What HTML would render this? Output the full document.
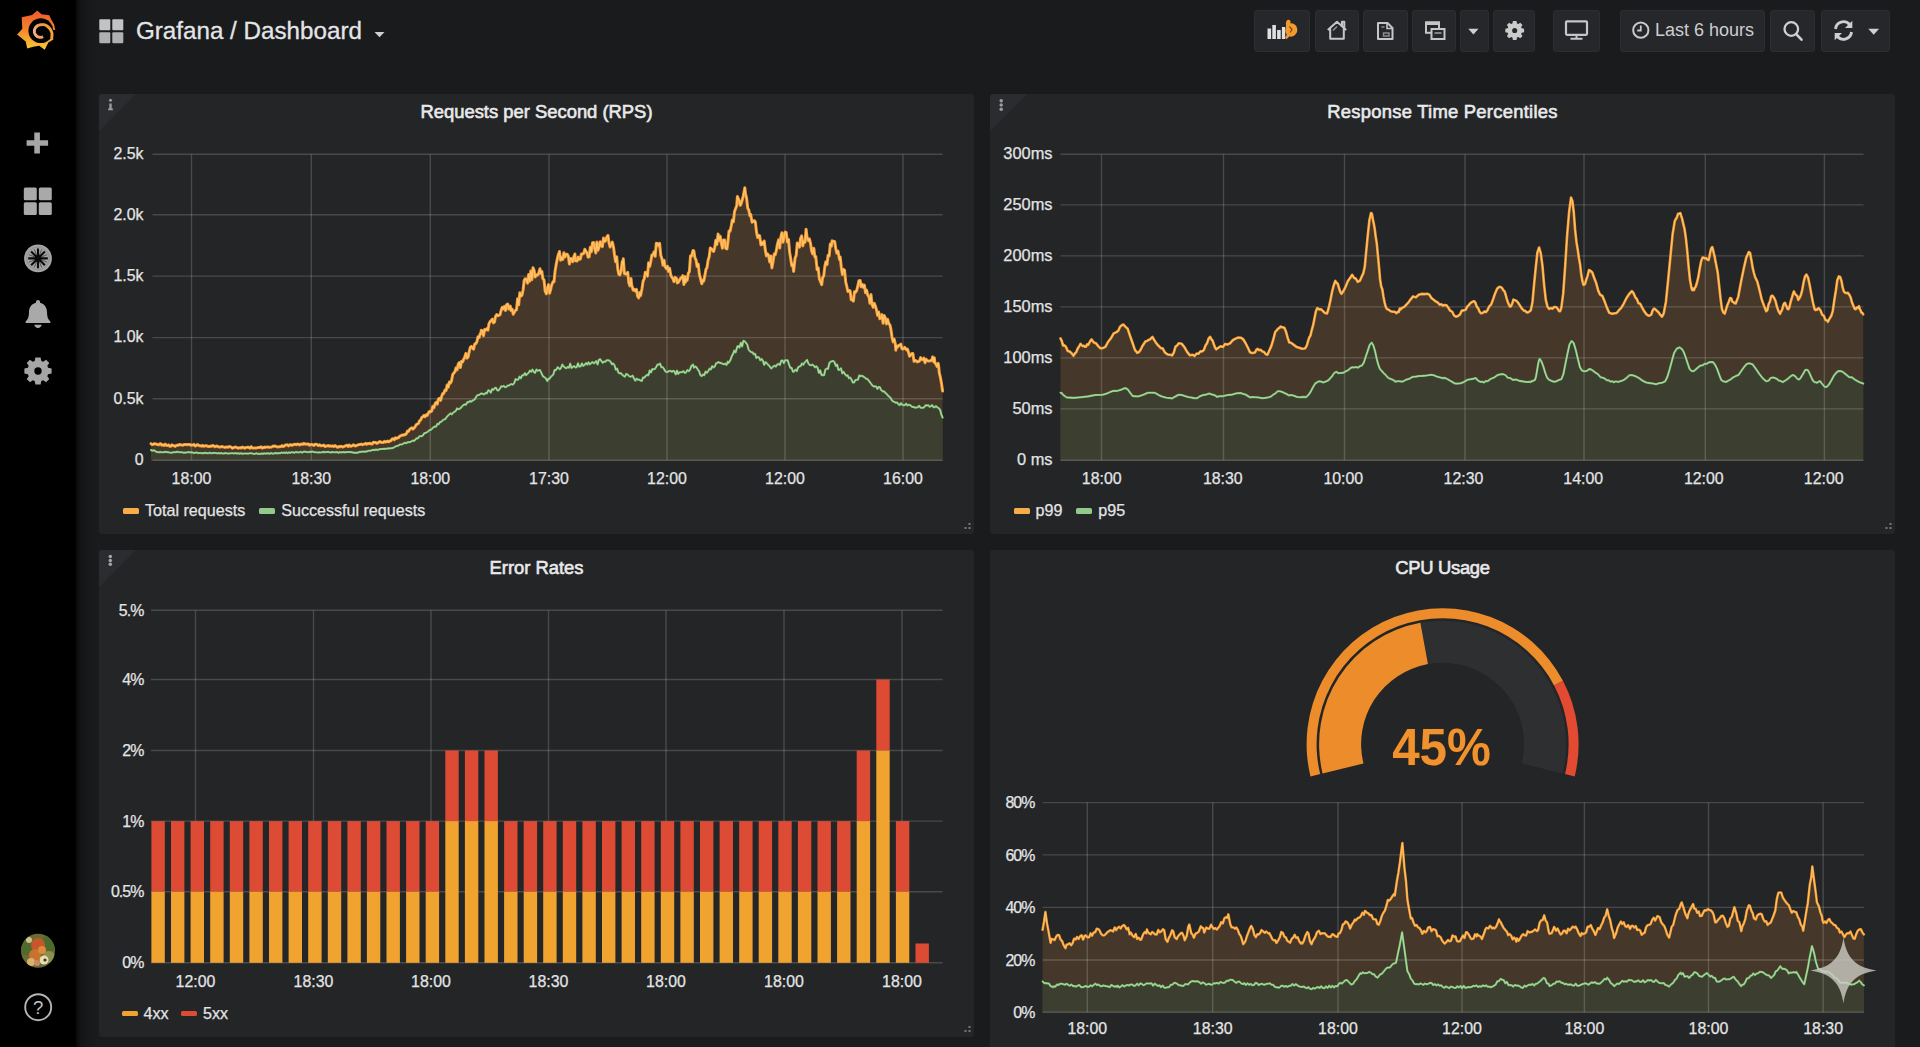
<!DOCTYPE html>
<html lang="en">
<head>
<meta charset="utf-8">
<title>Grafana / Dashboard</title>
<style>
html,body{margin:0;padding:0;}
body{width:1920px;height:1047px;overflow:hidden;position:relative;background:#191b1d;font-family:"Liberation Sans",sans-serif;color:#d8d9da;}
.sidebar{position:absolute;left:0;top:0;width:75px;height:1047px;background:#000;z-index:5;}
.sideshade{position:absolute;left:75px;top:0;width:24px;height:1047px;background:linear-gradient(to right,#000 0,rgba(2,3,4,.62) 9%,rgba(6,8,9,.34) 26%,rgba(10,13,14,.15) 60%,rgba(16,19,20,0) 100%);z-index:0;pointer-events:none;}
.sidebar svg{position:absolute;}
.navbar{position:absolute;left:76px;top:0;right:0;height:62px;}
.crumb{position:absolute;left:60px;top:14px;font-size:24.2px;line-height:34px;color:#e4e5e6;white-space:nowrap;-webkit-text-stroke:0.3px #e4e5e6;}
.btn{position:absolute;top:10.2px;height:40px;background:#26272a;border:1px solid #2d2e32;border-radius:3px;box-sizing:content-box;}
.btn svg{position:absolute;left:0;top:0;}
.btn span{position:absolute;white-space:nowrap;color:#cdcecf;font-size:18px;line-height:20px;}
.panel{position:absolute;background:#242527;border-radius:3px;overflow:hidden;}
.panel>svg{position:absolute;left:0;top:0;}
.ptitle{position:absolute;left:0;right:0;top:6.3px;text-align:center;font-size:18.4px;line-height:24px;color:#e9eaeb;-webkit-text-stroke:0.6px #e9eaeb;}
.corner{position:absolute;left:0;top:0;width:0;height:0;border-top:37px solid #2b2c2f;border-right:37px solid transparent;}
.legend{position:absolute;font-size:16.1px;line-height:20px;color:#e3e4e5;white-space:nowrap;-webkit-text-stroke:0.25px #e3e4e5;}
.legend i{display:inline-block;width:16px;height:5.5px;border-radius:1.5px;vertical-align:middle;margin:0 6px 1.5px 0;}
.legend b{font-weight:normal;margin-right:14px;}
text.ax{font-family:"Liberation Sans",sans-serif;font-size:15.9px;fill:#e3e4e5;stroke:#e3e4e5;stroke-width:0.25px;}
text.a2{font-size:16.4px;}
text.gv{font-family:"Liberation Sans",sans-serif;font-size:52.5px;font-weight:bold;fill:#ef922f;stroke:#3a2a14;stroke-width:1.2px;paint-order:stroke;}
.ol{fill:none;stroke:#f59a30;stroke-linejoin:round;stroke-linecap:round;}
.ol2{fill:none;stroke:#ffc46e;stroke-linejoin:round;stroke-linecap:round;}
.gl{fill:none;stroke:#79bd73;stroke-width:2.1;stroke-linejoin:round;stroke-linecap:round;}
.gl2{fill:none;stroke:#b4e0aa;stroke-width:0.9;stroke-linejoin:round;stroke-linecap:round;}
</style>
</head>
<body>

<div class="sidebar">
  <!-- logo -->
  <svg style="left:14px;top:6px" width="48" height="48" viewBox="14 6 48 48">
    <defs><linearGradient id="lg" x1="0" y1="0" x2="0" y2="1"><stop offset="0" stop-color="#f0572b"/><stop offset="0.45" stop-color="#f4812d"/><stop offset="1" stop-color="#f9cb35"/></linearGradient>
    <linearGradient id="lg2" gradientUnits="userSpaceOnUse" x1="52" y1="30" x2="33" y2="34"><stop offset="0" stop-color="#f5a431"/><stop offset="0.5" stop-color="#f3974a"/><stop offset="1" stop-color="#f6b595"/></linearGradient></defs>
    <path d="M21.7 17.2 L32.1 15 L37.2 10.500 L41.500 14.300 L49.300 15.200 L51.300 19.800 L54.100 24.600 L55.300 30.300 L52.800 30 L52.400 35 L53.400 39.500 L48.400 42.400 L44.700 49.800 L39.200 45.800 L33.200 46.700 L27.200 48.400 L25.700 41.400 L17.100 34.400 L22.300 28.700 Z" fill="url(#lg)"/>
    <circle cx="40.800" cy="30.700" r="12.400" fill="#040404"/>
    <path d="M52 29.600 L56 30.400 L54.500 35.500 L51.800 34.500Z" fill="#000"/>
    <path d="M51.6 38.2 L51.9 36.8 L52.0 35.5 L52.0 34.3 L51.9 33.0 L51.6 31.9 L51.1 30.8 L50.6 29.8 L50.0 28.9 L49.3 28.1 L48.6 27.4 L48.0 26.8 L47.3 26.2 L46.6 25.7 L45.8 25.3 L45.0 25.0 L44.2 24.7 L43.5 24.6 L42.7 24.6 L41.9 24.6 L41.2 24.7 L40.5 24.8 L39.8 24.9 L39.1 25.1 L38.4 25.3 L37.8 25.6 L37.2 26.0 L36.7 26.4 L36.2 26.9 L35.7 27.4 L35.3 28.0 L35.0 28.6 L34.7 29.2 L34.5 29.9 L34.4 30.6 L34.4 31.3 L34.4 32.0 L34.5 32.6 L34.7 33.3 L35.0 33.9 L35.3 34.5 L35.7 35.0 L36.1 35.5 L36.6 36.0 L37.1 36.4 L37.7 36.7 L38.3 37.0 L38.9 37.2 L39.5 37.3 L40.1 37.4 L40.7 37.4 L41.4 37.3 L41.9 37.2 L42.5 36.9 L43.0 36.6" fill="none" stroke="url(#lg2)" stroke-width="2.900" stroke-linecap="butt"/>
  </svg>
  <!-- plus -->
  <svg style="left:26px;top:132px" width="24" height="22" viewBox="0 0 24 22"><path d="M8.3 0.4h5.6v7.9h8.2v5.4h-8.2v7.9H8.3v-7.9H0.6V8.3h7.7z" fill="#a6a6a6"/></svg>
  <!-- grid -->
  <svg style="left:23px;top:187px" width="30" height="29" viewBox="0 0 30 29"><g fill="#a9a9a9"><rect x="0.8" y="0.4" width="13" height="12.8" rx="1.5"/><rect x="15.8" y="0.4" width="13" height="12.8" rx="1.5"/><rect x="0.8" y="15.2" width="13" height="12.8" rx="1.5"/><rect x="15.8" y="15.2" width="13" height="12.8" rx="1.5"/></g></svg>
  <!-- compass/explore -->
  <svg style="left:23px;top:244px" width="30" height="30" viewBox="0 0 30 30"><circle cx="15" cy="14.4" r="13.9" fill="#a4a4a4"/><circle cx="15" cy="14.4" r="11.3" fill="none" stroke="#8a8a8a" stroke-width="0.8"/><g stroke="#0a0a0a" stroke-width="2.1" stroke-linecap="butt"><path d="M15 4.6v19.600M5.200 14.400h19.600M8.100 7.500l13.800 13.800M21.900 7.500L8.100 21.300"/></g><g stroke="#0a0a0a" stroke-width="0.9"><path d="M11.200 5.300l7.600 18.200M18.800 5.300l-7.600 18.200M5.900 10.600l18.200 7.600M5.900 18.200l18.200-7.600" opacity="0.55"/></g><circle cx="15" cy="14.400" r="3.400" fill="#0a0a0a"/></svg>
  <!-- bell -->
  <svg style="left:24px;top:299px" width="28" height="31" viewBox="0 0 28 31"><path d="M14 1c1.2 0 2 .8 2 1.9v.9c4.200 1 7 4.500 7 9.200 0 5 1.100 7.600 3.300 9.400.5.400.200 1.600-.8 1.600H2.500c-1 0-1.300-1.200-.8-1.600C3.900 20.600 5 18 5 13c0-4.700 2.800-8.200 7-9.200v-.9C12 1.800 12.800 1 14 1z" fill="#a9a9a9"/><path d="M10.300 25.800h7.400c-.3 1.900-1.800 3.200-3.700 3.200s-3.400-1.300-3.700-3.200z" fill="#a9a9a9"/></svg>
  <!-- gear -->
  <svg style="left:24px;top:357px" width="28" height="28" viewBox="-14 -14 28 28"><path id="gearp" fill="#a6a6a6" fill-rule="evenodd" d="M-2.600 -13.600H2.600L3.300 -10.100L5.200 -9.300L8.100 -11.300L11.300 -8.100L9.300 -5.200L10.100 -3.300L13.600 -2.600V2.600L10.100 3.300L9.300 5.200L11.300 8.100L8.100 11.300L5.200 9.300L3.300 10.100L2.600 13.600H-2.600L-3.300 10.100L-5.200 9.300L-8.100 11.300L-11.300 8.100L-9.300 5.200L-10.100 3.300L-13.600 2.600V-2.600L-10.100 -3.300L-9.300 -5.200L-11.300 -8.100L-8.100 -11.300L-5.200 -9.300L-3.300 -10.100Z M0 -3.700A3.700 3.700 0 1 0 0 3.700A3.700 3.700 0 1 0 0 -3.700Z"/></svg>
  <!-- avatar -->
  <svg style="left:20px;top:933px" width="36" height="36" viewBox="0 0 36 36">
    <defs><clipPath id="av"><circle cx="18" cy="17.700" r="17"/></clipPath></defs>
    <g clip-path="url(#av)">
      <rect width="36" height="36" fill="#6b6a35"/>
      <circle cx="6" cy="14" r="8" fill="#4f6a2c"/><circle cx="30" cy="10" r="8" fill="#4a6b2e"/><circle cx="29" cy="24" r="6" fill="#8c8f52"/>
      <circle cx="18" cy="12" r="7" fill="#c4582a"/><circle cx="15" cy="22" r="6" fill="#c9722f"/><circle cx="22" cy="17" r="4" fill="#dd8a3a"/>
      <circle cx="24" cy="27" r="4.500" fill="#e8dcb0"/><circle cx="11" cy="29" r="4" fill="#d9b36a"/><circle cx="9" cy="7" r="3" fill="#cfc38a"/>
      <circle cx="25" cy="27" r="1.600" fill="#3a3a20"/><circle cx="17" cy="30" r="3" fill="#c98a6a"/>
    </g>
  </svg>
  <!-- help -->
  <svg style="left:23px;top:992px" width="30" height="30" viewBox="0 0 30 30"><circle cx="15.200" cy="15.200" r="13" fill="none" stroke="#b4b4b4" stroke-width="1.900"/><text x="15.200" y="21.800" text-anchor="middle" font-family="Liberation Sans, sans-serif" font-size="18.500" fill="#c4c4c4">?</text></svg>
</div>

<div class="sideshade"></div>
<div class="navbar">
  <svg style="position:absolute;left:23px;top:19px" width="25" height="25" viewBox="0 0 25 25"><g fill="#c3c3c3"><rect x="0.300" y="0.300" width="11" height="11" rx="1"/><rect x="13.300" y="0.300" width="11" height="11" rx="1"/><rect x="0.300" y="13.300" width="11" height="11" rx="1" fill="#b0b0b0"/><rect x="13.300" y="13.300" width="11" height="11" rx="1" fill="#b0b0b0"/></g></svg>
  <div class="crumb">Grafana / Dashboard</div>
  <svg style="position:absolute;left:298px;top:31px" width="12" height="8" viewBox="0 0 12 8"><path d="M0.500 1h10L5.500 6.300z" fill="#cfcfcf"/></svg>
</div>

<!-- toolbar buttons (page coords) -->
<div class="btn" style="left:1254px;width:54px">
  <svg width="54" height="40" viewBox="1255 11.500 54 40"><g fill="#e0e0e0"><rect x="1267.500" y="29" width="3.600" height="10.500"/><rect x="1272.300" y="25.500" width="3.600" height="14"/><rect x="1277.100" y="30.500" width="3.600" height="9"/><rect x="1281.900" y="27.500" width="3.300" height="12"/></g><path d="M1287.500 20.500c2.200-.8 3.600 1 2.800 3.200 3.800-.6 7.200 2.600 7 6.800-.2 4.400-4 7.300-8 6.600l-2.600 2.600-1.600-1.400 1.800-3.200c-1.600-1.800-1.900-4-1.200-6.200.5-1.600.3-3.400.2-5 .1-1.600.6-2.800 1.600-3.400z" fill="#f29a2e"/><path d="M1289.500 27l2.500 3-2 3" stroke="#7a4a10" stroke-width="1.200" fill="none"/></svg>
</div>
<div class="btn" style="left:1315px;width:41.800px">
  <svg width="43" height="40" viewBox="1316 11.500 43 40"><path d="M1327.800 30.500l9.200-8.300 9.200 8.300M1330.200 29v10.300h13.600V29M1342 26.500v-4.300h2.300v6.200" fill="none" stroke="#c6c6c6" stroke-width="2" stroke-linejoin="round"/><path d="M1333 31l4-4" stroke="#9a9a9a" stroke-width="1.300"/></svg>
</div>
<div class="btn" style="left:1363px;width:42.800px">
  <svg width="43" height="40" viewBox="1364.500 11.500 43 40"><path d="M1378.500 23.500h9.500l5 5v11h-14.500z" fill="none" stroke="#c6c6c6" stroke-width="2" stroke-linejoin="round"/><path d="M1387.500 23.500v5.500h5.500" fill="none" stroke="#c6c6c6" stroke-width="1.600"/><path d="M1382 27.500h3M1384 33.500h5.500v3h-5.500z" stroke="#8f8f8f" stroke-width="1.400" fill="none"/></svg>
</div>
<div class="btn" style="left:1412px;width:41.500px">
  <svg width="43" height="40" viewBox="1413 11.500 43 40"><rect x="1426" y="22.800" width="13" height="10.500" fill="none" stroke="#c6c6c6" stroke-width="2"/><rect x="1426" y="22.300" width="13" height="3.200" fill="#c6c6c6"/><rect x="1431.500" y="29.500" width="13" height="10" fill="#26272a" stroke="#c6c6c6" stroke-width="2"/><path d="M1434.500 33.500h7" stroke="#9a9a9a" stroke-width="1.600"/></svg>
</div>
<div class="btn" style="left:1460px;width:27px">
  <svg width="27" height="40" viewBox="1461 11.500 27 40"><path d="M1468.300 29.300h10.200l-5.100 5.700z" fill="#cfcfcf"/></svg>
</div>
<div class="btn" style="left:1492.500px;width:40px">
  <svg width="41" height="40" viewBox="1493.500 11.500 41 40"><g transform="translate(1514.200 31) scale(0.690)"><path fill="#cbcbcb" fill-rule="evenodd" d="M-2.600 -13.600H2.600L3.300 -10.100L5.200 -9.300L8.100 -11.300L11.300 -8.100L9.300 -5.200L10.100 -3.300L13.600 -2.600V2.600L10.100 3.300L9.300 5.200L11.300 8.100L8.100 11.300L5.200 9.300L3.300 10.100L2.600 13.600H-2.600L-3.300 10.100L-5.200 9.300L-8.100 11.300L-11.300 8.100L-9.300 5.200L-10.100 3.300L-13.600 2.600V-2.600L-10.100 -3.300L-9.300 -5.200L-11.300 -8.100L-8.100 -11.300L-5.200 -9.300L-3.300 -10.100Z M0 -3.700A3.700 3.700 0 1 0 0 3.700A3.700 3.700 0 1 0 0 -3.700Z"/></g></svg>
</div>
<div class="btn" style="left:1553px;width:45.300px">
  <svg width="47" height="40" viewBox="1554 11.500 47 40"><rect x="1566" y="21.800" width="21" height="13.500" rx="1" fill="none" stroke="#c6c6c6" stroke-width="2.200"/><path d="M1576.500 35.300v3.500M1570.500 39.300h12" stroke="#c6c6c6" stroke-width="2" fill="none"/></svg>
</div>
<div class="btn" style="left:1619.500px;width:143.800px">
  <svg width="145" height="40" viewBox="1620.500 11.500 145 40"><circle cx="1640.300" cy="30.700" r="7.600" fill="none" stroke="#c9c9c9" stroke-width="2"/><path d="M1640.300 26v5h-3.600" fill="none" stroke="#c9c9c9" stroke-width="1.800"/></svg>
  <span style="left:34.500px;top:9.300px">Last 6 hours</span>
</div>
<div class="btn" style="left:1770px;width:43.300px">
  <svg width="45" height="40" viewBox="1771 11.500 45 40"><circle cx="1791.300" cy="29.500" r="6.800" fill="none" stroke="#cfcfcf" stroke-width="2.300"/><path d="M1796.200 34.600l5.300 5.600" stroke="#cfcfcf" stroke-width="2.600" stroke-linecap="round"/></svg>
</div>
<div class="btn" style="left:1820.500px;width:67.300px">
  <svg width="69" height="40" viewBox="1821.500 11.500 69 40"><g fill="none" stroke="#cfcfcf" stroke-width="2.800"><path d="M1835 29.500a8 8 0 0 1 14-4.500"/><path d="M1851 32.500a8 8 0 0 1-14 4.500"/></g><path d="M1851.800 21.200v7.300h-7.300z" fill="#cfcfcf"/><path d="M1834.200 40.800v-7.300h7.300z" fill="#cfcfcf"/><path d="M1867.800 29.300h10.800l-5.400 5.900z" fill="#cfcfcf"/></svg>
</div>

<!-- Panel 1 -->
<div class="panel" style="left:99px;top:94px;width:875px;height:440px">
  <div class="corner"></div>
  <svg width="875" height="440" viewBox="99 94 875 440">
    <circle cx="110.500" cy="100.200" r="1.500" fill="#9a9b9d"/><path d="M109.300 103.500h2.400v5h1.200v1.800h-4.800v-1.800h1.200z" fill="#9a9b9d"/>
    <path d="M151.0 443.7 L152.1 444.4 L153.2 444.4 L154.3 443.6 L155.4 444.1 L156.5 444.1 L157.6 444.6 L158.7 444.9 L159.8 443.8 L160.9 443.8 L162.0 445.3 L163.1 444.7 L164.2 445.4 L165.3 444.2 L166.4 445.1 L167.5 445.6 L168.6 444.9 L169.7 446.2 L170.8 446.2 L171.9 444.9 L173.3 445.6 L174.1 445.8 L175.2 446.4 L176.3 445.4 L177.4 445.1 L178.5 445.3 L179.6 444.6 L180.7 444.8 L181.8 445.1 L182.9 445.2 L184.0 444.6 L185.1 444.6 L186.2 444.5 L187.3 444.8 L188.4 444.4 L190.0 444.5 L190.6 445.3 L191.7 444.9 L192.8 445.1 L193.9 444.4 L195.0 445.9 L196.1 445.7 L197.2 444.6 L198.3 445.0 L199.4 445.7 L200.5 445.8 L201.6 446.2 L202.7 445.4 L203.8 446.2 L204.9 446.0 L206.0 445.5 L207.1 446.0 L208.3 446.5 L209.4 446.6 L210.5 446.1 L211.6 446.3 L212.7 445.5 L213.8 445.9 L214.9 446.8 L216.0 446.3 L217.1 446.0 L218.2 446.7 L219.3 447.0 L220.4 447.0 L221.5 446.6 L222.6 446.8 L223.7 447.0 L224.8 447.5 L225.9 447.1 L227.0 447.0 L228.1 447.2 L229.2 446.6 L230.3 446.7 L231.7 447.6 L232.5 448.2 L233.6 447.6 L234.7 447.3 L235.8 447.0 L236.9 447.5 L238.0 448.2 L239.1 447.9 L240.2 447.6 L241.3 448.0 L242.4 447.1 L243.5 447.5 L244.6 448.2 L245.7 447.6 L246.8 447.4 L247.9 447.1 L249.0 447.6 L250.1 448.2 L251.2 446.7 L252.3 447.9 L253.4 448.0 L254.5 448.1 L255.6 447.9 L256.7 448.0 L257.8 447.5 L258.9 447.6 L260.0 447.4 L261.1 446.8 L262.2 448.1 L263.3 447.6 L264.4 447.0 L265.0 447.5 L265.5 447.4 L266.6 447.1 L267.7 447.0 L268.8 447.2 L269.9 447.3 L271.0 447.2 L272.1 446.8 L273.2 446.1 L274.3 446.3 L275.4 446.1 L276.5 446.6 L277.6 447.0 L278.7 446.8 L279.8 446.7 L280.9 446.6 L282.0 445.6 L283.1 446.5 L284.2 446.1 L285.3 445.1 L286.4 444.9 L287.5 444.8 L288.6 445.9 L289.7 445.0 L290.8 444.6 L291.9 445.4 L293.0 444.8 L294.1 444.3 L295.2 444.3 L296.3 444.8 L297.4 444.1 L298.5 444.2 L299.6 444.9 L300.7 444.3 L301.8 444.0 L303.3 444.2 L304.0 443.4 L305.1 444.1 L306.2 444.3 L307.3 443.9 L308.4 443.9 L309.5 445.3 L310.6 444.7 L311.7 444.3 L312.8 445.0 L313.9 445.5 L315.0 444.2 L316.1 444.3 L317.2 444.6 L318.3 445.6 L319.4 444.7 L320.5 445.7 L321.7 445.7 L322.8 445.6 L323.9 445.1 L325.0 446.5 L326.1 446.2 L327.2 445.9 L328.3 445.4 L329.4 446.2 L330.5 445.9 L331.6 446.2 L332.7 445.9 L333.8 446.5 L334.9 445.6 L336.0 446.1 L337.1 447.2 L338.2 447.2 L339.3 446.3 L340.0 446.8 L341.5 446.3 L342.6 447.1 L343.7 446.7 L344.8 446.1 L345.9 445.7 L347.0 445.2 L348.1 446.5 L349.2 445.0 L350.3 446.2 L351.4 446.3 L352.5 445.6 L353.6 444.8 L354.7 445.8 L355.8 445.9 L356.9 445.4 L358.0 444.9 L359.1 444.6 L360.2 444.4 L361.3 444.1 L362.4 444.8 L363.5 444.2 L365.0 444.1 L365.7 443.4 L366.8 444.2 L367.9 443.4 L369.0 443.7 L370.1 443.2 L371.2 444.0 L372.3 443.9 L373.4 442.2 L374.5 442.4 L375.6 442.4 L376.7 443.5 L377.8 443.0 L378.9 442.0 L380.0 441.6 L381.1 442.3 L382.2 442.5 L383.3 442.5 L384.4 441.3 L385.5 442.1 L386.6 441.6 L387.7 441.1 L388.8 441.9 L390.0 440.7 L391.0 440.8 L392.1 439.0 L393.2 438.7 L394.3 439.8 L395.4 437.8 L396.5 438.5 L397.6 437.7 L398.7 437.7 L399.8 436.2 L400.9 435.7 L402.0 435.1 L403.3 435.2 L404.2 434.6 L405.3 434.7 L406.4 433.7 L407.5 431.1 L408.6 431.4 L409.7 429.4 L410.8 428.4 L411.9 427.7 L413.0 429.1 L414.1 428.1 L415.0 426.9 L416.3 424.6 L417.4 424.1 L418.5 423.3 L419.6 420.7 L420.7 420.0 L421.8 417.5 L423.3 416.3 L424.0 415.3 L425.1 416.8 L426.2 414.8 L427.3 415.4 L428.4 412.9 L429.5 411.4 L430.3 412.0 L431.7 411.1 L432.8 406.4 L434.0 407.6 L435.1 403.7 L436.2 402.3 L437.3 404.2 L438.4 399.0 L439.5 398.4 L440.6 400.4 L441.7 396.3 L442.8 393.4 L443.7 393.6 L445.0 390.1 L446.1 390.5 L447.2 384.9 L448.3 387.1 L449.4 381.9 L450.5 383.1 L451.6 380.6 L452.7 374.6 L454.0 372.8 L454.9 371.8 L456.0 367.9 L457.1 369.9 L458.2 364.3 L459.3 362.5 L460.4 367.6 L461.5 361.3 L462.6 361.9 L463.7 359.3 L464.8 356.8 L465.9 353.4 L467.0 358.1 L468.1 357.0 L468.8 353.4 L470.3 347.3 L471.4 346.4 L472.5 347.9 L473.6 349.2 L474.7 344.0 L475.8 343.6 L476.9 341.8 L478.0 336.7 L479.1 337.5 L480.2 333.8 L480.7 334.1 L481.3 330.3 L482.4 330.7 L483.5 335.7 L484.6 329.6 L485.7 330.1 L486.8 328.7 L487.9 330.2 L489.0 323.7 L490.1 321.6 L491.2 320.5 L492.3 319.1 L493.4 322.9 L494.5 322.0 L495.5 316.5 L496.7 314.5 L497.8 315.8 L498.9 315.4 L500.0 314.8 L501.1 310.5 L502.2 307.4 L503.3 308.9 L504.4 306.3 L505.5 310.5 L506.6 304.7 L507.7 304.0 L508.8 309.1 L510.3 306.0 L511.0 310.6 L512.1 309.0 L513.2 314.2 L514.7 311.6 L515.4 310.3 L516.5 309.9 L517.6 298.8 L518.7 304.8 L519.8 292.8 L520.9 296.2 L522.0 295.2 L523.1 290.0 L524.2 280.5 L525.1 278.8 L526.4 279.1 L527.5 283.2 L528.6 274.6 L529.7 281.2 L530.8 270.9 L531.9 279.7 L533.0 267.7 L534.1 270.4 L535.2 277.0 L536.3 274.8 L537.4 275.3 L538.5 273.6 L540.0 268.8 L540.7 273.4 L541.8 271.3 L542.9 278.8 L544.0 279.9 L545.1 290.9 L546.4 293.8 L547.4 288.8 L548.5 284.6 L549.6 293.2 L550.7 289.5 L551.8 284.5 L553.2 281.5 L554.0 281.8 L555.1 271.0 L556.2 264.4 L557.7 257.1 L558.4 254.5 L559.5 251.5 L560.6 260.2 L561.7 257.2 L562.8 259.5 L563.9 252.8 L565.0 257.0 L566.1 254.2 L567.2 254.2 L568.3 256.2 L569.4 264.1 L570.5 258.5 L571.6 258.7 L572.7 261.8 L573.8 256.8 L574.9 254.0 L575.4 260.8 L576.0 260.1 L577.1 261.1 L578.2 257.1 L579.3 259.4 L580.4 259.0 L581.4 253.9 L582.6 254.1 L583.7 253.4 L584.8 249.3 L585.9 251.3 L587.0 252.8 L588.1 257.2 L589.2 256.8 L590.3 247.2 L591.4 251.9 L592.5 242.8 L593.6 242.6 L594.7 248.3 L595.8 253.0 L596.9 242.1 L598.0 250.3 L599.1 247.3 L600.2 241.7 L601.3 245.8 L602.4 246.6 L603.5 238.1 L604.6 241.5 L605.7 240.6 L606.8 237.0 L608.0 235.4 L609.0 242.9 L610.1 247.1 L611.2 244.6 L612.3 242.1 L613.4 246.5 L614.0 250.8 L614.5 254.8 L615.6 261.8 L616.7 256.7 L617.8 269.5 L618.9 274.3 L619.9 275.0 L621.1 270.7 L622.2 261.6 L622.8 264.4 L623.3 258.7 L624.4 273.7 L625.5 273.9 L626.6 274.2 L627.7 272.2 L628.8 282.8 L629.9 285.9 L631.0 278.5 L631.7 285.2 L633.2 290.2 L634.3 289.3 L635.4 291.1 L636.5 289.4 L637.6 296.2 L638.7 297.9 L639.8 292.5 L640.6 295.6 L642.0 288.5 L643.1 281.2 L644.2 278.9 L645.3 272.2 L646.5 273.8 L647.5 276.1 L648.6 262.7 L649.7 266.5 L650.8 261.5 L651.9 255.1 L653.0 255.0 L654.1 251.8 L655.2 256.3 L656.3 243.3 L657.4 243.4 L658.3 245.7 L659.6 243.4 L660.8 255.5 L661.9 258.7 L663.0 265.2 L664.1 260.3 L664.8 265.9 L666.3 268.6 L667.4 266.2 L668.5 271.4 L669.6 268.2 L670.7 274.8 L671.8 277.2 L672.9 278.5 L674.0 281.7 L675.1 277.4 L676.6 278.4 L677.3 283.0 L678.4 282.3 L679.5 280.2 L680.6 278.3 L681.7 277.5 L682.8 275.7 L683.9 284.6 L685.0 276.6 L685.5 282.2 L686.1 279.6 L687.2 280.3 L688.3 273.3 L689.4 271.6 L690.5 255.9 L691.6 256.2 L693.0 250.6 L693.8 250.7 L694.9 257.6 L696.0 259.9 L697.1 266.5 L698.2 264.0 L699.3 273.9 L700.4 278.3 L701.8 283.8 L702.6 280.3 L703.7 281.1 L704.8 275.9 L705.9 269.5 L707.0 267.6 L708.1 260.1 L709.2 256.7 L710.3 247.9 L711.4 248.7 L712.5 250.3 L713.6 251.5 L714.7 247.9 L715.8 240.3 L716.9 244.5 L718.1 233.9 L719.1 240.7 L720.2 236.1 L721.3 243.0 L722.4 248.3 L723.5 240.1 L724.6 240.0 L725.7 248.4 L727.0 248.9 L727.9 242.1 L729.0 231.1 L730.1 231.2 L731.2 226.0 L732.3 220.1 L733.4 221.8 L734.5 211.7 L735.6 208.6 L736.7 205.9 L737.4 196.6 L738.9 200.0 L740.3 205.4 L741.1 203.8 L742.2 200.0 L743.3 195.8 L744.8 187.7 L745.5 193.5 L746.6 198.3 L747.7 208.2 L748.8 210.1 L749.9 215.8 L750.7 214.4 L752.1 222.2 L753.2 221.7 L754.3 220.6 L755.4 222.2 L756.5 232.1 L757.6 237.5 L758.7 235.4 L759.6 235.7 L760.9 244.9 L762.0 242.3 L763.1 244.5 L764.2 241.0 L765.3 250.1 L766.4 255.9 L767.5 253.8 L768.6 255.4 L769.7 262.0 L770.8 255.9 L771.4 263.6 L771.9 267.9 L773.1 261.2 L774.2 254.0 L775.3 254.7 L776.4 250.2 L777.3 244.8 L778.6 239.8 L779.7 248.0 L780.8 237.3 L781.9 232.7 L783.0 242.3 L784.1 236.1 L785.2 232.1 L786.2 232.5 L787.4 242.1 L788.5 239.5 L789.6 252.2 L790.7 258.7 L791.8 265.7 L792.9 264.2 L793.6 271.4 L795.1 258.0 L796.2 255.4 L797.3 242.9 L798.0 244.0 L799.5 247.1 L800.6 238.3 L801.7 235.8 L802.8 245.9 L803.9 241.2 L805.0 242.3 L806.1 229.2 L807.0 237.0 L808.3 240.6 L809.4 238.8 L810.5 243.3 L811.6 250.8 L812.7 253.9 L813.8 248.3 L814.9 257.1 L815.8 256.6 L817.1 269.8 L818.2 267.8 L819.3 278.7 L820.4 281.3 L821.7 284.7 L822.6 277.7 L823.7 276.2 L824.8 266.6 L825.9 261.7 L827.0 264.7 L828.1 255.2 L829.2 255.9 L830.3 244.0 L831.4 246.2 L832.1 240.8 L833.6 241.4 L834.7 241.6 L835.8 248.9 L836.9 253.3 L838.0 251.0 L839.5 259.6 L840.2 256.9 L841.3 267.4 L842.4 274.5 L843.5 269.2 L844.6 270.3 L845.7 281.9 L846.8 286.5 L847.9 291.5 L849.0 290.6 L850.1 290.8 L851.2 299.7 L852.8 299.7 L853.4 301.2 L854.5 291.7 L855.6 292.2 L856.7 290.4 L857.8 286.2 L858.9 280.8 L860.2 280.6 L861.1 286.8 L862.2 284.3 L863.3 287.5 L864.4 285.1 L865.5 292.8 L866.6 290.1 L867.7 295.0 L869.1 297.3 L869.9 303.2 L871.0 294.6 L872.1 304.7 L873.2 307.3 L874.3 303.4 L875.4 306.1 L876.5 310.0 L877.6 315.4 L878.7 312.0 L879.8 318.8 L881.0 317.6 L882.0 314.6 L883.1 323.2 L884.2 315.5 L885.3 317.9 L886.5 324.0 L887.6 319.3 L888.7 323.4 L889.9 324.9 L890.9 329.3 L892.0 337.0 L893.1 341.9 L894.2 339.1 L895.3 343.8 L895.8 350.2 L896.4 345.7 L897.5 347.2 L898.6 345.6 L899.7 345.0 L900.8 344.2 L901.9 348.6 L903.0 349.1 L904.1 348.3 L904.7 347.3 L906.3 349.8 L907.4 349.1 L908.5 352.3 L909.6 356.3 L910.7 355.2 L911.8 353.6 L912.9 353.6 L914.0 361.4 L915.1 360.3 L916.5 361.1 L917.3 362.0 L918.4 361.5 L919.5 361.1 L920.6 357.6 L921.7 359.5 L922.8 359.7 L923.9 358.0 L925.0 362.7 L926.1 359.2 L927.2 360.8 L928.3 360.9 L929.4 361.0 L930.5 360.6 L931.6 360.7 L932.7 356.9 L933.8 361.9 L934.3 357.8 L934.9 362.6 L936.0 364.3 L937.1 366.5 L938.2 363.3 L938.7 366.6 L939.3 372.9 L940.4 377.4 L941.5 383.6 L942.6 391.0 L942.6 460.4 L151.0 460.4 Z" fill="#45382a"/><path d="M151.0 450.0 L152.3 450.8 L153.6 450.3 L154.9 450.7 L156.2 451.8 L158.0 452.1 L158.8 452.2 L160.1 451.9 L161.4 452.2 L162.7 452.2 L164.0 452.2 L165.3 451.8 L166.6 452.1 L167.9 452.1 L169.2 452.4 L170.5 452.7 L171.8 452.7 L173.1 452.3 L174.4 452.2 L175.7 452.1 L177.0 451.9 L178.3 451.9 L179.6 452.3 L180.9 452.2 L182.2 452.3 L183.5 452.8 L184.9 452.5 L186.2 452.6 L187.5 452.3 L188.8 452.1 L190.1 452.4 L191.4 452.2 L192.7 452.6 L194.0 453.1 L195.3 452.8 L196.6 452.4 L197.9 453.1 L199.2 453.0 L200.5 453.0 L201.8 453.2 L203.1 453.0 L204.4 453.1 L205.7 452.7 L207.0 453.3 L208.3 453.3 L209.6 452.6 L210.9 453.2 L212.2 453.2 L213.5 452.9 L214.8 453.0 L216.1 453.0 L217.4 453.4 L218.7 453.1 L220.0 453.4 L221.3 453.0 L222.6 453.5 L223.9 453.5 L225.2 453.1 L226.5 453.3 L227.8 453.6 L229.1 453.5 L230.4 453.3 L231.7 453.2 L233.0 453.2 L234.3 453.5 L235.6 453.0 L236.9 453.7 L238.2 453.2 L239.5 453.8 L240.8 453.2 L242.1 453.8 L243.4 453.6 L244.7 453.5 L246.0 453.5 L247.3 453.6 L248.6 453.6 L249.9 453.3 L251.3 453.3 L252.6 453.6 L253.9 454.0 L255.2 453.7 L256.5 453.2 L257.8 453.9 L259.1 453.8 L260.4 454.0 L261.7 453.4 L263.0 453.9 L264.3 453.3 L265.0 453.7 L266.9 453.4 L268.2 453.3 L269.5 453.9 L270.8 453.1 L272.1 453.4 L273.4 453.7 L274.7 453.1 L276.0 453.0 L277.3 453.5 L278.6 453.1 L279.9 453.3 L281.2 452.6 L282.5 452.9 L283.8 452.6 L285.1 453.0 L286.4 452.4 L287.7 453.2 L289.0 452.3 L290.3 452.9 L291.6 452.2 L292.9 452.3 L294.2 452.8 L295.5 452.1 L296.8 452.1 L298.1 452.5 L299.4 452.2 L300.7 451.8 L302.0 452.7 L303.3 451.8 L304.6 451.6 L305.9 451.9 L306.7 452.0 L308.5 452.3 L309.8 451.7 L311.1 451.9 L312.4 451.6 L313.7 452.0 L315.0 452.3 L316.4 452.3 L317.7 452.5 L319.0 452.4 L320.3 452.5 L321.6 452.3 L322.9 452.1 L324.2 451.9 L325.5 452.3 L326.8 452.0 L328.1 451.8 L329.4 452.2 L330.7 452.6 L332.0 451.9 L333.3 452.3 L334.6 452.2 L335.9 452.3 L337.2 452.0 L338.5 452.8 L339.8 452.1 L341.1 452.4 L342.4 452.3 L343.7 451.9 L345.0 452.4 L346.3 452.1 L347.6 452.0 L348.9 452.0 L350.2 452.1 L351.5 452.1 L352.8 452.6 L354.1 452.5 L355.4 452.9 L356.7 452.6 L358.0 452.8 L359.3 451.9 L360.6 452.0 L361.9 451.6 L363.2 451.8 L364.5 451.6 L365.8 451.6 L367.1 451.4 L368.4 450.8 L369.7 450.8 L371.0 450.7 L372.3 450.0 L373.6 449.9 L374.9 450.1 L376.2 449.6 L377.5 450.1 L378.8 449.4 L380.1 449.1 L381.4 449.0 L382.8 448.9 L384.1 448.7 L385.4 448.9 L386.7 448.7 L388.0 448.3 L389.3 448.6 L390.0 448.2 L391.9 448.2 L393.2 447.8 L394.5 447.1 L395.8 446.3 L397.1 446.0 L398.4 445.6 L399.7 444.5 L401.0 444.5 L402.3 444.3 L403.6 443.4 L404.9 442.8 L406.2 443.3 L407.5 442.3 L408.8 442.1 L410.1 442.2 L411.4 441.4 L412.7 440.5 L414.0 441.0 L415.0 440.0 L416.6 438.2 L417.9 438.4 L419.2 436.6 L420.5 436.1 L421.8 436.2 L423.1 435.1 L424.4 433.1 L425.7 433.0 L427.0 432.1 L428.3 431.4 L429.6 430.0 L430.9 429.9 L431.7 429.0 L433.5 427.3 L434.8 426.5 L436.1 426.6 L437.4 423.8 L438.7 424.2 L440.0 422.0 L441.3 421.8 L442.6 420.4 L443.9 419.5 L445.2 419.2 L446.5 417.3 L447.9 415.6 L449.2 414.5 L450.5 413.4 L451.8 414.4 L453.1 412.8 L454.0 412.0 L455.7 411.1 L457.0 408.4 L458.3 409.3 L459.6 408.8 L460.9 407.8 L462.2 406.3 L463.5 405.0 L464.8 404.4 L466.1 404.6 L467.4 402.1 L468.7 402.1 L470.0 401.0 L471.3 401.7 L472.6 400.4 L473.9 400.0 L475.2 398.8 L476.5 396.1 L477.8 395.0 L479.1 395.0 L480.7 393.8 L481.7 393.4 L483.0 393.9 L484.3 394.4 L485.6 392.8 L486.9 393.3 L488.2 390.3 L489.5 390.8 L490.8 392.7 L492.1 389.2 L493.4 389.8 L494.7 388.1 L496.0 387.8 L497.3 390.4 L498.6 390.4 L499.9 388.7 L501.2 386.3 L502.5 386.6 L503.8 385.9 L505.1 387.2 L506.4 386.9 L507.7 385.5 L509.0 385.5 L510.3 384.6 L511.6 384.1 L512.9 384.7 L514.3 382.9 L515.6 379.1 L516.9 379.8 L518.2 379.6 L519.5 376.6 L520.8 378.3 L522.1 375.4 L523.4 375.4 L525.0 373.1 L526.0 375.2 L527.3 374.0 L528.6 372.8 L529.9 370.6 L531.2 371.7 L532.5 369.6 L533.8 371.9 L535.1 372.9 L536.4 369.5 L537.7 370.7 L539.0 370.3 L540.0 370.1 L541.6 373.4 L542.9 376.2 L544.2 377.1 L545.5 377.9 L547.3 381.1 L548.1 378.9 L549.4 378.9 L550.7 376.9 L552.0 375.7 L553.3 374.5 L554.6 370.0 L555.9 370.1 L557.7 367.2 L558.5 368.0 L559.8 369.3 L561.1 367.6 L562.4 364.5 L563.7 366.5 L565.0 367.6 L566.3 368.2 L567.6 367.0 L568.9 367.7 L570.2 363.7 L571.5 368.0 L572.8 366.9 L574.1 366.1 L575.4 367.4 L576.7 367.2 L578.0 363.3 L579.3 366.6 L580.7 366.3 L582.0 363.4 L583.3 365.9 L584.6 365.0 L585.9 363.0 L587.3 364.7 L588.5 362.3 L589.8 364.3 L591.1 363.2 L592.4 362.0 L593.7 363.3 L595.0 362.5 L596.3 361.0 L597.6 364.5 L598.9 359.8 L600.2 359.2 L601.5 361.3 L602.8 362.8 L604.1 361.6 L605.4 361.8 L606.7 360.2 L608.0 360.2 L609.3 360.6 L610.6 361.7 L611.9 364.3 L613.2 363.5 L614.5 365.2 L615.8 369.8 L617.1 368.5 L618.4 372.6 L620.0 373.5 L621.0 373.1 L622.3 374.8 L623.6 375.8 L624.9 376.6 L626.2 373.9 L627.5 374.4 L628.8 375.9 L630.1 376.7 L631.4 376.4 L632.7 375.7 L634.0 378.5 L635.3 380.7 L636.6 378.6 L637.9 379.8 L639.2 379.6 L640.6 380.5 L641.8 381.0 L643.1 377.4 L644.4 377.7 L645.8 375.8 L647.1 374.8 L648.4 375.3 L649.7 370.4 L651.0 372.5 L652.3 369.0 L653.6 369.3 L654.9 368.9 L656.2 367.0 L657.5 364.6 L658.3 364.7 L660.1 363.7 L661.4 367.3 L662.7 367.2 L664.0 368.9 L665.3 371.3 L666.6 372.1 L667.8 371.8 L669.2 371.0 L670.5 370.7 L671.8 371.8 L673.1 370.9 L674.4 371.3 L675.7 374.4 L677.0 370.7 L678.3 374.0 L679.6 372.2 L680.9 372.2 L682.2 372.1 L683.5 371.2 L684.8 373.0 L685.5 372.8 L686.1 372.2 L687.4 370.0 L688.7 371.2 L690.0 369.8 L691.3 366.0 L693.0 364.5 L693.9 367.6 L695.2 366.5 L696.5 367.2 L697.8 369.6 L699.1 371.2 L700.4 375.1 L701.8 376.1 L703.0 374.5 L704.3 375.2 L705.6 371.5 L706.9 372.9 L708.2 371.0 L709.5 368.7 L710.8 369.5 L712.2 366.1 L713.5 367.4 L714.8 366.5 L716.1 363.3 L717.4 363.0 L718.1 362.0 L720.0 362.9 L721.3 363.1 L722.6 363.8 L723.9 364.3 L725.2 363.6 L726.5 364.9 L727.8 361.7 L728.5 362.9 L730.4 360.2 L731.7 356.3 L733.0 354.1 L734.3 350.5 L735.6 352.4 L737.4 346.4 L738.2 346.0 L739.5 347.6 L740.8 342.7 L742.1 346.4 L743.4 340.8 L744.8 341.4 L746.0 342.9 L747.3 344.7 L748.6 349.6 L749.9 351.1 L751.2 352.2 L752.5 352.2 L753.6 354.1 L755.1 353.9 L756.4 358.1 L757.7 356.9 L759.0 357.4 L760.3 360.3 L761.6 358.9 L762.9 360.8 L764.2 364.9 L765.5 362.0 L766.8 363.3 L768.1 364.7 L769.4 366.0 L770.7 367.9 L771.4 368.5 L772.0 367.7 L773.3 366.4 L774.6 365.6 L775.9 366.6 L777.2 364.5 L778.6 363.9 L779.9 365.0 L781.2 360.8 L782.5 360.4 L783.8 363.1 L785.1 360.2 L786.2 360.3 L787.7 360.4 L789.0 364.4 L790.3 368.0 L791.6 367.7 L792.9 371.8 L793.6 371.8 L795.5 369.6 L796.8 371.2 L798.1 367.3 L799.4 366.5 L800.7 366.0 L802.0 363.4 L803.3 364.8 L804.6 362.5 L805.9 361.3 L807.0 359.9 L808.5 363.7 L809.8 364.9 L811.1 365.3 L812.4 364.6 L813.7 365.6 L815.0 367.3 L816.3 366.3 L817.6 367.8 L818.9 373.0 L820.2 370.3 L821.5 375.1 L823.2 374.9 L824.1 375.2 L825.4 369.5 L826.7 368.5 L828.0 368.9 L829.3 363.2 L830.6 361.7 L832.1 361.2 L833.2 360.9 L834.5 362.1 L835.8 366.0 L837.1 364.5 L838.4 369.9 L839.7 369.7 L841.0 368.3 L842.3 373.4 L843.6 371.8 L845.0 374.2 L846.3 375.8 L847.6 375.3 L848.9 378.2 L850.2 377.6 L851.5 379.5 L852.8 382.5 L854.1 382.4 L855.4 380.1 L856.7 379.8 L858.0 379.6 L859.3 375.4 L860.2 376.2 L861.9 375.7 L863.2 376.5 L864.5 377.3 L865.8 378.6 L867.1 378.8 L868.4 380.3 L869.7 381.8 L871.0 383.6 L872.3 385.4 L873.6 386.4 L874.9 386.4 L876.2 386.5 L877.5 388.9 L878.8 386.8 L880.1 387.5 L881.0 389.8 L882.7 391.5 L884.0 391.2 L885.3 392.9 L886.6 393.8 L887.9 395.5 L889.2 396.6 L890.5 397.7 L891.8 400.2 L893.1 401.4 L894.4 401.8 L895.8 402.8 L897.0 402.4 L898.3 404.2 L899.6 405.1 L900.9 403.1 L902.2 404.8 L903.5 405.1 L904.8 405.2 L906.1 403.6 L907.4 405.5 L908.7 404.7 L910.1 405.0 L911.4 406.4 L912.7 406.9 L914.0 407.1 L915.3 407.7 L916.5 407.4 L917.9 407.1 L919.2 405.8 L920.5 407.8 L921.8 407.8 L923.1 407.8 L924.4 407.0 L925.7 405.2 L927.0 405.6 L928.3 405.2 L929.6 406.7 L930.9 406.3 L932.2 405.1 L933.5 407.3 L934.8 407.3 L935.8 406.1 L937.4 407.3 L938.7 408.1 L940.2 410.0 L941.3 414.4 L942.6 417.6 L942.6 460.4 L151.0 460.4 Z" fill="#3c3f2f"/><g stroke="rgba(255,255,255,0.17)" stroke-width="1.4"><line x1="152.5" y1="154.3" x2="942.6" y2="154.3"/><line x1="152.5" y1="214.8" x2="942.6" y2="214.8"/><line x1="152.5" y1="276.1" x2="942.6" y2="276.1"/><line x1="152.5" y1="337.6" x2="942.6" y2="337.6"/><line x1="152.5" y1="398.8" x2="942.6" y2="398.8"/><line x1="152.5" y1="460.3" x2="942.6" y2="460.3"/><line x1="191.5" y1="154.3" x2="191.5" y2="460.3"/><line x1="311.3" y1="154.3" x2="311.3" y2="460.3"/><line x1="430.3" y1="154.3" x2="430.3" y2="460.3"/><line x1="549.0" y1="154.3" x2="549.0" y2="460.3"/><line x1="667.0" y1="154.3" x2="667.0" y2="460.3"/><line x1="785.0" y1="154.3" x2="785.0" y2="460.3"/><line x1="903.0" y1="154.3" x2="903.0" y2="460.3"/></g><path d="M151.0 450.0 L152.3 450.8 L153.6 450.3 L154.9 450.7 L156.2 451.8 L158.0 452.1 L158.8 452.2 L160.1 451.9 L161.4 452.2 L162.7 452.2 L164.0 452.2 L165.3 451.8 L166.6 452.1 L167.9 452.1 L169.2 452.4 L170.5 452.7 L171.8 452.7 L173.1 452.3 L174.4 452.2 L175.7 452.1 L177.0 451.9 L178.3 451.9 L179.6 452.3 L180.9 452.2 L182.2 452.3 L183.5 452.8 L184.9 452.5 L186.2 452.6 L187.5 452.3 L188.8 452.1 L190.1 452.4 L191.4 452.2 L192.7 452.6 L194.0 453.1 L195.3 452.8 L196.6 452.4 L197.9 453.1 L199.2 453.0 L200.5 453.0 L201.8 453.2 L203.1 453.0 L204.4 453.1 L205.7 452.7 L207.0 453.3 L208.3 453.3 L209.6 452.6 L210.9 453.2 L212.2 453.2 L213.5 452.9 L214.8 453.0 L216.1 453.0 L217.4 453.4 L218.7 453.1 L220.0 453.4 L221.3 453.0 L222.6 453.5 L223.9 453.5 L225.2 453.1 L226.5 453.3 L227.8 453.6 L229.1 453.5 L230.4 453.3 L231.7 453.2 L233.0 453.2 L234.3 453.5 L235.6 453.0 L236.9 453.7 L238.2 453.2 L239.5 453.8 L240.8 453.2 L242.1 453.8 L243.4 453.6 L244.7 453.5 L246.0 453.5 L247.3 453.6 L248.6 453.6 L249.9 453.3 L251.3 453.3 L252.6 453.6 L253.9 454.0 L255.2 453.7 L256.5 453.2 L257.8 453.9 L259.1 453.8 L260.4 454.0 L261.7 453.4 L263.0 453.9 L264.3 453.3 L265.0 453.7 L266.9 453.4 L268.2 453.3 L269.5 453.9 L270.8 453.1 L272.1 453.4 L273.4 453.7 L274.7 453.1 L276.0 453.0 L277.3 453.5 L278.6 453.1 L279.9 453.3 L281.2 452.6 L282.5 452.9 L283.8 452.6 L285.1 453.0 L286.4 452.4 L287.7 453.2 L289.0 452.3 L290.3 452.9 L291.6 452.2 L292.9 452.3 L294.2 452.8 L295.5 452.1 L296.8 452.1 L298.1 452.5 L299.4 452.2 L300.7 451.8 L302.0 452.7 L303.3 451.8 L304.6 451.6 L305.9 451.9 L306.7 452.0 L308.5 452.3 L309.8 451.7 L311.1 451.9 L312.4 451.6 L313.7 452.0 L315.0 452.3 L316.4 452.3 L317.7 452.5 L319.0 452.4 L320.3 452.5 L321.6 452.3 L322.9 452.1 L324.2 451.9 L325.5 452.3 L326.8 452.0 L328.1 451.8 L329.4 452.2 L330.7 452.6 L332.0 451.9 L333.3 452.3 L334.6 452.2 L335.9 452.3 L337.2 452.0 L338.5 452.8 L339.8 452.1 L341.1 452.4 L342.4 452.3 L343.7 451.9 L345.0 452.4 L346.3 452.1 L347.6 452.0 L348.9 452.0 L350.2 452.1 L351.5 452.1 L352.8 452.6 L354.1 452.5 L355.4 452.9 L356.7 452.6 L358.0 452.8 L359.3 451.9 L360.6 452.0 L361.9 451.6 L363.2 451.8 L364.5 451.6 L365.8 451.6 L367.1 451.4 L368.4 450.8 L369.7 450.8 L371.0 450.7 L372.3 450.0 L373.6 449.9 L374.9 450.1 L376.2 449.6 L377.5 450.1 L378.8 449.4 L380.1 449.1 L381.4 449.0 L382.8 448.9 L384.1 448.7 L385.4 448.9 L386.7 448.7 L388.0 448.3 L389.3 448.6 L390.0 448.2 L391.9 448.2 L393.2 447.8 L394.5 447.1 L395.8 446.3 L397.1 446.0 L398.4 445.6 L399.7 444.5 L401.0 444.5 L402.3 444.3 L403.6 443.4 L404.9 442.8 L406.2 443.3 L407.5 442.3 L408.8 442.1 L410.1 442.2 L411.4 441.4 L412.7 440.5 L414.0 441.0 L415.0 440.0 L416.6 438.2 L417.9 438.4 L419.2 436.6 L420.5 436.1 L421.8 436.2 L423.1 435.1 L424.4 433.1 L425.7 433.0 L427.0 432.1 L428.3 431.4 L429.6 430.0 L430.9 429.9 L431.7 429.0 L433.5 427.3 L434.8 426.5 L436.1 426.6 L437.4 423.8 L438.7 424.2 L440.0 422.0 L441.3 421.8 L442.6 420.4 L443.9 419.5 L445.2 419.2 L446.5 417.3 L447.9 415.6 L449.2 414.5 L450.5 413.4 L451.8 414.4 L453.1 412.8 L454.0 412.0 L455.7 411.1 L457.0 408.4 L458.3 409.3 L459.6 408.8 L460.9 407.8 L462.2 406.3 L463.5 405.0 L464.8 404.4 L466.1 404.6 L467.4 402.1 L468.7 402.1 L470.0 401.0 L471.3 401.7 L472.6 400.4 L473.9 400.0 L475.2 398.8 L476.5 396.1 L477.8 395.0 L479.1 395.0 L480.7 393.8 L481.7 393.4 L483.0 393.9 L484.3 394.4 L485.6 392.8 L486.9 393.3 L488.2 390.3 L489.5 390.8 L490.8 392.7 L492.1 389.2 L493.4 389.8 L494.7 388.1 L496.0 387.8 L497.3 390.4 L498.6 390.4 L499.9 388.7 L501.2 386.3 L502.5 386.6 L503.8 385.9 L505.1 387.2 L506.4 386.9 L507.7 385.5 L509.0 385.5 L510.3 384.6 L511.6 384.1 L512.9 384.7 L514.3 382.9 L515.6 379.1 L516.9 379.8 L518.2 379.6 L519.5 376.6 L520.8 378.3 L522.1 375.4 L523.4 375.4 L525.0 373.1 L526.0 375.2 L527.3 374.0 L528.6 372.8 L529.9 370.6 L531.2 371.7 L532.5 369.6 L533.8 371.9 L535.1 372.9 L536.4 369.5 L537.7 370.7 L539.0 370.3 L540.0 370.1 L541.6 373.4 L542.9 376.2 L544.2 377.1 L545.5 377.9 L547.3 381.1 L548.1 378.9 L549.4 378.9 L550.7 376.9 L552.0 375.7 L553.3 374.5 L554.6 370.0 L555.9 370.1 L557.7 367.2 L558.5 368.0 L559.8 369.3 L561.1 367.6 L562.4 364.5 L563.7 366.5 L565.0 367.6 L566.3 368.2 L567.6 367.0 L568.9 367.7 L570.2 363.7 L571.5 368.0 L572.8 366.9 L574.1 366.1 L575.4 367.4 L576.7 367.2 L578.0 363.3 L579.3 366.6 L580.7 366.3 L582.0 363.4 L583.3 365.9 L584.6 365.0 L585.9 363.0 L587.3 364.7 L588.5 362.3 L589.8 364.3 L591.1 363.2 L592.4 362.0 L593.7 363.3 L595.0 362.5 L596.3 361.0 L597.6 364.5 L598.9 359.8 L600.2 359.2 L601.5 361.3 L602.8 362.8 L604.1 361.6 L605.4 361.8 L606.7 360.2 L608.0 360.2 L609.3 360.6 L610.6 361.7 L611.9 364.3 L613.2 363.5 L614.5 365.2 L615.8 369.8 L617.1 368.5 L618.4 372.6 L620.0 373.5 L621.0 373.1 L622.3 374.8 L623.6 375.8 L624.9 376.6 L626.2 373.9 L627.5 374.4 L628.8 375.9 L630.1 376.7 L631.4 376.4 L632.7 375.7 L634.0 378.5 L635.3 380.7 L636.6 378.6 L637.9 379.8 L639.2 379.6 L640.6 380.5 L641.8 381.0 L643.1 377.4 L644.4 377.7 L645.8 375.8 L647.1 374.8 L648.4 375.3 L649.7 370.4 L651.0 372.5 L652.3 369.0 L653.6 369.3 L654.9 368.9 L656.2 367.0 L657.5 364.6 L658.3 364.7 L660.1 363.7 L661.4 367.3 L662.7 367.2 L664.0 368.9 L665.3 371.3 L666.6 372.1 L667.8 371.8 L669.2 371.0 L670.5 370.7 L671.8 371.8 L673.1 370.9 L674.4 371.3 L675.7 374.4 L677.0 370.7 L678.3 374.0 L679.6 372.2 L680.9 372.2 L682.2 372.1 L683.5 371.2 L684.8 373.0 L685.5 372.8 L686.1 372.2 L687.4 370.0 L688.7 371.2 L690.0 369.8 L691.3 366.0 L693.0 364.5 L693.9 367.6 L695.2 366.5 L696.5 367.2 L697.8 369.6 L699.1 371.2 L700.4 375.1 L701.8 376.1 L703.0 374.5 L704.3 375.2 L705.6 371.5 L706.9 372.9 L708.2 371.0 L709.5 368.7 L710.8 369.5 L712.2 366.1 L713.5 367.4 L714.8 366.5 L716.1 363.3 L717.4 363.0 L718.1 362.0 L720.0 362.9 L721.3 363.1 L722.6 363.8 L723.9 364.3 L725.2 363.6 L726.5 364.9 L727.8 361.7 L728.5 362.9 L730.4 360.2 L731.7 356.3 L733.0 354.1 L734.3 350.5 L735.6 352.4 L737.4 346.4 L738.2 346.0 L739.5 347.6 L740.8 342.7 L742.1 346.4 L743.4 340.8 L744.8 341.4 L746.0 342.9 L747.3 344.7 L748.6 349.6 L749.9 351.1 L751.2 352.2 L752.5 352.2 L753.6 354.1 L755.1 353.9 L756.4 358.1 L757.7 356.9 L759.0 357.4 L760.3 360.3 L761.6 358.9 L762.9 360.8 L764.2 364.9 L765.5 362.0 L766.8 363.3 L768.1 364.7 L769.4 366.0 L770.7 367.9 L771.4 368.5 L772.0 367.7 L773.3 366.4 L774.6 365.6 L775.9 366.6 L777.2 364.5 L778.6 363.9 L779.9 365.0 L781.2 360.8 L782.5 360.4 L783.8 363.1 L785.1 360.2 L786.2 360.3 L787.7 360.4 L789.0 364.4 L790.3 368.0 L791.6 367.7 L792.9 371.8 L793.6 371.8 L795.5 369.6 L796.8 371.2 L798.1 367.3 L799.4 366.5 L800.7 366.0 L802.0 363.4 L803.3 364.8 L804.6 362.5 L805.9 361.3 L807.0 359.9 L808.5 363.7 L809.8 364.9 L811.1 365.3 L812.4 364.6 L813.7 365.6 L815.0 367.3 L816.3 366.3 L817.6 367.8 L818.9 373.0 L820.2 370.3 L821.5 375.1 L823.2 374.9 L824.1 375.2 L825.4 369.5 L826.7 368.5 L828.0 368.9 L829.3 363.2 L830.6 361.7 L832.1 361.2 L833.2 360.9 L834.5 362.1 L835.8 366.0 L837.1 364.5 L838.4 369.9 L839.7 369.7 L841.0 368.3 L842.3 373.4 L843.6 371.8 L845.0 374.2 L846.3 375.8 L847.6 375.3 L848.9 378.2 L850.2 377.6 L851.5 379.5 L852.8 382.5 L854.1 382.4 L855.4 380.1 L856.7 379.8 L858.0 379.6 L859.3 375.4 L860.2 376.2 L861.9 375.7 L863.2 376.5 L864.5 377.3 L865.8 378.6 L867.1 378.8 L868.4 380.3 L869.7 381.8 L871.0 383.6 L872.3 385.4 L873.6 386.4 L874.9 386.4 L876.2 386.5 L877.5 388.9 L878.8 386.8 L880.1 387.5 L881.0 389.8 L882.7 391.5 L884.0 391.2 L885.3 392.9 L886.6 393.8 L887.9 395.5 L889.2 396.6 L890.5 397.7 L891.8 400.2 L893.1 401.4 L894.4 401.8 L895.8 402.8 L897.0 402.4 L898.3 404.2 L899.6 405.1 L900.9 403.1 L902.2 404.8 L903.5 405.1 L904.8 405.2 L906.1 403.6 L907.4 405.5 L908.7 404.7 L910.1 405.0 L911.4 406.4 L912.7 406.9 L914.0 407.1 L915.3 407.7 L916.5 407.4 L917.9 407.1 L919.2 405.8 L920.5 407.8 L921.8 407.8 L923.1 407.8 L924.4 407.0 L925.7 405.2 L927.0 405.6 L928.3 405.2 L929.6 406.7 L930.9 406.3 L932.2 405.1 L933.5 407.3 L934.8 407.3 L935.8 406.1 L937.4 407.3 L938.7 408.1 L940.2 410.0 L941.3 414.4 L942.6 417.6" class="gl"/><path d="M151.0 450.0 L152.3 450.8 L153.6 450.3 L154.9 450.7 L156.2 451.8 L158.0 452.1 L158.8 452.2 L160.1 451.9 L161.4 452.2 L162.7 452.2 L164.0 452.2 L165.3 451.8 L166.6 452.1 L167.9 452.1 L169.2 452.4 L170.5 452.7 L171.8 452.7 L173.1 452.3 L174.4 452.2 L175.7 452.1 L177.0 451.9 L178.3 451.9 L179.6 452.3 L180.9 452.2 L182.2 452.3 L183.5 452.8 L184.9 452.5 L186.2 452.6 L187.5 452.3 L188.8 452.1 L190.1 452.4 L191.4 452.2 L192.7 452.6 L194.0 453.1 L195.3 452.8 L196.6 452.4 L197.9 453.1 L199.2 453.0 L200.5 453.0 L201.8 453.2 L203.1 453.0 L204.4 453.1 L205.7 452.7 L207.0 453.3 L208.3 453.3 L209.6 452.6 L210.9 453.2 L212.2 453.2 L213.5 452.9 L214.8 453.0 L216.1 453.0 L217.4 453.4 L218.7 453.1 L220.0 453.4 L221.3 453.0 L222.6 453.5 L223.9 453.5 L225.2 453.1 L226.5 453.3 L227.8 453.6 L229.1 453.5 L230.4 453.3 L231.7 453.2 L233.0 453.2 L234.3 453.5 L235.6 453.0 L236.9 453.7 L238.2 453.2 L239.5 453.8 L240.8 453.2 L242.1 453.8 L243.4 453.6 L244.7 453.5 L246.0 453.5 L247.3 453.6 L248.6 453.6 L249.9 453.3 L251.3 453.3 L252.6 453.6 L253.9 454.0 L255.2 453.7 L256.5 453.2 L257.8 453.9 L259.1 453.8 L260.4 454.0 L261.7 453.4 L263.0 453.9 L264.3 453.3 L265.0 453.7 L266.9 453.4 L268.2 453.3 L269.5 453.9 L270.8 453.1 L272.1 453.4 L273.4 453.7 L274.7 453.1 L276.0 453.0 L277.3 453.5 L278.6 453.1 L279.9 453.3 L281.2 452.6 L282.5 452.9 L283.8 452.6 L285.1 453.0 L286.4 452.4 L287.7 453.2 L289.0 452.3 L290.3 452.9 L291.6 452.2 L292.9 452.3 L294.2 452.8 L295.5 452.1 L296.8 452.1 L298.1 452.5 L299.4 452.2 L300.7 451.8 L302.0 452.7 L303.3 451.8 L304.6 451.6 L305.9 451.9 L306.7 452.0 L308.5 452.3 L309.8 451.7 L311.1 451.9 L312.4 451.6 L313.7 452.0 L315.0 452.3 L316.4 452.3 L317.7 452.5 L319.0 452.4 L320.3 452.5 L321.6 452.3 L322.9 452.1 L324.2 451.9 L325.5 452.3 L326.8 452.0 L328.1 451.8 L329.4 452.2 L330.7 452.6 L332.0 451.9 L333.3 452.3 L334.6 452.2 L335.9 452.3 L337.2 452.0 L338.5 452.8 L339.8 452.1 L341.1 452.4 L342.4 452.3 L343.7 451.9 L345.0 452.4 L346.3 452.1 L347.6 452.0 L348.9 452.0 L350.2 452.1 L351.5 452.1 L352.8 452.6 L354.1 452.5 L355.4 452.9 L356.7 452.6 L358.0 452.8 L359.3 451.9 L360.6 452.0 L361.9 451.6 L363.2 451.8 L364.5 451.6 L365.8 451.6 L367.1 451.4 L368.4 450.8 L369.7 450.8 L371.0 450.7 L372.3 450.0 L373.6 449.9 L374.9 450.1 L376.2 449.6 L377.5 450.1 L378.8 449.4 L380.1 449.1 L381.4 449.0 L382.8 448.9 L384.1 448.7 L385.4 448.9 L386.7 448.7 L388.0 448.3 L389.3 448.6 L390.0 448.2 L391.9 448.2 L393.2 447.8 L394.5 447.1 L395.8 446.3 L397.1 446.0 L398.4 445.6 L399.7 444.5 L401.0 444.5 L402.3 444.3 L403.6 443.4 L404.9 442.8 L406.2 443.3 L407.5 442.3 L408.8 442.1 L410.1 442.2 L411.4 441.4 L412.7 440.5 L414.0 441.0 L415.0 440.0 L416.6 438.2 L417.9 438.4 L419.2 436.6 L420.5 436.1 L421.8 436.2 L423.1 435.1 L424.4 433.1 L425.7 433.0 L427.0 432.1 L428.3 431.4 L429.6 430.0 L430.9 429.9 L431.7 429.0 L433.5 427.3 L434.8 426.5 L436.1 426.6 L437.4 423.8 L438.7 424.2 L440.0 422.0 L441.3 421.8 L442.6 420.4 L443.9 419.5 L445.2 419.2 L446.5 417.3 L447.9 415.6 L449.2 414.5 L450.5 413.4 L451.8 414.4 L453.1 412.8 L454.0 412.0 L455.7 411.1 L457.0 408.4 L458.3 409.3 L459.6 408.8 L460.9 407.8 L462.2 406.3 L463.5 405.0 L464.8 404.4 L466.1 404.6 L467.4 402.1 L468.7 402.1 L470.0 401.0 L471.3 401.7 L472.6 400.4 L473.9 400.0 L475.2 398.8 L476.5 396.1 L477.8 395.0 L479.1 395.0 L480.7 393.8 L481.7 393.4 L483.0 393.9 L484.3 394.4 L485.6 392.8 L486.9 393.3 L488.2 390.3 L489.5 390.8 L490.8 392.7 L492.1 389.2 L493.4 389.8 L494.7 388.1 L496.0 387.8 L497.3 390.4 L498.6 390.4 L499.9 388.7 L501.2 386.3 L502.5 386.6 L503.8 385.9 L505.1 387.2 L506.4 386.9 L507.7 385.5 L509.0 385.5 L510.3 384.6 L511.6 384.1 L512.9 384.7 L514.3 382.9 L515.6 379.1 L516.9 379.8 L518.2 379.6 L519.5 376.6 L520.8 378.3 L522.1 375.4 L523.4 375.4 L525.0 373.1 L526.0 375.2 L527.3 374.0 L528.6 372.8 L529.9 370.6 L531.2 371.7 L532.5 369.6 L533.8 371.9 L535.1 372.9 L536.4 369.5 L537.7 370.7 L539.0 370.3 L540.0 370.1 L541.6 373.4 L542.9 376.2 L544.2 377.1 L545.5 377.9 L547.3 381.1 L548.1 378.9 L549.4 378.9 L550.7 376.9 L552.0 375.7 L553.3 374.5 L554.6 370.0 L555.9 370.1 L557.7 367.2 L558.5 368.0 L559.8 369.3 L561.1 367.6 L562.4 364.5 L563.7 366.5 L565.0 367.6 L566.3 368.2 L567.6 367.0 L568.9 367.7 L570.2 363.7 L571.5 368.0 L572.8 366.9 L574.1 366.1 L575.4 367.4 L576.7 367.2 L578.0 363.3 L579.3 366.6 L580.7 366.3 L582.0 363.4 L583.3 365.9 L584.6 365.0 L585.9 363.0 L587.3 364.7 L588.5 362.3 L589.8 364.3 L591.1 363.2 L592.4 362.0 L593.7 363.3 L595.0 362.5 L596.3 361.0 L597.6 364.5 L598.9 359.8 L600.2 359.2 L601.5 361.3 L602.8 362.8 L604.1 361.6 L605.4 361.8 L606.7 360.2 L608.0 360.2 L609.3 360.6 L610.6 361.7 L611.9 364.3 L613.2 363.5 L614.5 365.2 L615.8 369.8 L617.1 368.5 L618.4 372.6 L620.0 373.5 L621.0 373.1 L622.3 374.8 L623.6 375.8 L624.9 376.6 L626.2 373.9 L627.5 374.4 L628.8 375.9 L630.1 376.7 L631.4 376.4 L632.7 375.7 L634.0 378.5 L635.3 380.7 L636.6 378.6 L637.9 379.8 L639.2 379.6 L640.6 380.5 L641.8 381.0 L643.1 377.4 L644.4 377.7 L645.8 375.8 L647.1 374.8 L648.4 375.3 L649.7 370.4 L651.0 372.5 L652.3 369.0 L653.6 369.3 L654.9 368.9 L656.2 367.0 L657.5 364.6 L658.3 364.7 L660.1 363.7 L661.4 367.3 L662.7 367.2 L664.0 368.9 L665.3 371.3 L666.6 372.1 L667.8 371.8 L669.2 371.0 L670.5 370.7 L671.8 371.8 L673.1 370.9 L674.4 371.3 L675.7 374.4 L677.0 370.7 L678.3 374.0 L679.6 372.2 L680.9 372.2 L682.2 372.1 L683.5 371.2 L684.8 373.0 L685.5 372.8 L686.1 372.2 L687.4 370.0 L688.7 371.2 L690.0 369.8 L691.3 366.0 L693.0 364.5 L693.9 367.6 L695.2 366.5 L696.5 367.2 L697.8 369.6 L699.1 371.2 L700.4 375.1 L701.8 376.1 L703.0 374.5 L704.3 375.2 L705.6 371.5 L706.9 372.9 L708.2 371.0 L709.5 368.7 L710.8 369.5 L712.2 366.1 L713.5 367.4 L714.8 366.5 L716.1 363.3 L717.4 363.0 L718.1 362.0 L720.0 362.9 L721.3 363.1 L722.6 363.8 L723.9 364.3 L725.2 363.6 L726.5 364.9 L727.8 361.7 L728.5 362.9 L730.4 360.2 L731.7 356.3 L733.0 354.1 L734.3 350.5 L735.6 352.4 L737.4 346.4 L738.2 346.0 L739.5 347.6 L740.8 342.7 L742.1 346.4 L743.4 340.8 L744.8 341.4 L746.0 342.9 L747.3 344.7 L748.6 349.6 L749.9 351.1 L751.2 352.2 L752.5 352.2 L753.6 354.1 L755.1 353.9 L756.4 358.1 L757.7 356.9 L759.0 357.4 L760.3 360.3 L761.6 358.9 L762.9 360.8 L764.2 364.9 L765.5 362.0 L766.8 363.3 L768.1 364.7 L769.4 366.0 L770.7 367.9 L771.4 368.5 L772.0 367.7 L773.3 366.4 L774.6 365.6 L775.9 366.6 L777.2 364.5 L778.6 363.9 L779.9 365.0 L781.2 360.8 L782.5 360.4 L783.8 363.1 L785.1 360.2 L786.2 360.3 L787.7 360.4 L789.0 364.4 L790.3 368.0 L791.6 367.7 L792.9 371.8 L793.6 371.8 L795.5 369.6 L796.8 371.2 L798.1 367.3 L799.4 366.5 L800.7 366.0 L802.0 363.4 L803.3 364.8 L804.6 362.5 L805.9 361.3 L807.0 359.9 L808.5 363.7 L809.8 364.9 L811.1 365.3 L812.4 364.6 L813.7 365.6 L815.0 367.3 L816.3 366.3 L817.6 367.8 L818.9 373.0 L820.2 370.3 L821.5 375.1 L823.2 374.9 L824.1 375.2 L825.4 369.5 L826.7 368.5 L828.0 368.9 L829.3 363.2 L830.6 361.7 L832.1 361.2 L833.2 360.9 L834.5 362.1 L835.8 366.0 L837.1 364.5 L838.4 369.9 L839.7 369.7 L841.0 368.3 L842.3 373.4 L843.6 371.8 L845.0 374.2 L846.3 375.8 L847.6 375.3 L848.9 378.2 L850.2 377.6 L851.5 379.5 L852.8 382.5 L854.1 382.4 L855.4 380.1 L856.7 379.8 L858.0 379.6 L859.3 375.4 L860.2 376.2 L861.9 375.7 L863.2 376.5 L864.5 377.3 L865.8 378.6 L867.1 378.8 L868.4 380.3 L869.7 381.8 L871.0 383.6 L872.3 385.4 L873.6 386.4 L874.9 386.4 L876.2 386.5 L877.5 388.9 L878.8 386.8 L880.1 387.5 L881.0 389.8 L882.7 391.5 L884.0 391.2 L885.3 392.9 L886.6 393.8 L887.9 395.5 L889.2 396.6 L890.5 397.7 L891.8 400.2 L893.1 401.4 L894.4 401.8 L895.8 402.8 L897.0 402.4 L898.3 404.2 L899.6 405.1 L900.9 403.1 L902.2 404.8 L903.5 405.1 L904.8 405.2 L906.1 403.6 L907.4 405.5 L908.7 404.7 L910.1 405.0 L911.4 406.4 L912.7 406.9 L914.0 407.1 L915.3 407.7 L916.5 407.4 L917.9 407.1 L919.2 405.8 L920.5 407.8 L921.8 407.8 L923.1 407.8 L924.4 407.0 L925.7 405.2 L927.0 405.6 L928.3 405.2 L929.6 406.7 L930.9 406.3 L932.2 405.1 L933.5 407.3 L934.8 407.3 L935.8 406.1 L937.4 407.3 L938.7 408.1 L940.2 410.0 L941.3 414.4 L942.6 417.6" class="gl2"/><path d="M151.0 443.7 L152.1 444.4 L153.2 444.4 L154.3 443.6 L155.4 444.1 L156.5 444.1 L157.6 444.6 L158.7 444.9 L159.8 443.8 L160.9 443.8 L162.0 445.3 L163.1 444.7 L164.2 445.4 L165.3 444.2 L166.4 445.1 L167.5 445.6 L168.6 444.9 L169.7 446.2 L170.8 446.2 L171.9 444.9 L173.3 445.6 L174.1 445.8 L175.2 446.4 L176.3 445.4 L177.4 445.1 L178.5 445.3 L179.6 444.6 L180.7 444.8 L181.8 445.1 L182.9 445.2 L184.0 444.6 L185.1 444.6 L186.2 444.5 L187.3 444.8 L188.4 444.4 L190.0 444.5 L190.6 445.3 L191.7 444.9 L192.8 445.1 L193.9 444.4 L195.0 445.9 L196.1 445.7 L197.2 444.6 L198.3 445.0 L199.4 445.7 L200.5 445.8 L201.6 446.2 L202.7 445.4 L203.8 446.2 L204.9 446.0 L206.0 445.5 L207.1 446.0 L208.3 446.5 L209.4 446.6 L210.5 446.1 L211.6 446.3 L212.7 445.5 L213.8 445.9 L214.9 446.8 L216.0 446.3 L217.1 446.0 L218.2 446.7 L219.3 447.0 L220.4 447.0 L221.5 446.6 L222.6 446.8 L223.7 447.0 L224.8 447.5 L225.9 447.1 L227.0 447.0 L228.1 447.2 L229.2 446.6 L230.3 446.7 L231.7 447.6 L232.5 448.2 L233.6 447.6 L234.7 447.3 L235.8 447.0 L236.9 447.5 L238.0 448.2 L239.1 447.9 L240.2 447.6 L241.3 448.0 L242.4 447.1 L243.5 447.5 L244.6 448.2 L245.7 447.6 L246.8 447.4 L247.9 447.1 L249.0 447.6 L250.1 448.2 L251.2 446.7 L252.3 447.9 L253.4 448.0 L254.5 448.1 L255.6 447.9 L256.7 448.0 L257.8 447.5 L258.9 447.6 L260.0 447.4 L261.1 446.8 L262.2 448.1 L263.3 447.6 L264.4 447.0 L265.0 447.5 L265.5 447.4 L266.6 447.1 L267.7 447.0 L268.8 447.2 L269.9 447.3 L271.0 447.2 L272.1 446.8 L273.2 446.1 L274.3 446.3 L275.4 446.1 L276.5 446.6 L277.6 447.0 L278.7 446.8 L279.8 446.7 L280.9 446.6 L282.0 445.6 L283.1 446.5 L284.2 446.1 L285.3 445.1 L286.4 444.9 L287.5 444.8 L288.6 445.9 L289.7 445.0 L290.8 444.6 L291.9 445.4 L293.0 444.8 L294.1 444.3 L295.2 444.3 L296.3 444.8 L297.4 444.1 L298.5 444.2 L299.6 444.9 L300.7 444.3 L301.8 444.0 L303.3 444.2 L304.0 443.4 L305.1 444.1 L306.2 444.3 L307.3 443.9 L308.4 443.9 L309.5 445.3 L310.6 444.7 L311.7 444.3 L312.8 445.0 L313.9 445.5 L315.0 444.2 L316.1 444.3 L317.2 444.6 L318.3 445.6 L319.4 444.7 L320.5 445.7 L321.7 445.7 L322.8 445.6 L323.9 445.1 L325.0 446.5 L326.1 446.2 L327.2 445.9 L328.3 445.4 L329.4 446.2 L330.5 445.9 L331.6 446.2 L332.7 445.9 L333.8 446.5 L334.9 445.6 L336.0 446.1 L337.1 447.2 L338.2 447.2 L339.3 446.3 L340.0 446.8 L341.5 446.3 L342.6 447.1 L343.7 446.7 L344.8 446.1 L345.9 445.7 L347.0 445.2 L348.1 446.5 L349.2 445.0 L350.3 446.2 L351.4 446.3 L352.5 445.6 L353.6 444.8 L354.7 445.8 L355.8 445.9 L356.9 445.4 L358.0 444.9 L359.1 444.6 L360.2 444.4 L361.3 444.1 L362.4 444.8 L363.5 444.2 L365.0 444.1 L365.7 443.4 L366.8 444.2 L367.9 443.4 L369.0 443.7 L370.1 443.2 L371.2 444.0 L372.3 443.9 L373.4 442.2 L374.5 442.4 L375.6 442.4 L376.7 443.5 L377.8 443.0 L378.9 442.0 L380.0 441.6 L381.1 442.3 L382.2 442.5 L383.3 442.5 L384.4 441.3 L385.5 442.1 L386.6 441.6 L387.7 441.1 L388.8 441.9 L390.0 440.7 L391.0 440.8 L392.1 439.0 L393.2 438.7 L394.3 439.8 L395.4 437.8 L396.5 438.5 L397.6 437.7 L398.7 437.7 L399.8 436.2 L400.9 435.7 L402.0 435.1 L403.3 435.2 L404.2 434.6 L405.3 434.7 L406.4 433.7 L407.5 431.1 L408.6 431.4 L409.7 429.4 L410.8 428.4 L411.9 427.7 L413.0 429.1 L414.1 428.1 L415.0 426.9 L416.3 424.6 L417.4 424.1 L418.5 423.3 L419.6 420.7 L420.7 420.0 L421.8 417.5 L423.3 416.3 L424.0 415.3 L425.1 416.8 L426.2 414.8 L427.3 415.4 L428.4 412.9 L429.5 411.4 L430.3 412.0 L431.7 411.1 L432.8 406.4 L434.0 407.6 L435.1 403.7 L436.2 402.3 L437.3 404.2 L438.4 399.0 L439.5 398.4 L440.6 400.4 L441.7 396.3 L442.8 393.4 L443.7 393.6 L445.0 390.1 L446.1 390.5 L447.2 384.9 L448.3 387.1 L449.4 381.9 L450.5 383.1 L451.6 380.6 L452.7 374.6 L454.0 372.8 L454.9 371.8 L456.0 367.9 L457.1 369.9 L458.2 364.3 L459.3 362.5 L460.4 367.6 L461.5 361.3 L462.6 361.9 L463.7 359.3 L464.8 356.8 L465.9 353.4 L467.0 358.1 L468.1 357.0 L468.8 353.4 L470.3 347.3 L471.4 346.4 L472.5 347.9 L473.6 349.2 L474.7 344.0 L475.8 343.6 L476.9 341.8 L478.0 336.7 L479.1 337.5 L480.2 333.8 L480.7 334.1 L481.3 330.3 L482.4 330.7 L483.5 335.7 L484.6 329.6 L485.7 330.1 L486.8 328.7 L487.9 330.2 L489.0 323.7 L490.1 321.6 L491.2 320.5 L492.3 319.1 L493.4 322.9 L494.5 322.0 L495.5 316.5 L496.7 314.5 L497.8 315.8 L498.9 315.4 L500.0 314.8 L501.1 310.5 L502.2 307.4 L503.3 308.9 L504.4 306.3 L505.5 310.5 L506.6 304.7 L507.7 304.0 L508.8 309.1 L510.3 306.0 L511.0 310.6 L512.1 309.0 L513.2 314.2 L514.7 311.6 L515.4 310.3 L516.5 309.9 L517.6 298.8 L518.7 304.8 L519.8 292.8 L520.9 296.2 L522.0 295.2 L523.1 290.0 L524.2 280.5 L525.1 278.8 L526.4 279.1 L527.5 283.2 L528.6 274.6 L529.7 281.2 L530.8 270.9 L531.9 279.7 L533.0 267.7 L534.1 270.4 L535.2 277.0 L536.3 274.8 L537.4 275.3 L538.5 273.6 L540.0 268.8 L540.7 273.4 L541.8 271.3 L542.9 278.8 L544.0 279.9 L545.1 290.9 L546.4 293.8 L547.4 288.8 L548.5 284.6 L549.6 293.2 L550.7 289.5 L551.8 284.5 L553.2 281.5 L554.0 281.8 L555.1 271.0 L556.2 264.4 L557.7 257.1 L558.4 254.5 L559.5 251.5 L560.6 260.2 L561.7 257.2 L562.8 259.5 L563.9 252.8 L565.0 257.0 L566.1 254.2 L567.2 254.2 L568.3 256.2 L569.4 264.1 L570.5 258.5 L571.6 258.7 L572.7 261.8 L573.8 256.8 L574.9 254.0 L575.4 260.8 L576.0 260.1 L577.1 261.1 L578.2 257.1 L579.3 259.4 L580.4 259.0 L581.4 253.9 L582.6 254.1 L583.7 253.4 L584.8 249.3 L585.9 251.3 L587.0 252.8 L588.1 257.2 L589.2 256.8 L590.3 247.2 L591.4 251.9 L592.5 242.8 L593.6 242.6 L594.7 248.3 L595.8 253.0 L596.9 242.1 L598.0 250.3 L599.1 247.3 L600.2 241.7 L601.3 245.8 L602.4 246.6 L603.5 238.1 L604.6 241.5 L605.7 240.6 L606.8 237.0 L608.0 235.4 L609.0 242.9 L610.1 247.1 L611.2 244.6 L612.3 242.1 L613.4 246.5 L614.0 250.8 L614.5 254.8 L615.6 261.8 L616.7 256.7 L617.8 269.5 L618.9 274.3 L619.9 275.0 L621.1 270.7 L622.2 261.6 L622.8 264.4 L623.3 258.7 L624.4 273.7 L625.5 273.9 L626.6 274.2 L627.7 272.2 L628.8 282.8 L629.9 285.9 L631.0 278.5 L631.7 285.2 L633.2 290.2 L634.3 289.3 L635.4 291.1 L636.5 289.4 L637.6 296.2 L638.7 297.9 L639.8 292.5 L640.6 295.6 L642.0 288.5 L643.1 281.2 L644.2 278.9 L645.3 272.2 L646.5 273.8 L647.5 276.1 L648.6 262.7 L649.7 266.5 L650.8 261.5 L651.9 255.1 L653.0 255.0 L654.1 251.8 L655.2 256.3 L656.3 243.3 L657.4 243.4 L658.3 245.7 L659.6 243.4 L660.8 255.5 L661.9 258.7 L663.0 265.2 L664.1 260.3 L664.8 265.9 L666.3 268.6 L667.4 266.2 L668.5 271.4 L669.6 268.2 L670.7 274.8 L671.8 277.2 L672.9 278.5 L674.0 281.7 L675.1 277.4 L676.6 278.4 L677.3 283.0 L678.4 282.3 L679.5 280.2 L680.6 278.3 L681.7 277.5 L682.8 275.7 L683.9 284.6 L685.0 276.6 L685.5 282.2 L686.1 279.6 L687.2 280.3 L688.3 273.3 L689.4 271.6 L690.5 255.9 L691.6 256.2 L693.0 250.6 L693.8 250.7 L694.9 257.6 L696.0 259.9 L697.1 266.5 L698.2 264.0 L699.3 273.9 L700.4 278.3 L701.8 283.8 L702.6 280.3 L703.7 281.1 L704.8 275.9 L705.9 269.5 L707.0 267.6 L708.1 260.1 L709.2 256.7 L710.3 247.9 L711.4 248.7 L712.5 250.3 L713.6 251.5 L714.7 247.9 L715.8 240.3 L716.9 244.5 L718.1 233.9 L719.1 240.7 L720.2 236.1 L721.3 243.0 L722.4 248.3 L723.5 240.1 L724.6 240.0 L725.7 248.4 L727.0 248.9 L727.9 242.1 L729.0 231.1 L730.1 231.2 L731.2 226.0 L732.3 220.1 L733.4 221.8 L734.5 211.7 L735.6 208.6 L736.7 205.9 L737.4 196.6 L738.9 200.0 L740.3 205.4 L741.1 203.8 L742.2 200.0 L743.3 195.8 L744.8 187.7 L745.5 193.5 L746.6 198.3 L747.7 208.2 L748.8 210.1 L749.9 215.8 L750.7 214.4 L752.1 222.2 L753.2 221.7 L754.3 220.6 L755.4 222.2 L756.5 232.1 L757.6 237.5 L758.7 235.4 L759.6 235.7 L760.9 244.9 L762.0 242.3 L763.1 244.5 L764.2 241.0 L765.3 250.1 L766.4 255.9 L767.5 253.8 L768.6 255.4 L769.7 262.0 L770.8 255.9 L771.4 263.6 L771.9 267.9 L773.1 261.2 L774.2 254.0 L775.3 254.7 L776.4 250.2 L777.3 244.8 L778.6 239.8 L779.7 248.0 L780.8 237.3 L781.9 232.7 L783.0 242.3 L784.1 236.1 L785.2 232.1 L786.2 232.5 L787.4 242.1 L788.5 239.5 L789.6 252.2 L790.7 258.7 L791.8 265.7 L792.9 264.2 L793.6 271.4 L795.1 258.0 L796.2 255.4 L797.3 242.9 L798.0 244.0 L799.5 247.1 L800.6 238.3 L801.7 235.8 L802.8 245.9 L803.9 241.2 L805.0 242.3 L806.1 229.2 L807.0 237.0 L808.3 240.6 L809.4 238.8 L810.5 243.3 L811.6 250.8 L812.7 253.9 L813.8 248.3 L814.9 257.1 L815.8 256.6 L817.1 269.8 L818.2 267.8 L819.3 278.7 L820.4 281.3 L821.7 284.7 L822.6 277.7 L823.7 276.2 L824.8 266.6 L825.9 261.7 L827.0 264.7 L828.1 255.2 L829.2 255.9 L830.3 244.0 L831.4 246.2 L832.1 240.8 L833.6 241.4 L834.7 241.6 L835.8 248.9 L836.9 253.3 L838.0 251.0 L839.5 259.6 L840.2 256.9 L841.3 267.4 L842.4 274.5 L843.5 269.2 L844.6 270.3 L845.7 281.9 L846.8 286.5 L847.9 291.5 L849.0 290.6 L850.1 290.8 L851.2 299.7 L852.8 299.7 L853.4 301.2 L854.5 291.7 L855.6 292.2 L856.7 290.4 L857.8 286.2 L858.9 280.8 L860.2 280.6 L861.1 286.8 L862.2 284.3 L863.3 287.5 L864.4 285.1 L865.5 292.8 L866.6 290.1 L867.7 295.0 L869.1 297.3 L869.9 303.2 L871.0 294.6 L872.1 304.7 L873.2 307.3 L874.3 303.4 L875.4 306.1 L876.5 310.0 L877.6 315.4 L878.7 312.0 L879.8 318.8 L881.0 317.6 L882.0 314.6 L883.1 323.2 L884.2 315.5 L885.3 317.9 L886.5 324.0 L887.6 319.3 L888.7 323.4 L889.9 324.9 L890.9 329.3 L892.0 337.0 L893.1 341.9 L894.2 339.1 L895.3 343.8 L895.8 350.2 L896.4 345.7 L897.5 347.2 L898.6 345.6 L899.7 345.0 L900.8 344.2 L901.9 348.6 L903.0 349.1 L904.1 348.3 L904.7 347.3 L906.3 349.8 L907.4 349.1 L908.5 352.3 L909.6 356.3 L910.7 355.2 L911.8 353.6 L912.9 353.6 L914.0 361.4 L915.1 360.3 L916.5 361.1 L917.3 362.0 L918.4 361.5 L919.5 361.1 L920.6 357.6 L921.7 359.5 L922.8 359.7 L923.9 358.0 L925.0 362.7 L926.1 359.2 L927.2 360.8 L928.3 360.9 L929.4 361.0 L930.5 360.6 L931.6 360.7 L932.7 356.9 L933.8 361.9 L934.3 357.8 L934.9 362.6 L936.0 364.3 L937.1 366.5 L938.2 363.3 L938.7 366.6 L939.3 372.9 L940.4 377.4 L941.5 383.6 L942.6 391.0" class="ol" stroke-width="3"/><path d="M151.0 443.7 L152.1 444.4 L153.2 444.4 L154.3 443.6 L155.4 444.1 L156.5 444.1 L157.6 444.6 L158.7 444.9 L159.8 443.8 L160.9 443.8 L162.0 445.3 L163.1 444.7 L164.2 445.4 L165.3 444.2 L166.4 445.1 L167.5 445.6 L168.6 444.9 L169.7 446.2 L170.8 446.2 L171.9 444.9 L173.3 445.6 L174.1 445.8 L175.2 446.4 L176.3 445.4 L177.4 445.1 L178.5 445.3 L179.6 444.6 L180.7 444.8 L181.8 445.1 L182.9 445.2 L184.0 444.6 L185.1 444.6 L186.2 444.5 L187.3 444.8 L188.4 444.4 L190.0 444.5 L190.6 445.3 L191.7 444.9 L192.8 445.1 L193.9 444.4 L195.0 445.9 L196.1 445.7 L197.2 444.6 L198.3 445.0 L199.4 445.7 L200.5 445.8 L201.6 446.2 L202.7 445.4 L203.8 446.2 L204.9 446.0 L206.0 445.5 L207.1 446.0 L208.3 446.5 L209.4 446.6 L210.5 446.1 L211.6 446.3 L212.7 445.5 L213.8 445.9 L214.9 446.8 L216.0 446.3 L217.1 446.0 L218.2 446.7 L219.3 447.0 L220.4 447.0 L221.5 446.6 L222.6 446.8 L223.7 447.0 L224.8 447.5 L225.9 447.1 L227.0 447.0 L228.1 447.2 L229.2 446.6 L230.3 446.7 L231.7 447.6 L232.5 448.2 L233.6 447.6 L234.7 447.3 L235.8 447.0 L236.9 447.5 L238.0 448.2 L239.1 447.9 L240.2 447.6 L241.3 448.0 L242.4 447.1 L243.5 447.5 L244.6 448.2 L245.7 447.6 L246.8 447.4 L247.9 447.1 L249.0 447.6 L250.1 448.2 L251.2 446.7 L252.3 447.9 L253.4 448.0 L254.5 448.1 L255.6 447.9 L256.7 448.0 L257.8 447.5 L258.9 447.6 L260.0 447.4 L261.1 446.8 L262.2 448.1 L263.3 447.6 L264.4 447.0 L265.0 447.5 L265.5 447.4 L266.6 447.1 L267.7 447.0 L268.8 447.2 L269.9 447.3 L271.0 447.2 L272.1 446.8 L273.2 446.1 L274.3 446.3 L275.4 446.1 L276.5 446.6 L277.6 447.0 L278.7 446.8 L279.8 446.7 L280.9 446.6 L282.0 445.6 L283.1 446.5 L284.2 446.1 L285.3 445.1 L286.4 444.9 L287.5 444.8 L288.6 445.9 L289.7 445.0 L290.8 444.6 L291.9 445.4 L293.0 444.8 L294.1 444.3 L295.2 444.3 L296.3 444.8 L297.4 444.1 L298.5 444.2 L299.6 444.9 L300.7 444.3 L301.8 444.0 L303.3 444.2 L304.0 443.4 L305.1 444.1 L306.2 444.3 L307.3 443.9 L308.4 443.9 L309.5 445.3 L310.6 444.7 L311.7 444.3 L312.8 445.0 L313.9 445.5 L315.0 444.2 L316.1 444.3 L317.2 444.6 L318.3 445.6 L319.4 444.7 L320.5 445.7 L321.7 445.7 L322.8 445.6 L323.9 445.1 L325.0 446.5 L326.1 446.2 L327.2 445.9 L328.3 445.4 L329.4 446.2 L330.5 445.9 L331.6 446.2 L332.7 445.9 L333.8 446.5 L334.9 445.6 L336.0 446.1 L337.1 447.2 L338.2 447.2 L339.3 446.3 L340.0 446.8 L341.5 446.3 L342.6 447.1 L343.7 446.7 L344.8 446.1 L345.9 445.7 L347.0 445.2 L348.1 446.5 L349.2 445.0 L350.3 446.2 L351.4 446.3 L352.5 445.6 L353.6 444.8 L354.7 445.8 L355.8 445.9 L356.9 445.4 L358.0 444.9 L359.1 444.6 L360.2 444.4 L361.3 444.1 L362.4 444.8 L363.5 444.2 L365.0 444.1 L365.7 443.4 L366.8 444.2 L367.9 443.4 L369.0 443.7 L370.1 443.2 L371.2 444.0 L372.3 443.9 L373.4 442.2 L374.5 442.4 L375.6 442.4 L376.7 443.5 L377.8 443.0 L378.9 442.0 L380.0 441.6 L381.1 442.3 L382.2 442.5 L383.3 442.5 L384.4 441.3 L385.5 442.1 L386.6 441.6 L387.7 441.1 L388.8 441.9 L390.0 440.7 L391.0 440.8 L392.1 439.0 L393.2 438.7 L394.3 439.8 L395.4 437.8 L396.5 438.5 L397.6 437.7 L398.7 437.7 L399.8 436.2 L400.9 435.7 L402.0 435.1 L403.3 435.2 L404.2 434.6 L405.3 434.7 L406.4 433.7 L407.5 431.1 L408.6 431.4 L409.7 429.4 L410.8 428.4 L411.9 427.7 L413.0 429.1 L414.1 428.1 L415.0 426.9 L416.3 424.6 L417.4 424.1 L418.5 423.3 L419.6 420.7 L420.7 420.0 L421.8 417.5 L423.3 416.3 L424.0 415.3 L425.1 416.8 L426.2 414.8 L427.3 415.4 L428.4 412.9 L429.5 411.4 L430.3 412.0 L431.7 411.1 L432.8 406.4 L434.0 407.6 L435.1 403.7 L436.2 402.3 L437.3 404.2 L438.4 399.0 L439.5 398.4 L440.6 400.4 L441.7 396.3 L442.8 393.4 L443.7 393.6 L445.0 390.1 L446.1 390.5 L447.2 384.9 L448.3 387.1 L449.4 381.9 L450.5 383.1 L451.6 380.6 L452.7 374.6 L454.0 372.8 L454.9 371.8 L456.0 367.9 L457.1 369.9 L458.2 364.3 L459.3 362.5 L460.4 367.6 L461.5 361.3 L462.6 361.9 L463.7 359.3 L464.8 356.8 L465.9 353.4 L467.0 358.1 L468.1 357.0 L468.8 353.4 L470.3 347.3 L471.4 346.4 L472.5 347.9 L473.6 349.2 L474.7 344.0 L475.8 343.6 L476.9 341.8 L478.0 336.7 L479.1 337.5 L480.2 333.8 L480.7 334.1 L481.3 330.3 L482.4 330.7 L483.5 335.7 L484.6 329.6 L485.7 330.1 L486.8 328.7 L487.9 330.2 L489.0 323.7 L490.1 321.6 L491.2 320.5 L492.3 319.1 L493.4 322.9 L494.5 322.0 L495.5 316.5 L496.7 314.5 L497.8 315.8 L498.9 315.4 L500.0 314.8 L501.1 310.5 L502.2 307.4 L503.3 308.9 L504.4 306.3 L505.5 310.5 L506.6 304.7 L507.7 304.0 L508.8 309.1 L510.3 306.0 L511.0 310.6 L512.1 309.0 L513.2 314.2 L514.7 311.6 L515.4 310.3 L516.5 309.9 L517.6 298.8 L518.7 304.8 L519.8 292.8 L520.9 296.2 L522.0 295.2 L523.1 290.0 L524.2 280.5 L525.1 278.8 L526.4 279.1 L527.5 283.2 L528.6 274.6 L529.7 281.2 L530.8 270.9 L531.9 279.7 L533.0 267.7 L534.1 270.4 L535.2 277.0 L536.3 274.8 L537.4 275.3 L538.5 273.6 L540.0 268.8 L540.7 273.4 L541.8 271.3 L542.9 278.8 L544.0 279.9 L545.1 290.9 L546.4 293.8 L547.4 288.8 L548.5 284.6 L549.6 293.2 L550.7 289.5 L551.8 284.5 L553.2 281.5 L554.0 281.8 L555.1 271.0 L556.2 264.4 L557.7 257.1 L558.4 254.5 L559.5 251.5 L560.6 260.2 L561.7 257.2 L562.8 259.5 L563.9 252.8 L565.0 257.0 L566.1 254.2 L567.2 254.2 L568.3 256.2 L569.4 264.1 L570.5 258.5 L571.6 258.7 L572.7 261.8 L573.8 256.8 L574.9 254.0 L575.4 260.8 L576.0 260.1 L577.1 261.1 L578.2 257.1 L579.3 259.4 L580.4 259.0 L581.4 253.9 L582.6 254.1 L583.7 253.4 L584.8 249.3 L585.9 251.3 L587.0 252.8 L588.1 257.2 L589.2 256.8 L590.3 247.2 L591.4 251.9 L592.5 242.8 L593.6 242.6 L594.7 248.3 L595.8 253.0 L596.9 242.1 L598.0 250.3 L599.1 247.3 L600.2 241.7 L601.3 245.8 L602.4 246.6 L603.5 238.1 L604.6 241.5 L605.7 240.6 L606.8 237.0 L608.0 235.4 L609.0 242.9 L610.1 247.1 L611.2 244.6 L612.3 242.1 L613.4 246.5 L614.0 250.8 L614.5 254.8 L615.6 261.8 L616.7 256.7 L617.8 269.5 L618.9 274.3 L619.9 275.0 L621.1 270.7 L622.2 261.6 L622.8 264.4 L623.3 258.7 L624.4 273.7 L625.5 273.9 L626.6 274.2 L627.7 272.2 L628.8 282.8 L629.9 285.9 L631.0 278.5 L631.7 285.2 L633.2 290.2 L634.3 289.3 L635.4 291.1 L636.5 289.4 L637.6 296.2 L638.7 297.9 L639.8 292.5 L640.6 295.6 L642.0 288.5 L643.1 281.2 L644.2 278.9 L645.3 272.2 L646.5 273.8 L647.5 276.1 L648.6 262.7 L649.7 266.5 L650.8 261.5 L651.9 255.1 L653.0 255.0 L654.1 251.8 L655.2 256.3 L656.3 243.3 L657.4 243.4 L658.3 245.7 L659.6 243.4 L660.8 255.5 L661.9 258.7 L663.0 265.2 L664.1 260.3 L664.8 265.9 L666.3 268.6 L667.4 266.2 L668.5 271.4 L669.6 268.2 L670.7 274.8 L671.8 277.2 L672.9 278.5 L674.0 281.7 L675.1 277.4 L676.6 278.4 L677.3 283.0 L678.4 282.3 L679.5 280.2 L680.6 278.3 L681.7 277.5 L682.8 275.7 L683.9 284.6 L685.0 276.6 L685.5 282.2 L686.1 279.6 L687.2 280.3 L688.3 273.3 L689.4 271.6 L690.5 255.9 L691.6 256.2 L693.0 250.6 L693.8 250.7 L694.9 257.6 L696.0 259.9 L697.1 266.5 L698.2 264.0 L699.3 273.9 L700.4 278.3 L701.8 283.8 L702.6 280.3 L703.7 281.1 L704.8 275.9 L705.9 269.5 L707.0 267.6 L708.1 260.1 L709.2 256.7 L710.3 247.9 L711.4 248.7 L712.5 250.3 L713.6 251.5 L714.7 247.9 L715.8 240.3 L716.9 244.5 L718.1 233.9 L719.1 240.7 L720.2 236.1 L721.3 243.0 L722.4 248.3 L723.5 240.1 L724.6 240.0 L725.7 248.4 L727.0 248.9 L727.9 242.1 L729.0 231.1 L730.1 231.2 L731.2 226.0 L732.3 220.1 L733.4 221.8 L734.5 211.7 L735.6 208.6 L736.7 205.9 L737.4 196.6 L738.9 200.0 L740.3 205.4 L741.1 203.8 L742.2 200.0 L743.3 195.8 L744.8 187.7 L745.5 193.5 L746.6 198.3 L747.7 208.2 L748.8 210.1 L749.9 215.8 L750.7 214.4 L752.1 222.2 L753.2 221.7 L754.3 220.6 L755.4 222.2 L756.5 232.1 L757.6 237.5 L758.7 235.4 L759.6 235.7 L760.9 244.9 L762.0 242.3 L763.1 244.5 L764.2 241.0 L765.3 250.1 L766.4 255.9 L767.5 253.8 L768.6 255.4 L769.7 262.0 L770.8 255.9 L771.4 263.6 L771.9 267.9 L773.1 261.2 L774.2 254.0 L775.3 254.7 L776.4 250.2 L777.3 244.8 L778.6 239.8 L779.7 248.0 L780.8 237.3 L781.9 232.7 L783.0 242.3 L784.1 236.1 L785.2 232.1 L786.2 232.5 L787.4 242.1 L788.5 239.5 L789.6 252.2 L790.7 258.7 L791.8 265.7 L792.9 264.2 L793.6 271.4 L795.1 258.0 L796.2 255.4 L797.3 242.9 L798.0 244.0 L799.5 247.1 L800.6 238.3 L801.7 235.8 L802.8 245.9 L803.9 241.2 L805.0 242.3 L806.1 229.2 L807.0 237.0 L808.3 240.6 L809.4 238.8 L810.5 243.3 L811.6 250.8 L812.7 253.9 L813.8 248.3 L814.9 257.1 L815.8 256.6 L817.1 269.8 L818.2 267.8 L819.3 278.7 L820.4 281.3 L821.7 284.7 L822.6 277.7 L823.7 276.2 L824.8 266.6 L825.9 261.7 L827.0 264.7 L828.1 255.2 L829.2 255.9 L830.3 244.0 L831.4 246.2 L832.1 240.8 L833.6 241.4 L834.7 241.6 L835.8 248.9 L836.9 253.3 L838.0 251.0 L839.5 259.6 L840.2 256.9 L841.3 267.4 L842.4 274.5 L843.5 269.2 L844.6 270.3 L845.7 281.9 L846.8 286.5 L847.9 291.5 L849.0 290.6 L850.1 290.8 L851.2 299.7 L852.8 299.7 L853.4 301.2 L854.5 291.7 L855.6 292.2 L856.7 290.4 L857.8 286.2 L858.9 280.8 L860.2 280.6 L861.1 286.8 L862.2 284.3 L863.3 287.5 L864.4 285.1 L865.5 292.8 L866.6 290.1 L867.7 295.0 L869.1 297.3 L869.9 303.2 L871.0 294.6 L872.1 304.7 L873.2 307.3 L874.3 303.4 L875.4 306.1 L876.5 310.0 L877.6 315.4 L878.7 312.0 L879.8 318.8 L881.0 317.6 L882.0 314.6 L883.1 323.2 L884.2 315.5 L885.3 317.9 L886.5 324.0 L887.6 319.3 L888.7 323.4 L889.9 324.9 L890.9 329.3 L892.0 337.0 L893.1 341.9 L894.2 339.1 L895.3 343.8 L895.8 350.2 L896.4 345.7 L897.5 347.2 L898.6 345.6 L899.7 345.0 L900.8 344.2 L901.9 348.6 L903.0 349.1 L904.1 348.3 L904.7 347.3 L906.3 349.8 L907.4 349.1 L908.5 352.3 L909.6 356.3 L910.7 355.2 L911.8 353.6 L912.9 353.6 L914.0 361.4 L915.1 360.3 L916.5 361.1 L917.3 362.0 L918.4 361.5 L919.5 361.1 L920.6 357.6 L921.7 359.5 L922.8 359.7 L923.9 358.0 L925.0 362.7 L926.1 359.2 L927.2 360.8 L928.3 360.9 L929.4 361.0 L930.5 360.6 L931.6 360.7 L932.7 356.9 L933.8 361.9 L934.3 357.8 L934.9 362.6 L936.0 364.3 L937.1 366.5 L938.2 363.3 L938.7 366.6 L939.3 372.9 L940.4 377.4 L941.5 383.6 L942.6 391.0" class="ol2" stroke-width="1.2"/><text class="ax" x="143.5" y="159.0" text-anchor="end">2.5k</text><text class="ax" x="143.5" y="219.5" text-anchor="end">2.0k</text><text class="ax" x="143.5" y="280.8" text-anchor="end">1.5k</text><text class="ax" x="143.5" y="342.3" text-anchor="end">1.0k</text><text class="ax" x="143.5" y="403.5" text-anchor="end">0.5k</text><text class="ax" x="143.5" y="465.0" text-anchor="end">0</text><text class="ax" x="191.5" y="483.9" text-anchor="middle">18:00</text><text class="ax" x="311.3" y="483.9" text-anchor="middle">18:30</text><text class="ax" x="430.3" y="483.9" text-anchor="middle">18:00</text><text class="ax" x="549.0" y="483.9" text-anchor="middle">17:30</text><text class="ax" x="667.0" y="483.9" text-anchor="middle">12:00</text><text class="ax" x="785.0" y="483.9" text-anchor="middle">12:00</text><text class="ax" x="903.0" y="483.9" text-anchor="middle">16:00</text>
    <g fill="#77787b"><rect x="968.500" y="523" width="2" height="2"/><rect x="968.500" y="527" width="2" height="2"/><rect x="964.500" y="527" width="2" height="2"/></g>
  </svg>
  <div class="ptitle">Requests per Second (RPS)</div>
  <div class="legend" style="left:24px;top:405.800px"><i style="background:#f7ac4a"></i><b>Total requests</b><i style="background:#93c98b"></i><b>Successful requests</b></div>
</div>

<!-- Panel 2 -->
<div class="panel" style="left:990px;top:94px;width:905px;height:440px">
  <div class="corner"></div>
  <svg width="905" height="440" viewBox="990 94 905 440">
    <circle cx="1001.2" cy="100.8" r="1.75" fill="#9b9c9e"/><circle cx="1001.2" cy="105" r="1.75" fill="#9b9c9e"/><circle cx="1001.2" cy="109.2" r="1.75" fill="#9b9c9e"/>
    <path d="M1060.5 338.4 L1061.2 339.8 L1061.9 341.2 L1062.5 343.8 L1063.2 345.6 L1063.9 345.1 L1065.8 346.6 L1067.7 350.9 L1069.7 351.6 L1071.6 353.2 L1073.5 355.8 L1074.9 353.5 L1076.3 352.1 L1077.7 348.5 L1079.1 346.5 L1080.5 343.9 L1081.6 345.1 L1082.7 346.1 L1083.8 345.7 L1084.9 346.8 L1086.0 346.6 L1087.1 344.4 L1088.2 344.8 L1089.4 342.7 L1090.5 340.7 L1091.6 339.5 L1093.8 342.5 L1096.0 343.3 L1098.2 346.1 L1100.4 348.2 L1102.6 348.2 L1105.4 346.8 L1108.2 341.7 L1110.9 338.3 L1113.7 333.4 L1116.5 332.1 L1118.3 330.7 L1120.0 326.9 L1121.8 325.3 L1123.5 324.5 L1125.3 326.6 L1127.7 328.8 L1130.1 336.0 L1132.5 342.8 L1134.9 349.9 L1137.3 352.8 L1139.0 352.0 L1140.6 349.8 L1142.3 346.2 L1143.9 343.7 L1145.6 341.2 L1147.0 341.0 L1148.4 340.0 L1149.7 339.6 L1151.1 338.3 L1152.5 337.0 L1154.2 340.0 L1155.8 342.4 L1157.5 344.8 L1159.1 346.3 L1160.8 348.2 L1162.7 348.4 L1164.7 352.2 L1166.6 353.8 L1168.6 354.8 L1170.5 354.8 L1172.2 355.4 L1173.8 352.6 L1175.5 346.6 L1177.1 345.5 L1178.8 343.2 L1181.6 343.7 L1184.4 347.1 L1187.1 351.9 L1189.9 355.3 L1192.7 354.7 L1194.6 356.0 L1196.6 353.5 L1198.5 353.8 L1200.5 351.2 L1202.4 351.4 L1203.9 349.9 L1205.5 345.5 L1207.0 343.3 L1208.6 338.6 L1210.1 336.8 L1211.3 339.2 L1212.5 340.5 L1213.8 344.1 L1215.0 347.5 L1216.2 349.3 L1218.4 347.8 L1220.6 346.3 L1222.9 346.9 L1225.1 343.9 L1227.3 344.6 L1230.1 343.3 L1232.8 340.2 L1235.6 338.6 L1238.3 337.5 L1241.1 337.7 L1243.3 339.4 L1245.5 343.0 L1247.8 347.5 L1250.0 352.2 L1252.2 353.1 L1253.6 352.8 L1255.0 352.5 L1256.3 349.9 L1257.7 348.9 L1259.1 350.2 L1260.8 349.8 L1262.5 351.6 L1264.1 352.0 L1265.8 354.3 L1267.5 354.7 L1269.4 350.3 L1271.3 346.1 L1273.3 339.5 L1275.2 332.0 L1277.1 329.9 L1278.2 328.5 L1279.3 328.1 L1280.5 326.5 L1281.6 327.1 L1282.7 327.4 L1284.4 327.7 L1286.0 331.7 L1287.7 337.8 L1289.3 342.5 L1291.0 342.8 L1293.8 344.9 L1296.5 346.9 L1299.3 347.7 L1302.0 348.7 L1304.8 348.5 L1305.9 347.3 L1307.0 345.0 L1308.2 340.7 L1309.3 337.3 L1310.4 335.8 L1311.8 329.9 L1313.2 324.9 L1314.5 318.3 L1315.9 311.3 L1317.3 308.1 L1319.2 309.4 L1321.2 309.4 L1323.1 311.2 L1325.1 313.1 L1327.0 313.5 L1328.7 308.0 L1330.3 300.9 L1332.0 292.1 L1333.6 285.8 L1335.3 280.9 L1336.5 282.7 L1337.8 283.8 L1339.0 288.0 L1340.3 292.0 L1341.5 293.8 L1343.6 290.8 L1345.8 286.2 L1347.9 281.1 L1350.1 277.9 L1352.2 274.8 L1353.3 276.7 L1354.4 278.2 L1355.5 278.2 L1356.6 279.9 L1357.7 281.9 L1358.8 281.2 L1359.9 280.8 L1361.0 278.2 L1362.1 275.7 L1363.2 273.7 L1364.8 266.5 L1366.3 250.4 L1367.9 234.1 L1369.4 220.2 L1371.0 213.0 L1371.9 213.8 L1372.9 219.5 L1373.8 223.6 L1374.8 229.4 L1375.7 236.6 L1376.8 243.5 L1377.9 255.3 L1379.0 266.8 L1380.1 279.6 L1381.2 286.4 L1382.3 289.2 L1383.4 296.4 L1384.6 302.5 L1385.7 306.7 L1386.8 308.8 L1388.7 309.8 L1390.7 311.2 L1392.6 311.7 L1394.6 311.8 L1396.5 313.2 L1397.6 311.9 L1398.7 312.0 L1399.8 308.5 L1400.9 309.3 L1402.0 307.9 L1404.2 306.9 L1406.4 304.6 L1408.7 302.1 L1410.9 299.1 L1413.1 296.4 L1415.9 297.4 L1418.7 294.7 L1421.4 293.9 L1424.2 294.1 L1427.0 293.7 L1429.2 294.4 L1431.4 298.0 L1433.6 299.8 L1435.8 301.5 L1438.0 302.7 L1439.7 304.8 L1441.3 304.3 L1443.0 305.6 L1444.6 305.1 L1446.3 305.2 L1448.2 307.5 L1450.2 310.7 L1452.1 311.7 L1454.1 315.5 L1456.0 316.8 L1457.9 316.0 L1459.9 314.6 L1461.8 310.6 L1463.8 310.4 L1465.7 309.7 L1467.4 306.4 L1469.0 304.9 L1470.7 302.8 L1472.3 301.9 L1474.0 301.1 L1475.4 302.7 L1476.8 306.6 L1478.2 308.3 L1479.6 311.7 L1481.0 313.3 L1482.7 313.0 L1484.3 311.6 L1486.0 312.1 L1487.6 309.9 L1489.3 306.3 L1491.2 304.4 L1493.2 299.0 L1495.1 293.4 L1497.1 288.8 L1499.0 287.0 L1500.1 286.9 L1501.2 287.3 L1502.3 288.4 L1503.4 290.4 L1504.5 291.2 L1505.6 294.5 L1506.7 298.7 L1507.8 302.0 L1508.9 304.6 L1510.0 306.6 L1510.8 306.4 L1511.7 304.9 L1512.5 302.8 L1513.4 299.6 L1514.2 299.9 L1516.1 300.6 L1518.1 302.7 L1520.0 305.6 L1522.0 308.7 L1523.9 310.7 L1525.3 310.8 L1526.7 312.4 L1528.0 312.4 L1529.4 311.5 L1530.8 310.3 L1532.5 301.9 L1534.1 284.2 L1535.8 267.2 L1537.4 252.5 L1539.1 247.5 L1540.8 253.4 L1542.5 266.1 L1544.1 284.8 L1545.8 299.9 L1547.5 306.8 L1549.2 309.0 L1550.8 308.0 L1552.5 308.7 L1554.1 307.0 L1555.8 307.0 L1556.9 307.7 L1558.0 309.3 L1559.1 311.2 L1560.2 311.2 L1561.3 307.8 L1563.2 293.7 L1565.2 265.5 L1567.1 235.7 L1569.1 212.0 L1571.0 197.6 L1572.4 201.0 L1573.8 212.5 L1575.1 229.7 L1576.5 242.2 L1577.9 250.8 L1579.0 258.5 L1580.1 264.6 L1581.3 274.8 L1582.4 281.1 L1583.5 284.8 L1584.9 284.2 L1586.3 279.7 L1587.6 275.9 L1589.0 270.1 L1590.4 270.7 L1592.3 272.5 L1594.3 278.3 L1596.2 283.1 L1598.2 290.6 L1600.1 294.7 L1602.4 296.0 L1604.7 301.6 L1606.9 307.6 L1609.2 312.7 L1611.5 313.6 L1612.9 313.7 L1614.3 313.3 L1615.7 313.3 L1617.1 312.6 L1618.5 310.7 L1621.2 307.8 L1623.9 303.3 L1626.5 298.0 L1629.2 294.0 L1631.9 291.1 L1633.6 293.2 L1635.2 297.1 L1636.9 299.1 L1638.5 303.3 L1640.2 303.8 L1641.9 307.1 L1643.5 310.0 L1645.2 312.7 L1646.8 314.6 L1648.5 315.7 L1649.9 315.5 L1651.3 314.5 L1652.6 310.5 L1654.0 308.5 L1655.4 309.4 L1657.1 311.0 L1658.7 312.5 L1660.4 314.9 L1662.0 316.7 L1663.7 313.5 L1665.9 301.9 L1668.1 280.5 L1670.4 256.9 L1672.6 234.3 L1674.8 220.9 L1675.9 219.0 L1677.0 217.2 L1678.1 213.7 L1679.2 213.8 L1680.3 213.0 L1681.1 215.6 L1682.0 218.2 L1682.8 221.6 L1683.7 225.7 L1684.5 228.7 L1685.9 238.3 L1687.3 251.7 L1688.6 266.4 L1690.0 280.1 L1691.4 287.5 L1692.2 290.1 L1693.1 288.7 L1693.9 290.2 L1694.8 287.8 L1695.6 286.9 L1697.0 282.5 L1698.4 276.6 L1699.7 268.8 L1701.1 261.4 L1702.5 257.6 L1703.7 257.6 L1704.9 258.4 L1706.2 258.1 L1707.4 259.6 L1708.6 260.1 L1709.3 257.2 L1710.0 253.4 L1710.8 249.7 L1711.5 248.1 L1712.2 247.0 L1713.0 249.6 L1713.8 253.3 L1714.7 256.8 L1715.5 261.6 L1716.3 265.3 L1717.7 272.4 L1719.1 285.2 L1720.5 298.2 L1721.9 308.7 L1723.3 312.4 L1724.7 313.6 L1726.1 309.1 L1727.4 305.0 L1728.8 301.8 L1730.2 298.0 L1731.3 298.4 L1732.4 301.8 L1733.5 302.1 L1734.6 303.3 L1735.7 303.5 L1738.3 296.6 L1740.9 282.4 L1743.6 269.3 L1746.2 257.8 L1748.8 252.0 L1750.1 253.0 L1751.3 259.4 L1752.6 267.4 L1753.8 272.5 L1755.1 277.0 L1757.3 281.6 L1759.5 290.1 L1761.8 299.8 L1764.0 305.6 L1766.2 311.2 L1767.4 310.1 L1768.6 304.2 L1769.9 301.7 L1771.1 296.3 L1772.3 295.7 L1773.9 297.6 L1775.4 300.7 L1777.0 306.8 L1778.5 311.2 L1780.1 313.8 L1780.9 311.6 L1781.7 310.6 L1782.6 308.2 L1783.4 304.9 L1784.2 303.4 L1785.0 302.8 L1785.9 305.3 L1786.7 306.7 L1787.6 309.1 L1788.4 309.3 L1789.5 306.9 L1790.6 301.9 L1791.7 298.5 L1792.8 294.5 L1793.9 291.4 L1795.0 293.7 L1796.1 295.1 L1797.2 296.0 L1798.3 299.9 L1799.4 298.2 L1800.8 295.4 L1802.2 290.0 L1803.6 282.4 L1805.0 276.5 L1806.4 274.6 L1808.1 277.7 L1809.7 285.2 L1811.4 294.4 L1813.0 302.7 L1814.7 309.4 L1815.5 310.1 L1816.3 309.5 L1817.2 309.7 L1818.0 308.4 L1818.8 308.2 L1820.5 310.3 L1822.1 314.6 L1823.8 315.8 L1825.4 319.9 L1827.1 320.6 L1827.9 321.8 L1828.8 319.9 L1829.6 318.5 L1830.5 317.1 L1831.3 315.8 L1832.8 310.8 L1834.3 300.2 L1835.8 291.0 L1837.3 280.3 L1838.8 276.4 L1840.1 276.9 L1841.4 280.6 L1842.6 287.2 L1843.9 291.6 L1845.2 292.8 L1845.7 292.9 L1846.3 293.0 L1846.8 293.2 L1847.4 293.0 L1847.9 292.8 L1849.3 294.7 L1850.7 297.5 L1852.0 302.5 L1853.4 305.8 L1854.8 308.9 L1855.6 309.2 L1856.5 307.8 L1857.3 307.3 L1858.2 308.2 L1859.0 306.2 L1859.8 309.0 L1860.7 310.7 L1861.5 312.7 L1862.4 312.9 L1863.2 314.3 L1863.2 460.4 L1060.5 460.4 Z" fill="#45382a"/><path d="M1060.5 392.7 L1061.7 393.0 L1062.9 394.6 L1064.2 395.6 L1065.4 396.5 L1066.6 397.4 L1073.8 397.9 L1081.0 397.2 L1088.2 396.4 L1095.4 395.0 L1102.6 394.7 L1105.4 393.9 L1108.2 392.9 L1110.9 391.7 L1113.7 390.8 L1116.5 391.0 L1118.4 390.5 L1120.4 389.9 L1122.3 389.3 L1124.3 388.2 L1126.2 388.4 L1127.9 389.7 L1129.5 391.8 L1131.2 394.2 L1132.8 396.2 L1134.5 396.1 L1137.8 396.5 L1141.1 395.6 L1144.5 394.2 L1147.8 392.7 L1151.1 392.7 L1155.0 392.8 L1158.9 395.2 L1162.7 396.7 L1166.6 397.7 L1170.5 398.1 L1172.2 398.5 L1173.8 397.2 L1175.5 396.5 L1177.1 395.5 L1178.8 394.7 L1181.8 395.0 L1184.9 396.1 L1187.9 397.0 L1191.0 397.5 L1194.0 398.1 L1197.1 398.2 L1200.1 396.2 L1203.2 395.0 L1206.2 394.6 L1209.3 393.6 L1211.2 394.2 L1213.2 394.8 L1215.1 395.4 L1217.1 396.9 L1219.0 396.2 L1223.4 396.1 L1227.8 395.0 L1232.3 394.6 L1236.7 393.3 L1241.1 393.1 L1243.3 394.0 L1245.5 394.5 L1247.8 396.0 L1250.0 397.4 L1252.2 397.0 L1255.5 397.2 L1258.8 397.5 L1262.2 398.2 L1265.5 397.9 L1268.8 397.2 L1271.0 396.5 L1273.2 394.7 L1275.5 393.3 L1277.7 391.2 L1279.9 391.3 L1282.1 391.9 L1284.3 393.0 L1286.6 394.0 L1288.8 395.4 L1291.0 394.9 L1294.0 395.7 L1297.1 397.0 L1300.1 397.2 L1303.2 396.9 L1306.2 397.1 L1308.4 395.0 L1310.6 391.9 L1312.9 387.3 L1315.1 383.7 L1317.3 382.1 L1319.2 381.3 L1321.2 381.6 L1323.1 382.5 L1325.1 381.8 L1327.0 381.1 L1328.7 380.0 L1330.4 378.0 L1332.1 376.2 L1333.8 373.5 L1335.5 372.2 L1336.9 371.9 L1338.3 373.2 L1339.7 373.0 L1341.1 373.0 L1342.5 372.9 L1344.4 372.2 L1346.4 371.0 L1348.3 370.1 L1350.3 368.2 L1352.2 367.2 L1354.1 367.5 L1356.1 367.0 L1358.0 367.7 L1360.0 366.1 L1361.9 365.6 L1363.8 362.7 L1365.8 356.5 L1367.7 350.8 L1369.7 344.9 L1371.6 342.6 L1373.3 345.3 L1374.9 350.6 L1376.6 358.2 L1378.2 364.4 L1379.9 368.9 L1381.8 371.0 L1383.8 373.2 L1385.7 375.1 L1387.7 377.4 L1389.6 378.6 L1391.5 379.3 L1393.5 380.1 L1395.4 381.6 L1397.4 381.2 L1399.3 381.2 L1402.6 381.6 L1405.9 379.8 L1409.3 378.8 L1412.6 376.8 L1415.9 376.6 L1418.9 376.0 L1422.0 375.9 L1425.0 375.7 L1428.1 375.3 L1431.1 374.8 L1433.9 375.2 L1436.7 376.6 L1439.4 377.3 L1442.2 378.1 L1445.0 377.9 L1447.5 379.1 L1450.0 380.7 L1452.4 382.0 L1454.9 383.5 L1457.4 383.6 L1460.7 383.2 L1464.0 381.9 L1467.4 379.8 L1470.7 379.2 L1474.0 378.6 L1475.7 378.0 L1477.4 380.0 L1479.0 381.2 L1480.7 381.9 L1482.4 381.7 L1484.1 382.5 L1485.7 381.0 L1487.4 381.3 L1489.0 380.1 L1490.7 378.9 L1492.6 378.1 L1494.6 377.3 L1496.5 375.7 L1498.5 374.7 L1500.4 374.4 L1502.9 374.1 L1505.4 375.1 L1507.8 377.7 L1510.3 378.0 L1512.8 379.9 L1516.1 379.5 L1519.4 380.9 L1522.8 381.4 L1526.1 382.0 L1529.4 381.8 L1530.5 382.1 L1531.6 381.1 L1532.8 381.3 L1533.9 380.2 L1535.0 379.9 L1535.9 377.0 L1536.9 371.6 L1537.8 366.0 L1538.8 360.8 L1539.7 358.9 L1541.5 361.6 L1543.3 366.3 L1545.2 372.7 L1547.0 377.5 L1548.8 379.6 L1551.3 380.8 L1553.8 381.8 L1556.3 381.4 L1558.8 380.0 L1561.3 379.3 L1563.4 374.2 L1565.4 363.9 L1567.5 353.6 L1569.5 344.5 L1571.6 341.0 L1573.7 343.1 L1575.8 350.0 L1577.9 359.0 L1580.0 367.4 L1582.1 370.6 L1583.8 371.2 L1585.4 371.3 L1587.1 370.7 L1588.7 369.4 L1590.4 369.1 L1592.9 370.7 L1595.4 372.6 L1597.9 374.1 L1600.4 377.2 L1602.9 377.7 L1604.8 378.6 L1606.7 380.1 L1608.7 380.4 L1610.6 381.6 L1612.5 381.3 L1613.9 382.3 L1615.3 381.5 L1616.6 381.5 L1618.0 381.9 L1619.4 381.5 L1621.9 380.8 L1624.4 379.6 L1626.9 377.6 L1629.4 375.3 L1631.9 375.1 L1635.5 376.2 L1639.1 378.1 L1642.7 380.8 L1646.3 382.5 L1649.9 383.1 L1652.9 383.5 L1656.0 384.2 L1659.0 383.2 L1662.1 382.7 L1665.1 381.4 L1667.3 377.1 L1669.5 369.8 L1671.8 361.2 L1674.0 353.2 L1676.2 349.5 L1677.3 348.1 L1678.4 348.1 L1679.5 347.3 L1680.6 348.2 L1681.7 348.7 L1683.6 351.7 L1685.6 357.0 L1687.5 362.8 L1689.5 368.8 L1691.4 370.9 L1693.6 371.3 L1695.8 369.4 L1698.1 367.4 L1700.3 365.6 L1702.5 365.4 L1704.6 363.9 L1706.7 363.8 L1708.8 362.3 L1710.9 362.1 L1713.0 362.1 L1715.1 364.9 L1717.1 368.9 L1719.2 374.7 L1721.2 379.9 L1723.3 381.3 L1725.8 382.0 L1728.3 380.7 L1730.7 379.3 L1733.2 377.4 L1735.7 376.1 L1738.4 375.1 L1741.0 371.4 L1743.7 367.5 L1746.3 364.3 L1749.0 363.3 L1752.4 364.2 L1755.9 368.9 L1759.3 373.8 L1762.8 378.4 L1766.2 381.3 L1767.6 381.0 L1769.0 380.4 L1770.3 378.2 L1771.7 377.8 L1773.1 377.4 L1775.0 378.0 L1777.0 379.0 L1778.9 380.6 L1780.9 381.1 L1782.8 382.2 L1784.7 380.9 L1786.7 379.6 L1788.6 378.1 L1790.6 376.3 L1792.5 375.1 L1793.9 375.3 L1795.3 376.4 L1796.6 377.9 L1798.0 379.3 L1799.4 379.4 L1800.8 377.6 L1802.2 375.3 L1803.6 373.1 L1805.0 370.3 L1806.4 369.7 L1808.1 370.5 L1809.7 373.6 L1811.4 377.5 L1813.0 380.7 L1814.7 382.3 L1815.8 382.3 L1816.9 382.8 L1818.0 382.1 L1819.1 381.3 L1820.2 381.2 L1821.5 383.1 L1822.8 384.6 L1824.0 386.2 L1825.3 387.0 L1826.6 387.0 L1828.9 384.6 L1831.2 380.8 L1833.6 376.2 L1835.9 373.1 L1838.2 371.1 L1840.4 371.1 L1842.6 371.7 L1844.9 373.6 L1847.1 375.4 L1849.3 377.2 L1852.1 377.4 L1854.9 379.7 L1857.6 381.2 L1860.4 382.6 L1863.2 383.6 L1863.2 460.4 L1060.5 460.4 Z" fill="#3c3f2f"/><g stroke="rgba(255,255,255,0.17)" stroke-width="1.4"><line x1="1060.5" y1="154.3" x2="1863.5" y2="154.3"/><line x1="1060.5" y1="204.9" x2="1863.5" y2="204.9"/><line x1="1060.5" y1="255.9" x2="1863.5" y2="255.9"/><line x1="1060.5" y1="306.9" x2="1863.5" y2="306.9"/><line x1="1060.5" y1="357.9" x2="1863.5" y2="357.9"/><line x1="1060.5" y1="408.9" x2="1863.5" y2="408.9"/><line x1="1060.5" y1="460.3" x2="1863.5" y2="460.3"/><line x1="1101.5" y1="154.3" x2="1101.5" y2="460.3"/><line x1="1223.5" y1="154.3" x2="1223.5" y2="460.3"/><line x1="1344.5" y1="154.3" x2="1344.5" y2="460.3"/><line x1="1465.0" y1="154.3" x2="1465.0" y2="460.3"/><line x1="1584.0" y1="154.3" x2="1584.0" y2="460.3"/><line x1="1705.3" y1="154.3" x2="1705.3" y2="460.3"/><line x1="1824.4" y1="154.3" x2="1824.4" y2="460.3"/></g><path d="M1060.5 392.7 L1061.7 393.0 L1062.9 394.6 L1064.2 395.6 L1065.4 396.5 L1066.6 397.4 L1073.8 397.9 L1081.0 397.2 L1088.2 396.4 L1095.4 395.0 L1102.6 394.7 L1105.4 393.9 L1108.2 392.9 L1110.9 391.7 L1113.7 390.8 L1116.5 391.0 L1118.4 390.5 L1120.4 389.9 L1122.3 389.3 L1124.3 388.2 L1126.2 388.4 L1127.9 389.7 L1129.5 391.8 L1131.2 394.2 L1132.8 396.2 L1134.5 396.1 L1137.8 396.5 L1141.1 395.6 L1144.5 394.2 L1147.8 392.7 L1151.1 392.7 L1155.0 392.8 L1158.9 395.2 L1162.7 396.7 L1166.6 397.7 L1170.5 398.1 L1172.2 398.5 L1173.8 397.2 L1175.5 396.5 L1177.1 395.5 L1178.8 394.7 L1181.8 395.0 L1184.9 396.1 L1187.9 397.0 L1191.0 397.5 L1194.0 398.1 L1197.1 398.2 L1200.1 396.2 L1203.2 395.0 L1206.2 394.6 L1209.3 393.6 L1211.2 394.2 L1213.2 394.8 L1215.1 395.4 L1217.1 396.9 L1219.0 396.2 L1223.4 396.1 L1227.8 395.0 L1232.3 394.6 L1236.7 393.3 L1241.1 393.1 L1243.3 394.0 L1245.5 394.5 L1247.8 396.0 L1250.0 397.4 L1252.2 397.0 L1255.5 397.2 L1258.8 397.5 L1262.2 398.2 L1265.5 397.9 L1268.8 397.2 L1271.0 396.5 L1273.2 394.7 L1275.5 393.3 L1277.7 391.2 L1279.9 391.3 L1282.1 391.9 L1284.3 393.0 L1286.6 394.0 L1288.8 395.4 L1291.0 394.9 L1294.0 395.7 L1297.1 397.0 L1300.1 397.2 L1303.2 396.9 L1306.2 397.1 L1308.4 395.0 L1310.6 391.9 L1312.9 387.3 L1315.1 383.7 L1317.3 382.1 L1319.2 381.3 L1321.2 381.6 L1323.1 382.5 L1325.1 381.8 L1327.0 381.1 L1328.7 380.0 L1330.4 378.0 L1332.1 376.2 L1333.8 373.5 L1335.5 372.2 L1336.9 371.9 L1338.3 373.2 L1339.7 373.0 L1341.1 373.0 L1342.5 372.9 L1344.4 372.2 L1346.4 371.0 L1348.3 370.1 L1350.3 368.2 L1352.2 367.2 L1354.1 367.5 L1356.1 367.0 L1358.0 367.7 L1360.0 366.1 L1361.9 365.6 L1363.8 362.7 L1365.8 356.5 L1367.7 350.8 L1369.7 344.9 L1371.6 342.6 L1373.3 345.3 L1374.9 350.6 L1376.6 358.2 L1378.2 364.4 L1379.9 368.9 L1381.8 371.0 L1383.8 373.2 L1385.7 375.1 L1387.7 377.4 L1389.6 378.6 L1391.5 379.3 L1393.5 380.1 L1395.4 381.6 L1397.4 381.2 L1399.3 381.2 L1402.6 381.6 L1405.9 379.8 L1409.3 378.8 L1412.6 376.8 L1415.9 376.6 L1418.9 376.0 L1422.0 375.9 L1425.0 375.7 L1428.1 375.3 L1431.1 374.8 L1433.9 375.2 L1436.7 376.6 L1439.4 377.3 L1442.2 378.1 L1445.0 377.9 L1447.5 379.1 L1450.0 380.7 L1452.4 382.0 L1454.9 383.5 L1457.4 383.6 L1460.7 383.2 L1464.0 381.9 L1467.4 379.8 L1470.7 379.2 L1474.0 378.6 L1475.7 378.0 L1477.4 380.0 L1479.0 381.2 L1480.7 381.9 L1482.4 381.7 L1484.1 382.5 L1485.7 381.0 L1487.4 381.3 L1489.0 380.1 L1490.7 378.9 L1492.6 378.1 L1494.6 377.3 L1496.5 375.7 L1498.5 374.7 L1500.4 374.4 L1502.9 374.1 L1505.4 375.1 L1507.8 377.7 L1510.3 378.0 L1512.8 379.9 L1516.1 379.5 L1519.4 380.9 L1522.8 381.4 L1526.1 382.0 L1529.4 381.8 L1530.5 382.1 L1531.6 381.1 L1532.8 381.3 L1533.9 380.2 L1535.0 379.9 L1535.9 377.0 L1536.9 371.6 L1537.8 366.0 L1538.8 360.8 L1539.7 358.9 L1541.5 361.6 L1543.3 366.3 L1545.2 372.7 L1547.0 377.5 L1548.8 379.6 L1551.3 380.8 L1553.8 381.8 L1556.3 381.4 L1558.8 380.0 L1561.3 379.3 L1563.4 374.2 L1565.4 363.9 L1567.5 353.6 L1569.5 344.5 L1571.6 341.0 L1573.7 343.1 L1575.8 350.0 L1577.9 359.0 L1580.0 367.4 L1582.1 370.6 L1583.8 371.2 L1585.4 371.3 L1587.1 370.7 L1588.7 369.4 L1590.4 369.1 L1592.9 370.7 L1595.4 372.6 L1597.9 374.1 L1600.4 377.2 L1602.9 377.7 L1604.8 378.6 L1606.7 380.1 L1608.7 380.4 L1610.6 381.6 L1612.5 381.3 L1613.9 382.3 L1615.3 381.5 L1616.6 381.5 L1618.0 381.9 L1619.4 381.5 L1621.9 380.8 L1624.4 379.6 L1626.9 377.6 L1629.4 375.3 L1631.9 375.1 L1635.5 376.2 L1639.1 378.1 L1642.7 380.8 L1646.3 382.5 L1649.9 383.1 L1652.9 383.5 L1656.0 384.2 L1659.0 383.2 L1662.1 382.7 L1665.1 381.4 L1667.3 377.1 L1669.5 369.8 L1671.8 361.2 L1674.0 353.2 L1676.2 349.5 L1677.3 348.1 L1678.4 348.1 L1679.5 347.3 L1680.6 348.2 L1681.7 348.7 L1683.6 351.7 L1685.6 357.0 L1687.5 362.8 L1689.5 368.8 L1691.4 370.9 L1693.6 371.3 L1695.8 369.4 L1698.1 367.4 L1700.3 365.6 L1702.5 365.4 L1704.6 363.9 L1706.7 363.8 L1708.8 362.3 L1710.9 362.1 L1713.0 362.1 L1715.1 364.9 L1717.1 368.9 L1719.2 374.7 L1721.2 379.9 L1723.3 381.3 L1725.8 382.0 L1728.3 380.7 L1730.7 379.3 L1733.2 377.4 L1735.7 376.1 L1738.4 375.1 L1741.0 371.4 L1743.7 367.5 L1746.3 364.3 L1749.0 363.3 L1752.4 364.2 L1755.9 368.9 L1759.3 373.8 L1762.8 378.4 L1766.2 381.3 L1767.6 381.0 L1769.0 380.4 L1770.3 378.2 L1771.7 377.8 L1773.1 377.4 L1775.0 378.0 L1777.0 379.0 L1778.9 380.6 L1780.9 381.1 L1782.8 382.2 L1784.7 380.9 L1786.7 379.6 L1788.6 378.1 L1790.6 376.3 L1792.5 375.1 L1793.9 375.3 L1795.3 376.4 L1796.6 377.9 L1798.0 379.3 L1799.4 379.4 L1800.8 377.6 L1802.2 375.3 L1803.6 373.1 L1805.0 370.3 L1806.4 369.7 L1808.1 370.5 L1809.7 373.6 L1811.4 377.5 L1813.0 380.7 L1814.7 382.3 L1815.8 382.3 L1816.9 382.8 L1818.0 382.1 L1819.1 381.3 L1820.2 381.2 L1821.5 383.1 L1822.8 384.6 L1824.0 386.2 L1825.3 387.0 L1826.6 387.0 L1828.9 384.6 L1831.2 380.8 L1833.6 376.2 L1835.9 373.1 L1838.2 371.1 L1840.4 371.1 L1842.6 371.7 L1844.9 373.6 L1847.1 375.4 L1849.3 377.2 L1852.1 377.4 L1854.9 379.7 L1857.6 381.2 L1860.4 382.6 L1863.2 383.6" class="gl"/><path d="M1060.5 392.7 L1061.7 393.0 L1062.9 394.6 L1064.2 395.6 L1065.4 396.5 L1066.6 397.4 L1073.8 397.9 L1081.0 397.2 L1088.2 396.4 L1095.4 395.0 L1102.6 394.7 L1105.4 393.9 L1108.2 392.9 L1110.9 391.7 L1113.7 390.8 L1116.5 391.0 L1118.4 390.5 L1120.4 389.9 L1122.3 389.3 L1124.3 388.2 L1126.2 388.4 L1127.9 389.7 L1129.5 391.8 L1131.2 394.2 L1132.8 396.2 L1134.5 396.1 L1137.8 396.5 L1141.1 395.6 L1144.5 394.2 L1147.8 392.7 L1151.1 392.7 L1155.0 392.8 L1158.9 395.2 L1162.7 396.7 L1166.6 397.7 L1170.5 398.1 L1172.2 398.5 L1173.8 397.2 L1175.5 396.5 L1177.1 395.5 L1178.8 394.7 L1181.8 395.0 L1184.9 396.1 L1187.9 397.0 L1191.0 397.5 L1194.0 398.1 L1197.1 398.2 L1200.1 396.2 L1203.2 395.0 L1206.2 394.6 L1209.3 393.6 L1211.2 394.2 L1213.2 394.8 L1215.1 395.4 L1217.1 396.9 L1219.0 396.2 L1223.4 396.1 L1227.8 395.0 L1232.3 394.6 L1236.7 393.3 L1241.1 393.1 L1243.3 394.0 L1245.5 394.5 L1247.8 396.0 L1250.0 397.4 L1252.2 397.0 L1255.5 397.2 L1258.8 397.5 L1262.2 398.2 L1265.5 397.9 L1268.8 397.2 L1271.0 396.5 L1273.2 394.7 L1275.5 393.3 L1277.7 391.2 L1279.9 391.3 L1282.1 391.9 L1284.3 393.0 L1286.6 394.0 L1288.8 395.4 L1291.0 394.9 L1294.0 395.7 L1297.1 397.0 L1300.1 397.2 L1303.2 396.9 L1306.2 397.1 L1308.4 395.0 L1310.6 391.9 L1312.9 387.3 L1315.1 383.7 L1317.3 382.1 L1319.2 381.3 L1321.2 381.6 L1323.1 382.5 L1325.1 381.8 L1327.0 381.1 L1328.7 380.0 L1330.4 378.0 L1332.1 376.2 L1333.8 373.5 L1335.5 372.2 L1336.9 371.9 L1338.3 373.2 L1339.7 373.0 L1341.1 373.0 L1342.5 372.9 L1344.4 372.2 L1346.4 371.0 L1348.3 370.1 L1350.3 368.2 L1352.2 367.2 L1354.1 367.5 L1356.1 367.0 L1358.0 367.7 L1360.0 366.1 L1361.9 365.6 L1363.8 362.7 L1365.8 356.5 L1367.7 350.8 L1369.7 344.9 L1371.6 342.6 L1373.3 345.3 L1374.9 350.6 L1376.6 358.2 L1378.2 364.4 L1379.9 368.9 L1381.8 371.0 L1383.8 373.2 L1385.7 375.1 L1387.7 377.4 L1389.6 378.6 L1391.5 379.3 L1393.5 380.1 L1395.4 381.6 L1397.4 381.2 L1399.3 381.2 L1402.6 381.6 L1405.9 379.8 L1409.3 378.8 L1412.6 376.8 L1415.9 376.6 L1418.9 376.0 L1422.0 375.9 L1425.0 375.7 L1428.1 375.3 L1431.1 374.8 L1433.9 375.2 L1436.7 376.6 L1439.4 377.3 L1442.2 378.1 L1445.0 377.9 L1447.5 379.1 L1450.0 380.7 L1452.4 382.0 L1454.9 383.5 L1457.4 383.6 L1460.7 383.2 L1464.0 381.9 L1467.4 379.8 L1470.7 379.2 L1474.0 378.6 L1475.7 378.0 L1477.4 380.0 L1479.0 381.2 L1480.7 381.9 L1482.4 381.7 L1484.1 382.5 L1485.7 381.0 L1487.4 381.3 L1489.0 380.1 L1490.7 378.9 L1492.6 378.1 L1494.6 377.3 L1496.5 375.7 L1498.5 374.7 L1500.4 374.4 L1502.9 374.1 L1505.4 375.1 L1507.8 377.7 L1510.3 378.0 L1512.8 379.9 L1516.1 379.5 L1519.4 380.9 L1522.8 381.4 L1526.1 382.0 L1529.4 381.8 L1530.5 382.1 L1531.6 381.1 L1532.8 381.3 L1533.9 380.2 L1535.0 379.9 L1535.9 377.0 L1536.9 371.6 L1537.8 366.0 L1538.8 360.8 L1539.7 358.9 L1541.5 361.6 L1543.3 366.3 L1545.2 372.7 L1547.0 377.5 L1548.8 379.6 L1551.3 380.8 L1553.8 381.8 L1556.3 381.4 L1558.8 380.0 L1561.3 379.3 L1563.4 374.2 L1565.4 363.9 L1567.5 353.6 L1569.5 344.5 L1571.6 341.0 L1573.7 343.1 L1575.8 350.0 L1577.9 359.0 L1580.0 367.4 L1582.1 370.6 L1583.8 371.2 L1585.4 371.3 L1587.1 370.7 L1588.7 369.4 L1590.4 369.1 L1592.9 370.7 L1595.4 372.6 L1597.9 374.1 L1600.4 377.2 L1602.9 377.7 L1604.8 378.6 L1606.7 380.1 L1608.7 380.4 L1610.6 381.6 L1612.5 381.3 L1613.9 382.3 L1615.3 381.5 L1616.6 381.5 L1618.0 381.9 L1619.4 381.5 L1621.9 380.8 L1624.4 379.6 L1626.9 377.6 L1629.4 375.3 L1631.9 375.1 L1635.5 376.2 L1639.1 378.1 L1642.7 380.8 L1646.3 382.5 L1649.9 383.1 L1652.9 383.5 L1656.0 384.2 L1659.0 383.2 L1662.1 382.7 L1665.1 381.4 L1667.3 377.1 L1669.5 369.8 L1671.8 361.2 L1674.0 353.2 L1676.2 349.5 L1677.3 348.1 L1678.4 348.1 L1679.5 347.3 L1680.6 348.2 L1681.7 348.7 L1683.6 351.7 L1685.6 357.0 L1687.5 362.8 L1689.5 368.8 L1691.4 370.9 L1693.6 371.3 L1695.8 369.4 L1698.1 367.4 L1700.3 365.6 L1702.5 365.4 L1704.6 363.9 L1706.7 363.8 L1708.8 362.3 L1710.9 362.1 L1713.0 362.1 L1715.1 364.9 L1717.1 368.9 L1719.2 374.7 L1721.2 379.9 L1723.3 381.3 L1725.8 382.0 L1728.3 380.7 L1730.7 379.3 L1733.2 377.4 L1735.7 376.1 L1738.4 375.1 L1741.0 371.4 L1743.7 367.5 L1746.3 364.3 L1749.0 363.3 L1752.4 364.2 L1755.9 368.9 L1759.3 373.8 L1762.8 378.4 L1766.2 381.3 L1767.6 381.0 L1769.0 380.4 L1770.3 378.2 L1771.7 377.8 L1773.1 377.4 L1775.0 378.0 L1777.0 379.0 L1778.9 380.6 L1780.9 381.1 L1782.8 382.2 L1784.7 380.9 L1786.7 379.6 L1788.6 378.1 L1790.6 376.3 L1792.5 375.1 L1793.9 375.3 L1795.3 376.4 L1796.6 377.9 L1798.0 379.3 L1799.4 379.4 L1800.8 377.6 L1802.2 375.3 L1803.6 373.1 L1805.0 370.3 L1806.4 369.7 L1808.1 370.5 L1809.7 373.6 L1811.4 377.5 L1813.0 380.7 L1814.7 382.3 L1815.8 382.3 L1816.9 382.8 L1818.0 382.1 L1819.1 381.3 L1820.2 381.2 L1821.5 383.1 L1822.8 384.6 L1824.0 386.2 L1825.3 387.0 L1826.6 387.0 L1828.9 384.6 L1831.2 380.8 L1833.6 376.2 L1835.9 373.1 L1838.2 371.1 L1840.4 371.1 L1842.6 371.7 L1844.9 373.6 L1847.1 375.4 L1849.3 377.2 L1852.1 377.4 L1854.9 379.7 L1857.6 381.2 L1860.4 382.6 L1863.2 383.6" class="gl2"/><path d="M1060.5 338.4 L1061.2 339.8 L1061.9 341.2 L1062.5 343.8 L1063.2 345.6 L1063.9 345.1 L1065.8 346.6 L1067.7 350.9 L1069.7 351.6 L1071.6 353.2 L1073.5 355.8 L1074.9 353.5 L1076.3 352.1 L1077.7 348.5 L1079.1 346.5 L1080.5 343.9 L1081.6 345.1 L1082.7 346.1 L1083.8 345.7 L1084.9 346.8 L1086.0 346.6 L1087.1 344.4 L1088.2 344.8 L1089.4 342.7 L1090.5 340.7 L1091.6 339.5 L1093.8 342.5 L1096.0 343.3 L1098.2 346.1 L1100.4 348.2 L1102.6 348.2 L1105.4 346.8 L1108.2 341.7 L1110.9 338.3 L1113.7 333.4 L1116.5 332.1 L1118.3 330.7 L1120.0 326.9 L1121.8 325.3 L1123.5 324.5 L1125.3 326.6 L1127.7 328.8 L1130.1 336.0 L1132.5 342.8 L1134.9 349.9 L1137.3 352.8 L1139.0 352.0 L1140.6 349.8 L1142.3 346.2 L1143.9 343.7 L1145.6 341.2 L1147.0 341.0 L1148.4 340.0 L1149.7 339.6 L1151.1 338.3 L1152.5 337.0 L1154.2 340.0 L1155.8 342.4 L1157.5 344.8 L1159.1 346.3 L1160.8 348.2 L1162.7 348.4 L1164.7 352.2 L1166.6 353.8 L1168.6 354.8 L1170.5 354.8 L1172.2 355.4 L1173.8 352.6 L1175.5 346.6 L1177.1 345.5 L1178.8 343.2 L1181.6 343.7 L1184.4 347.1 L1187.1 351.9 L1189.9 355.3 L1192.7 354.7 L1194.6 356.0 L1196.6 353.5 L1198.5 353.8 L1200.5 351.2 L1202.4 351.4 L1203.9 349.9 L1205.5 345.5 L1207.0 343.3 L1208.6 338.6 L1210.1 336.8 L1211.3 339.2 L1212.5 340.5 L1213.8 344.1 L1215.0 347.5 L1216.2 349.3 L1218.4 347.8 L1220.6 346.3 L1222.9 346.9 L1225.1 343.9 L1227.3 344.6 L1230.1 343.3 L1232.8 340.2 L1235.6 338.6 L1238.3 337.5 L1241.1 337.7 L1243.3 339.4 L1245.5 343.0 L1247.8 347.5 L1250.0 352.2 L1252.2 353.1 L1253.6 352.8 L1255.0 352.5 L1256.3 349.9 L1257.7 348.9 L1259.1 350.2 L1260.8 349.8 L1262.5 351.6 L1264.1 352.0 L1265.8 354.3 L1267.5 354.7 L1269.4 350.3 L1271.3 346.1 L1273.3 339.5 L1275.2 332.0 L1277.1 329.9 L1278.2 328.5 L1279.3 328.1 L1280.5 326.5 L1281.6 327.1 L1282.7 327.4 L1284.4 327.7 L1286.0 331.7 L1287.7 337.8 L1289.3 342.5 L1291.0 342.8 L1293.8 344.9 L1296.5 346.9 L1299.3 347.7 L1302.0 348.7 L1304.8 348.5 L1305.9 347.3 L1307.0 345.0 L1308.2 340.7 L1309.3 337.3 L1310.4 335.8 L1311.8 329.9 L1313.2 324.9 L1314.5 318.3 L1315.9 311.3 L1317.3 308.1 L1319.2 309.4 L1321.2 309.4 L1323.1 311.2 L1325.1 313.1 L1327.0 313.5 L1328.7 308.0 L1330.3 300.9 L1332.0 292.1 L1333.6 285.8 L1335.3 280.9 L1336.5 282.7 L1337.8 283.8 L1339.0 288.0 L1340.3 292.0 L1341.5 293.8 L1343.6 290.8 L1345.8 286.2 L1347.9 281.1 L1350.1 277.9 L1352.2 274.8 L1353.3 276.7 L1354.4 278.2 L1355.5 278.2 L1356.6 279.9 L1357.7 281.9 L1358.8 281.2 L1359.9 280.8 L1361.0 278.2 L1362.1 275.7 L1363.2 273.7 L1364.8 266.5 L1366.3 250.4 L1367.9 234.1 L1369.4 220.2 L1371.0 213.0 L1371.9 213.8 L1372.9 219.5 L1373.8 223.6 L1374.8 229.4 L1375.7 236.6 L1376.8 243.5 L1377.9 255.3 L1379.0 266.8 L1380.1 279.6 L1381.2 286.4 L1382.3 289.2 L1383.4 296.4 L1384.6 302.5 L1385.7 306.7 L1386.8 308.8 L1388.7 309.8 L1390.7 311.2 L1392.6 311.7 L1394.6 311.8 L1396.5 313.2 L1397.6 311.9 L1398.7 312.0 L1399.8 308.5 L1400.9 309.3 L1402.0 307.9 L1404.2 306.9 L1406.4 304.6 L1408.7 302.1 L1410.9 299.1 L1413.1 296.4 L1415.9 297.4 L1418.7 294.7 L1421.4 293.9 L1424.2 294.1 L1427.0 293.7 L1429.2 294.4 L1431.4 298.0 L1433.6 299.8 L1435.8 301.5 L1438.0 302.7 L1439.7 304.8 L1441.3 304.3 L1443.0 305.6 L1444.6 305.1 L1446.3 305.2 L1448.2 307.5 L1450.2 310.7 L1452.1 311.7 L1454.1 315.5 L1456.0 316.8 L1457.9 316.0 L1459.9 314.6 L1461.8 310.6 L1463.8 310.4 L1465.7 309.7 L1467.4 306.4 L1469.0 304.9 L1470.7 302.8 L1472.3 301.9 L1474.0 301.1 L1475.4 302.7 L1476.8 306.6 L1478.2 308.3 L1479.6 311.7 L1481.0 313.3 L1482.7 313.0 L1484.3 311.6 L1486.0 312.1 L1487.6 309.9 L1489.3 306.3 L1491.2 304.4 L1493.2 299.0 L1495.1 293.4 L1497.1 288.8 L1499.0 287.0 L1500.1 286.9 L1501.2 287.3 L1502.3 288.4 L1503.4 290.4 L1504.5 291.2 L1505.6 294.5 L1506.7 298.7 L1507.8 302.0 L1508.9 304.6 L1510.0 306.6 L1510.8 306.4 L1511.7 304.9 L1512.5 302.8 L1513.4 299.6 L1514.2 299.9 L1516.1 300.6 L1518.1 302.7 L1520.0 305.6 L1522.0 308.7 L1523.9 310.7 L1525.3 310.8 L1526.7 312.4 L1528.0 312.4 L1529.4 311.5 L1530.8 310.3 L1532.5 301.9 L1534.1 284.2 L1535.8 267.2 L1537.4 252.5 L1539.1 247.5 L1540.8 253.4 L1542.5 266.1 L1544.1 284.8 L1545.8 299.9 L1547.5 306.8 L1549.2 309.0 L1550.8 308.0 L1552.5 308.7 L1554.1 307.0 L1555.8 307.0 L1556.9 307.7 L1558.0 309.3 L1559.1 311.2 L1560.2 311.2 L1561.3 307.8 L1563.2 293.7 L1565.2 265.5 L1567.1 235.7 L1569.1 212.0 L1571.0 197.6 L1572.4 201.0 L1573.8 212.5 L1575.1 229.7 L1576.5 242.2 L1577.9 250.8 L1579.0 258.5 L1580.1 264.6 L1581.3 274.8 L1582.4 281.1 L1583.5 284.8 L1584.9 284.2 L1586.3 279.7 L1587.6 275.9 L1589.0 270.1 L1590.4 270.7 L1592.3 272.5 L1594.3 278.3 L1596.2 283.1 L1598.2 290.6 L1600.1 294.7 L1602.4 296.0 L1604.7 301.6 L1606.9 307.6 L1609.2 312.7 L1611.5 313.6 L1612.9 313.7 L1614.3 313.3 L1615.7 313.3 L1617.1 312.6 L1618.5 310.7 L1621.2 307.8 L1623.9 303.3 L1626.5 298.0 L1629.2 294.0 L1631.9 291.1 L1633.6 293.2 L1635.2 297.1 L1636.9 299.1 L1638.5 303.3 L1640.2 303.8 L1641.9 307.1 L1643.5 310.0 L1645.2 312.7 L1646.8 314.6 L1648.5 315.7 L1649.9 315.5 L1651.3 314.5 L1652.6 310.5 L1654.0 308.5 L1655.4 309.4 L1657.1 311.0 L1658.7 312.5 L1660.4 314.9 L1662.0 316.7 L1663.7 313.5 L1665.9 301.9 L1668.1 280.5 L1670.4 256.9 L1672.6 234.3 L1674.8 220.9 L1675.9 219.0 L1677.0 217.2 L1678.1 213.7 L1679.2 213.8 L1680.3 213.0 L1681.1 215.6 L1682.0 218.2 L1682.8 221.6 L1683.7 225.7 L1684.5 228.7 L1685.9 238.3 L1687.3 251.7 L1688.6 266.4 L1690.0 280.1 L1691.4 287.5 L1692.2 290.1 L1693.1 288.7 L1693.9 290.2 L1694.8 287.8 L1695.6 286.9 L1697.0 282.5 L1698.4 276.6 L1699.7 268.8 L1701.1 261.4 L1702.5 257.6 L1703.7 257.6 L1704.9 258.4 L1706.2 258.1 L1707.4 259.6 L1708.6 260.1 L1709.3 257.2 L1710.0 253.4 L1710.8 249.7 L1711.5 248.1 L1712.2 247.0 L1713.0 249.6 L1713.8 253.3 L1714.7 256.8 L1715.5 261.6 L1716.3 265.3 L1717.7 272.4 L1719.1 285.2 L1720.5 298.2 L1721.9 308.7 L1723.3 312.4 L1724.7 313.6 L1726.1 309.1 L1727.4 305.0 L1728.8 301.8 L1730.2 298.0 L1731.3 298.4 L1732.4 301.8 L1733.5 302.1 L1734.6 303.3 L1735.7 303.5 L1738.3 296.6 L1740.9 282.4 L1743.6 269.3 L1746.2 257.8 L1748.8 252.0 L1750.1 253.0 L1751.3 259.4 L1752.6 267.4 L1753.8 272.5 L1755.1 277.0 L1757.3 281.6 L1759.5 290.1 L1761.8 299.8 L1764.0 305.6 L1766.2 311.2 L1767.4 310.1 L1768.6 304.2 L1769.9 301.7 L1771.1 296.3 L1772.3 295.7 L1773.9 297.6 L1775.4 300.7 L1777.0 306.8 L1778.5 311.2 L1780.1 313.8 L1780.9 311.6 L1781.7 310.6 L1782.6 308.2 L1783.4 304.9 L1784.2 303.4 L1785.0 302.8 L1785.9 305.3 L1786.7 306.7 L1787.6 309.1 L1788.4 309.3 L1789.5 306.9 L1790.6 301.9 L1791.7 298.5 L1792.8 294.5 L1793.9 291.4 L1795.0 293.7 L1796.1 295.1 L1797.2 296.0 L1798.3 299.9 L1799.4 298.2 L1800.8 295.4 L1802.2 290.0 L1803.6 282.4 L1805.0 276.5 L1806.4 274.6 L1808.1 277.7 L1809.7 285.2 L1811.4 294.4 L1813.0 302.7 L1814.7 309.4 L1815.5 310.1 L1816.3 309.5 L1817.2 309.7 L1818.0 308.4 L1818.8 308.2 L1820.5 310.3 L1822.1 314.6 L1823.8 315.8 L1825.4 319.9 L1827.1 320.6 L1827.9 321.8 L1828.8 319.9 L1829.6 318.5 L1830.5 317.1 L1831.3 315.8 L1832.8 310.8 L1834.3 300.2 L1835.8 291.0 L1837.3 280.3 L1838.8 276.4 L1840.1 276.9 L1841.4 280.6 L1842.6 287.2 L1843.9 291.6 L1845.2 292.8 L1845.7 292.9 L1846.3 293.0 L1846.8 293.2 L1847.4 293.0 L1847.9 292.8 L1849.3 294.7 L1850.7 297.5 L1852.0 302.5 L1853.4 305.8 L1854.8 308.9 L1855.6 309.2 L1856.5 307.8 L1857.3 307.3 L1858.2 308.2 L1859.0 306.2 L1859.8 309.0 L1860.7 310.7 L1861.5 312.7 L1862.4 312.9 L1863.2 314.3" class="ol" stroke-width="2.6"/><path d="M1060.5 338.4 L1061.2 339.8 L1061.9 341.2 L1062.5 343.8 L1063.2 345.6 L1063.9 345.1 L1065.8 346.6 L1067.7 350.9 L1069.7 351.6 L1071.6 353.2 L1073.5 355.8 L1074.9 353.5 L1076.3 352.1 L1077.7 348.5 L1079.1 346.5 L1080.5 343.9 L1081.6 345.1 L1082.7 346.1 L1083.8 345.7 L1084.9 346.8 L1086.0 346.6 L1087.1 344.4 L1088.2 344.8 L1089.4 342.7 L1090.5 340.7 L1091.6 339.5 L1093.8 342.5 L1096.0 343.3 L1098.2 346.1 L1100.4 348.2 L1102.6 348.2 L1105.4 346.8 L1108.2 341.7 L1110.9 338.3 L1113.7 333.4 L1116.5 332.1 L1118.3 330.7 L1120.0 326.9 L1121.8 325.3 L1123.5 324.5 L1125.3 326.6 L1127.7 328.8 L1130.1 336.0 L1132.5 342.8 L1134.9 349.9 L1137.3 352.8 L1139.0 352.0 L1140.6 349.8 L1142.3 346.2 L1143.9 343.7 L1145.6 341.2 L1147.0 341.0 L1148.4 340.0 L1149.7 339.6 L1151.1 338.3 L1152.5 337.0 L1154.2 340.0 L1155.8 342.4 L1157.5 344.8 L1159.1 346.3 L1160.8 348.2 L1162.7 348.4 L1164.7 352.2 L1166.6 353.8 L1168.6 354.8 L1170.5 354.8 L1172.2 355.4 L1173.8 352.6 L1175.5 346.6 L1177.1 345.5 L1178.8 343.2 L1181.6 343.7 L1184.4 347.1 L1187.1 351.9 L1189.9 355.3 L1192.7 354.7 L1194.6 356.0 L1196.6 353.5 L1198.5 353.8 L1200.5 351.2 L1202.4 351.4 L1203.9 349.9 L1205.5 345.5 L1207.0 343.3 L1208.6 338.6 L1210.1 336.8 L1211.3 339.2 L1212.5 340.5 L1213.8 344.1 L1215.0 347.5 L1216.2 349.3 L1218.4 347.8 L1220.6 346.3 L1222.9 346.9 L1225.1 343.9 L1227.3 344.6 L1230.1 343.3 L1232.8 340.2 L1235.6 338.6 L1238.3 337.5 L1241.1 337.7 L1243.3 339.4 L1245.5 343.0 L1247.8 347.5 L1250.0 352.2 L1252.2 353.1 L1253.6 352.8 L1255.0 352.5 L1256.3 349.9 L1257.7 348.9 L1259.1 350.2 L1260.8 349.8 L1262.5 351.6 L1264.1 352.0 L1265.8 354.3 L1267.5 354.7 L1269.4 350.3 L1271.3 346.1 L1273.3 339.5 L1275.2 332.0 L1277.1 329.9 L1278.2 328.5 L1279.3 328.1 L1280.5 326.5 L1281.6 327.1 L1282.7 327.4 L1284.4 327.7 L1286.0 331.7 L1287.7 337.8 L1289.3 342.5 L1291.0 342.8 L1293.8 344.9 L1296.5 346.9 L1299.3 347.7 L1302.0 348.7 L1304.8 348.5 L1305.9 347.3 L1307.0 345.0 L1308.2 340.7 L1309.3 337.3 L1310.4 335.8 L1311.8 329.9 L1313.2 324.9 L1314.5 318.3 L1315.9 311.3 L1317.3 308.1 L1319.2 309.4 L1321.2 309.4 L1323.1 311.2 L1325.1 313.1 L1327.0 313.5 L1328.7 308.0 L1330.3 300.9 L1332.0 292.1 L1333.6 285.8 L1335.3 280.9 L1336.5 282.7 L1337.8 283.8 L1339.0 288.0 L1340.3 292.0 L1341.5 293.8 L1343.6 290.8 L1345.8 286.2 L1347.9 281.1 L1350.1 277.9 L1352.2 274.8 L1353.3 276.7 L1354.4 278.2 L1355.5 278.2 L1356.6 279.9 L1357.7 281.9 L1358.8 281.2 L1359.9 280.8 L1361.0 278.2 L1362.1 275.7 L1363.2 273.7 L1364.8 266.5 L1366.3 250.4 L1367.9 234.1 L1369.4 220.2 L1371.0 213.0 L1371.9 213.8 L1372.9 219.5 L1373.8 223.6 L1374.8 229.4 L1375.7 236.6 L1376.8 243.5 L1377.9 255.3 L1379.0 266.8 L1380.1 279.6 L1381.2 286.4 L1382.3 289.2 L1383.4 296.4 L1384.6 302.5 L1385.7 306.7 L1386.8 308.8 L1388.7 309.8 L1390.7 311.2 L1392.6 311.7 L1394.6 311.8 L1396.5 313.2 L1397.6 311.9 L1398.7 312.0 L1399.8 308.5 L1400.9 309.3 L1402.0 307.9 L1404.2 306.9 L1406.4 304.6 L1408.7 302.1 L1410.9 299.1 L1413.1 296.4 L1415.9 297.4 L1418.7 294.7 L1421.4 293.9 L1424.2 294.1 L1427.0 293.7 L1429.2 294.4 L1431.4 298.0 L1433.6 299.8 L1435.8 301.5 L1438.0 302.7 L1439.7 304.8 L1441.3 304.3 L1443.0 305.6 L1444.6 305.1 L1446.3 305.2 L1448.2 307.5 L1450.2 310.7 L1452.1 311.7 L1454.1 315.5 L1456.0 316.8 L1457.9 316.0 L1459.9 314.6 L1461.8 310.6 L1463.8 310.4 L1465.7 309.7 L1467.4 306.4 L1469.0 304.9 L1470.7 302.8 L1472.3 301.9 L1474.0 301.1 L1475.4 302.7 L1476.8 306.6 L1478.2 308.3 L1479.6 311.7 L1481.0 313.3 L1482.7 313.0 L1484.3 311.6 L1486.0 312.1 L1487.6 309.9 L1489.3 306.3 L1491.2 304.4 L1493.2 299.0 L1495.1 293.4 L1497.1 288.8 L1499.0 287.0 L1500.1 286.9 L1501.2 287.3 L1502.3 288.4 L1503.4 290.4 L1504.5 291.2 L1505.6 294.5 L1506.7 298.7 L1507.8 302.0 L1508.9 304.6 L1510.0 306.6 L1510.8 306.4 L1511.7 304.9 L1512.5 302.8 L1513.4 299.6 L1514.2 299.9 L1516.1 300.6 L1518.1 302.7 L1520.0 305.6 L1522.0 308.7 L1523.9 310.7 L1525.3 310.8 L1526.7 312.4 L1528.0 312.4 L1529.4 311.5 L1530.8 310.3 L1532.5 301.9 L1534.1 284.2 L1535.8 267.2 L1537.4 252.5 L1539.1 247.5 L1540.8 253.4 L1542.5 266.1 L1544.1 284.8 L1545.8 299.9 L1547.5 306.8 L1549.2 309.0 L1550.8 308.0 L1552.5 308.7 L1554.1 307.0 L1555.8 307.0 L1556.9 307.7 L1558.0 309.3 L1559.1 311.2 L1560.2 311.2 L1561.3 307.8 L1563.2 293.7 L1565.2 265.5 L1567.1 235.7 L1569.1 212.0 L1571.0 197.6 L1572.4 201.0 L1573.8 212.5 L1575.1 229.7 L1576.5 242.2 L1577.9 250.8 L1579.0 258.5 L1580.1 264.6 L1581.3 274.8 L1582.4 281.1 L1583.5 284.8 L1584.9 284.2 L1586.3 279.7 L1587.6 275.9 L1589.0 270.1 L1590.4 270.7 L1592.3 272.5 L1594.3 278.3 L1596.2 283.1 L1598.2 290.6 L1600.1 294.7 L1602.4 296.0 L1604.7 301.6 L1606.9 307.6 L1609.2 312.7 L1611.5 313.6 L1612.9 313.7 L1614.3 313.3 L1615.7 313.3 L1617.1 312.6 L1618.5 310.7 L1621.2 307.8 L1623.9 303.3 L1626.5 298.0 L1629.2 294.0 L1631.9 291.1 L1633.6 293.2 L1635.2 297.1 L1636.9 299.1 L1638.5 303.3 L1640.2 303.8 L1641.9 307.1 L1643.5 310.0 L1645.2 312.7 L1646.8 314.6 L1648.5 315.7 L1649.9 315.5 L1651.3 314.5 L1652.6 310.5 L1654.0 308.5 L1655.4 309.4 L1657.1 311.0 L1658.7 312.5 L1660.4 314.9 L1662.0 316.7 L1663.7 313.5 L1665.9 301.9 L1668.1 280.5 L1670.4 256.9 L1672.6 234.3 L1674.8 220.9 L1675.9 219.0 L1677.0 217.2 L1678.1 213.7 L1679.2 213.8 L1680.3 213.0 L1681.1 215.6 L1682.0 218.2 L1682.8 221.6 L1683.7 225.7 L1684.5 228.7 L1685.9 238.3 L1687.3 251.7 L1688.6 266.4 L1690.0 280.1 L1691.4 287.5 L1692.2 290.1 L1693.1 288.7 L1693.9 290.2 L1694.8 287.8 L1695.6 286.9 L1697.0 282.5 L1698.4 276.6 L1699.7 268.8 L1701.1 261.4 L1702.5 257.6 L1703.7 257.6 L1704.9 258.4 L1706.2 258.1 L1707.4 259.6 L1708.6 260.1 L1709.3 257.2 L1710.0 253.4 L1710.8 249.7 L1711.5 248.1 L1712.2 247.0 L1713.0 249.6 L1713.8 253.3 L1714.7 256.8 L1715.5 261.6 L1716.3 265.3 L1717.7 272.4 L1719.1 285.2 L1720.5 298.2 L1721.9 308.7 L1723.3 312.4 L1724.7 313.6 L1726.1 309.1 L1727.4 305.0 L1728.8 301.8 L1730.2 298.0 L1731.3 298.4 L1732.4 301.8 L1733.5 302.1 L1734.6 303.3 L1735.7 303.5 L1738.3 296.6 L1740.9 282.4 L1743.6 269.3 L1746.2 257.8 L1748.8 252.0 L1750.1 253.0 L1751.3 259.4 L1752.6 267.4 L1753.8 272.5 L1755.1 277.0 L1757.3 281.6 L1759.5 290.1 L1761.8 299.8 L1764.0 305.6 L1766.2 311.2 L1767.4 310.1 L1768.6 304.2 L1769.9 301.7 L1771.1 296.3 L1772.3 295.7 L1773.9 297.6 L1775.4 300.7 L1777.0 306.8 L1778.5 311.2 L1780.1 313.8 L1780.9 311.6 L1781.7 310.6 L1782.6 308.2 L1783.4 304.9 L1784.2 303.4 L1785.0 302.8 L1785.9 305.3 L1786.7 306.7 L1787.6 309.1 L1788.4 309.3 L1789.5 306.9 L1790.6 301.9 L1791.7 298.5 L1792.8 294.5 L1793.9 291.4 L1795.0 293.7 L1796.1 295.1 L1797.2 296.0 L1798.3 299.9 L1799.4 298.2 L1800.8 295.4 L1802.2 290.0 L1803.6 282.4 L1805.0 276.5 L1806.4 274.6 L1808.1 277.7 L1809.7 285.2 L1811.4 294.4 L1813.0 302.7 L1814.7 309.4 L1815.5 310.1 L1816.3 309.5 L1817.2 309.7 L1818.0 308.4 L1818.8 308.2 L1820.5 310.3 L1822.1 314.6 L1823.8 315.8 L1825.4 319.9 L1827.1 320.6 L1827.9 321.8 L1828.8 319.9 L1829.6 318.5 L1830.5 317.1 L1831.3 315.8 L1832.8 310.8 L1834.3 300.2 L1835.8 291.0 L1837.3 280.3 L1838.8 276.4 L1840.1 276.9 L1841.4 280.6 L1842.6 287.2 L1843.9 291.6 L1845.2 292.8 L1845.7 292.9 L1846.3 293.0 L1846.8 293.2 L1847.4 293.0 L1847.9 292.8 L1849.3 294.7 L1850.7 297.5 L1852.0 302.5 L1853.4 305.8 L1854.8 308.9 L1855.6 309.2 L1856.5 307.8 L1857.3 307.3 L1858.2 308.2 L1859.0 306.2 L1859.8 309.0 L1860.7 310.7 L1861.5 312.7 L1862.4 312.9 L1863.2 314.3" class="ol2" stroke-width="1.1"/><text class="ax a2" x="1052.5" y="159.4" text-anchor="end">300ms</text><text class="ax a2" x="1052.5" y="210.0" text-anchor="end">250ms</text><text class="ax a2" x="1052.5" y="261.0" text-anchor="end">200ms</text><text class="ax a2" x="1052.5" y="312.0" text-anchor="end">150ms</text><text class="ax a2" x="1052.5" y="363.0" text-anchor="end">100ms</text><text class="ax a2" x="1052.5" y="414.0" text-anchor="end">50ms</text><text class="ax a2" x="1052.5" y="465.4" text-anchor="end">0 ms</text><text class="ax" x="1101.7" y="484.2" text-anchor="middle">18:00</text><text class="ax" x="1222.8" y="484.2" text-anchor="middle">18:30</text><text class="ax" x="1343.3" y="484.2" text-anchor="middle">10:00</text><text class="ax" x="1463.5" y="484.2" text-anchor="middle">12:30</text><text class="ax" x="1583.2" y="484.2" text-anchor="middle">14:00</text><text class="ax" x="1703.8" y="484.2" text-anchor="middle">12:00</text><text class="ax" x="1823.7" y="484.2" text-anchor="middle">12:00</text>
    <g fill="#77787b"><rect x="1889.500" y="523" width="2" height="2"/><rect x="1889.500" y="527" width="2" height="2"/><rect x="1885.500" y="527" width="2" height="2"/></g>
  </svg>
  <div class="ptitle" style="letter-spacing:0.26px">Response Time Percentiles</div>
  <div class="legend" style="left:23.500px;top:405.800px"><i style="background:#f7ac4a"></i><b>p99</b><i style="background:#93c98b"></i><b>p95</b></div>
</div>

<!-- Panel 3 -->
<div class="panel" style="left:99px;top:550px;width:875px;height:487px">
  <div class="corner"></div>
  <svg width="875" height="487" viewBox="99 550 875 487">
    <circle cx="110.3" cy="556.5" r="1.75" fill="#a3a4a6"/><circle cx="110.3" cy="560.4" r="1.75" fill="#a3a4a6"/><circle cx="110.3" cy="564.3" r="1.75" fill="#a3a4a6"/>
    <g stroke="rgba(255,255,255,0.17)" stroke-width="1.4"><line x1="151.0" y1="610.2" x2="942.6" y2="610.2"/><line x1="151.0" y1="679.5" x2="942.6" y2="679.5"/><line x1="151.0" y1="750.5" x2="942.6" y2="750.5"/><line x1="151.0" y1="821.1" x2="942.6" y2="821.1"/><line x1="151.0" y1="891.7" x2="942.6" y2="891.7"/><line x1="151.0" y1="962.8" x2="942.6" y2="962.8"/><line x1="195.5" y1="610.2" x2="195.5" y2="962.8"/><line x1="313.5" y1="610.2" x2="313.5" y2="962.8"/><line x1="431.0" y1="610.2" x2="431.0" y2="962.8"/><line x1="548.5" y1="610.2" x2="548.5" y2="962.8"/><line x1="666.0" y1="610.2" x2="666.0" y2="962.8"/><line x1="784.0" y1="610.2" x2="784.0" y2="962.8"/><line x1="902.0" y1="610.2" x2="902.0" y2="962.8"/></g><rect x="151.4" y="821.1" width="13.4" height="70.6" fill="#de4b35"/><rect x="151.4" y="891.7" width="13.4" height="71.1" fill="#f0a42f"/><rect x="171.0" y="821.1" width="13.4" height="70.6" fill="#de4b35"/><rect x="171.0" y="891.7" width="13.4" height="71.1" fill="#f0a42f"/><rect x="190.6" y="821.1" width="13.4" height="70.6" fill="#de4b35"/><rect x="190.6" y="891.7" width="13.4" height="71.1" fill="#f0a42f"/><rect x="210.2" y="821.1" width="13.4" height="70.6" fill="#de4b35"/><rect x="210.2" y="891.7" width="13.4" height="71.1" fill="#f0a42f"/><rect x="229.8" y="821.1" width="13.4" height="70.6" fill="#de4b35"/><rect x="229.8" y="891.7" width="13.4" height="71.1" fill="#f0a42f"/><rect x="249.4" y="821.1" width="13.4" height="70.6" fill="#de4b35"/><rect x="249.4" y="891.7" width="13.4" height="71.1" fill="#f0a42f"/><rect x="269.0" y="821.1" width="13.4" height="70.6" fill="#de4b35"/><rect x="269.0" y="891.7" width="13.4" height="71.1" fill="#f0a42f"/><rect x="288.6" y="821.1" width="13.4" height="70.6" fill="#de4b35"/><rect x="288.6" y="891.7" width="13.4" height="71.1" fill="#f0a42f"/><rect x="308.2" y="821.1" width="13.4" height="70.6" fill="#de4b35"/><rect x="308.2" y="891.7" width="13.4" height="71.1" fill="#f0a42f"/><rect x="327.8" y="821.1" width="13.4" height="70.6" fill="#de4b35"/><rect x="327.8" y="891.7" width="13.4" height="71.1" fill="#f0a42f"/><rect x="347.4" y="821.1" width="13.4" height="70.6" fill="#de4b35"/><rect x="347.4" y="891.7" width="13.4" height="71.1" fill="#f0a42f"/><rect x="366.9" y="821.1" width="13.4" height="70.6" fill="#de4b35"/><rect x="366.9" y="891.7" width="13.4" height="71.1" fill="#f0a42f"/><rect x="386.5" y="821.1" width="13.4" height="70.6" fill="#de4b35"/><rect x="386.5" y="891.7" width="13.4" height="71.1" fill="#f0a42f"/><rect x="406.1" y="821.1" width="13.4" height="70.6" fill="#de4b35"/><rect x="406.1" y="891.7" width="13.4" height="71.1" fill="#f0a42f"/><rect x="425.7" y="821.1" width="13.4" height="70.6" fill="#de4b35"/><rect x="425.7" y="891.7" width="13.4" height="71.1" fill="#f0a42f"/><rect x="445.3" y="750.5" width="13.4" height="70.6" fill="#de4b35"/><rect x="445.3" y="821.1" width="13.4" height="141.7" fill="#f0a42f"/><rect x="464.9" y="750.5" width="13.4" height="70.6" fill="#de4b35"/><rect x="464.9" y="821.1" width="13.4" height="141.7" fill="#f0a42f"/><rect x="484.5" y="750.5" width="13.4" height="70.6" fill="#de4b35"/><rect x="484.5" y="821.1" width="13.4" height="141.7" fill="#f0a42f"/><rect x="504.1" y="821.1" width="13.4" height="70.6" fill="#de4b35"/><rect x="504.1" y="891.7" width="13.4" height="71.1" fill="#f0a42f"/><rect x="523.7" y="821.1" width="13.4" height="70.6" fill="#de4b35"/><rect x="523.7" y="891.7" width="13.4" height="71.1" fill="#f0a42f"/><rect x="543.2" y="821.1" width="13.4" height="70.6" fill="#de4b35"/><rect x="543.2" y="891.7" width="13.4" height="71.1" fill="#f0a42f"/><rect x="562.8" y="821.1" width="13.4" height="70.6" fill="#de4b35"/><rect x="562.8" y="891.7" width="13.4" height="71.1" fill="#f0a42f"/><rect x="582.4" y="821.1" width="13.4" height="70.6" fill="#de4b35"/><rect x="582.4" y="891.7" width="13.4" height="71.1" fill="#f0a42f"/><rect x="602.0" y="821.1" width="13.4" height="70.6" fill="#de4b35"/><rect x="602.0" y="891.7" width="13.4" height="71.1" fill="#f0a42f"/><rect x="621.6" y="821.1" width="13.4" height="70.6" fill="#de4b35"/><rect x="621.6" y="891.7" width="13.4" height="71.1" fill="#f0a42f"/><rect x="641.2" y="821.1" width="13.4" height="70.6" fill="#de4b35"/><rect x="641.2" y="891.7" width="13.4" height="71.1" fill="#f0a42f"/><rect x="660.8" y="821.1" width="13.4" height="70.6" fill="#de4b35"/><rect x="660.8" y="891.7" width="13.4" height="71.1" fill="#f0a42f"/><rect x="680.4" y="821.1" width="13.4" height="70.6" fill="#de4b35"/><rect x="680.4" y="891.7" width="13.4" height="71.1" fill="#f0a42f"/><rect x="700.0" y="821.1" width="13.4" height="70.6" fill="#de4b35"/><rect x="700.0" y="891.7" width="13.4" height="71.1" fill="#f0a42f"/><rect x="719.6" y="821.1" width="13.4" height="70.6" fill="#de4b35"/><rect x="719.6" y="891.7" width="13.4" height="71.1" fill="#f0a42f"/><rect x="739.2" y="821.1" width="13.4" height="70.6" fill="#de4b35"/><rect x="739.2" y="891.7" width="13.4" height="71.1" fill="#f0a42f"/><rect x="758.7" y="821.1" width="13.4" height="70.6" fill="#de4b35"/><rect x="758.7" y="891.7" width="13.4" height="71.1" fill="#f0a42f"/><rect x="778.3" y="821.1" width="13.4" height="70.6" fill="#de4b35"/><rect x="778.3" y="891.7" width="13.4" height="71.1" fill="#f0a42f"/><rect x="797.9" y="821.1" width="13.4" height="70.6" fill="#de4b35"/><rect x="797.9" y="891.7" width="13.4" height="71.1" fill="#f0a42f"/><rect x="817.5" y="821.1" width="13.4" height="70.6" fill="#de4b35"/><rect x="817.5" y="891.7" width="13.4" height="71.1" fill="#f0a42f"/><rect x="837.1" y="821.1" width="13.4" height="70.6" fill="#de4b35"/><rect x="837.1" y="891.7" width="13.4" height="71.1" fill="#f0a42f"/><rect x="856.7" y="750.5" width="13.4" height="70.6" fill="#de4b35"/><rect x="856.7" y="821.1" width="13.4" height="141.7" fill="#f0a42f"/><rect x="876.3" y="679.5" width="13.4" height="71.0" fill="#de4b35"/><rect x="876.3" y="750.5" width="13.4" height="212.3" fill="#f0a42f"/><rect x="895.9" y="821.1" width="13.4" height="70.6" fill="#de4b35"/><rect x="895.9" y="891.7" width="13.4" height="71.1" fill="#f0a42f"/><rect x="915.5" y="943.5" width="13.4" height="19.3" fill="#de4b35"/><text class="ax" x="143.5" y="615.8" text-anchor="end" letter-spacing="-0.9">5.%</text><text class="ax" x="143.5" y="685.1" text-anchor="end" letter-spacing="-0.9">4%</text><text class="ax" x="143.5" y="756.1" text-anchor="end" letter-spacing="-0.9">2%</text><text class="ax" x="143.5" y="826.7" text-anchor="end" letter-spacing="-0.9">1%</text><text class="ax" x="143.5" y="897.3" text-anchor="end" letter-spacing="-0.9">0.5%</text><text class="ax" x="143.5" y="968.4" text-anchor="end" letter-spacing="-0.9">0%</text><text class="ax" x="195.5" y="986.5" text-anchor="middle">12:00</text><text class="ax" x="313.5" y="986.5" text-anchor="middle">18:30</text><text class="ax" x="431.0" y="986.5" text-anchor="middle">18:00</text><text class="ax" x="548.5" y="986.5" text-anchor="middle">18:30</text><text class="ax" x="666.0" y="986.5" text-anchor="middle">18:00</text><text class="ax" x="784.0" y="986.5" text-anchor="middle">18:00</text><text class="ax" x="902.0" y="986.5" text-anchor="middle">18:00</text>
    <g fill="#77787b"><rect x="968.500" y="1026" width="2" height="2"/><rect x="968.500" y="1030" width="2" height="2"/><rect x="964.500" y="1030" width="2" height="2"/></g>
  </svg>
  <div class="ptitle">Error Rates</div>
  <div class="legend" style="left:22.500px;top:452.500px;word-spacing:0"><i style="background:#f0a42f"></i><b style="margin-right:12.5px">4xx</b><i style="background:#de4b35"></i><b>5xx</b></div>
</div>

<!-- Panel 4 -->
<div class="panel" style="left:990px;top:550px;width:905px;height:500px">
  <svg width="905" height="497" viewBox="990 550 905 497">
    <path d="M1042.6 929.8 L1044.1 921.2 L1045.4 911.9 L1047.1 923.9 L1048.6 931.8 L1050.6 942.9 L1051.6 938.8 L1053.1 939.3 L1054.6 940.1 L1056.1 936.8 L1057.5 934.9 L1059.1 935.2 L1060.6 939.6 L1062.1 941.0 L1063.6 945.1 L1065.5 948.2 L1066.6 944.6 L1068.1 944.3 L1069.6 943.3 L1071.1 945.3 L1072.6 943.2 L1074.1 938.7 L1075.8 939.4 L1077.1 936.9 L1078.6 939.0 L1080.1 936.2 L1081.6 935.2 L1083.1 939.5 L1084.6 935.7 L1086.1 935.5 L1087.3 937.3 L1089.1 937.4 L1090.6 933.3 L1092.1 935.7 L1093.6 932.5 L1095.2 932.2 L1096.7 928.7 L1098.8 929.3 L1099.7 930.7 L1101.2 933.9 L1102.7 935.4 L1104.5 935.2 L1105.7 934.2 L1107.2 932.3 L1108.7 931.4 L1110.2 930.2 L1111.7 930.6 L1113.2 931.4 L1114.7 927.4 L1116.2 930.1 L1117.1 928.5 L1119.2 926.7 L1120.7 928.5 L1122.2 926.0 L1124.0 925.0 L1125.2 926.5 L1126.7 929.4 L1128.2 927.8 L1129.7 934.4 L1130.8 932.6 L1132.7 935.8 L1134.2 937.2 L1135.7 933.9 L1137.2 938.9 L1138.7 937.7 L1140.2 939.8 L1141.2 939.5 L1143.2 934.1 L1144.7 932.1 L1146.2 933.4 L1146.9 929.4 L1147.7 931.6 L1149.2 933.4 L1150.7 934.3 L1152.2 932.0 L1153.7 933.0 L1154.9 934.4 L1156.7 934.5 L1158.2 930.0 L1159.7 932.3 L1161.2 931.4 L1162.9 929.2 L1164.2 930.2 L1165.7 939.4 L1167.5 941.9 L1168.7 938.2 L1170.2 935.5 L1172.1 930.3 L1173.2 931.2 L1174.7 937.3 L1176.7 939.1 L1177.7 936.7 L1179.2 934.9 L1181.3 932.8 L1182.2 932.9 L1183.7 936.3 L1184.7 940.3 L1186.7 936.1 L1188.2 926.9 L1189.3 924.6 L1191.2 933.1 L1192.7 934.8 L1193.9 937.7 L1195.7 933.4 L1197.3 932.8 L1198.8 931.5 L1200.8 926.3 L1201.8 927.6 L1203.3 928.2 L1204.2 932.6 L1206.3 927.6 L1207.8 928.5 L1209.3 928.8 L1211.1 924.7 L1212.3 927.0 L1213.8 928.9 L1215.3 928.0 L1216.8 929.6 L1217.9 928.2 L1219.8 925.7 L1221.3 922.0 L1222.8 923.5 L1224.3 918.5 L1225.8 917.2 L1227.3 917.9 L1228.3 914.3 L1230.3 924.3 L1231.7 927.4 L1233.3 927.4 L1234.8 928.7 L1236.3 927.5 L1237.8 929.9 L1239.3 934.0 L1240.8 936.1 L1242.3 940.8 L1243.2 944.2 L1245.3 941.5 L1246.8 936.5 L1248.3 932.6 L1249.8 928.6 L1251.2 925.9 L1252.8 928.8 L1254.3 934.8 L1255.8 937.2 L1257.3 934.2 L1258.8 934.5 L1260.3 932.7 L1261.5 930.1 L1263.3 931.5 L1264.8 932.8 L1266.3 931.5 L1268.4 933.5 L1269.3 933.1 L1270.8 935.9 L1272.3 939.1 L1273.8 940.4 L1275.3 940.1 L1276.4 943.0 L1278.3 940.1 L1279.8 937.3 L1281.3 931.9 L1282.1 933.3 L1282.8 932.7 L1284.3 936.7 L1285.8 937.3 L1287.3 940.9 L1288.8 941.7 L1290.1 942.8 L1291.8 938.6 L1293.3 937.5 L1294.7 934.7 L1296.3 938.0 L1297.8 937.3 L1299.4 941.6 L1300.9 943.5 L1301.6 942.6 L1302.4 943.5 L1303.9 940.7 L1305.4 935.7 L1307.3 932.1 L1308.4 933.3 L1309.9 940.9 L1311.5 944.2 L1312.9 940.6 L1314.4 938.5 L1315.9 935.4 L1316.9 932.4 L1318.9 930.7 L1320.4 934.1 L1321.9 933.3 L1323.8 933.4 L1324.9 933.3 L1326.4 935.2 L1327.9 936.7 L1329.4 936.8 L1330.6 937.0 L1332.4 934.2 L1333.9 934.9 L1335.4 936.4 L1337.5 936.9 L1338.4 933.6 L1339.9 933.2 L1341.4 930.1 L1342.9 924.3 L1344.4 923.7 L1345.5 921.4 L1347.4 922.3 L1348.9 925.0 L1350.1 928.5 L1351.9 924.5 L1353.4 922.4 L1354.9 919.5 L1355.8 920.6 L1357.9 917.9 L1359.4 917.6 L1360.9 916.0 L1362.4 912.7 L1363.9 914.7 L1365.0 910.9 L1366.9 912.7 L1368.4 913.3 L1369.9 915.3 L1371.4 915.0 L1373.0 918.8 L1374.4 919.4 L1375.9 919.4 L1377.4 924.2 L1378.8 924.7 L1380.4 920.9 L1381.9 915.7 L1383.4 912.8 L1384.9 910.6 L1386.4 905.7 L1387.9 899.9 L1389.4 900.6 L1390.9 898.7 L1392.4 896.3 L1393.9 894.1 L1394.8 895.5 L1396.9 881.0 L1398.4 872.7 L1399.9 862.5 L1401.4 850.3 L1402.4 843.0 L1404.5 868.6 L1406.0 881.0 L1407.4 899.5 L1409.0 908.8 L1410.8 918.5 L1412.0 918.0 L1413.5 922.5 L1415.0 925.8 L1416.5 925.0 L1418.0 927.3 L1419.5 928.1 L1421.0 930.4 L1422.3 933.8 L1424.0 930.9 L1425.5 932.4 L1427.0 930.7 L1428.0 927.6 L1430.0 926.9 L1431.5 931.2 L1433.0 929.1 L1434.9 929.7 L1436.0 930.5 L1437.5 936.2 L1439.0 935.9 L1440.5 937.1 L1442.0 940.3 L1444.1 943.1 L1445.0 943.6 L1446.5 941.7 L1448.0 939.9 L1449.5 941.4 L1451.0 940.7 L1452.5 935.4 L1454.4 936.7 L1455.5 936.4 L1457.0 941.1 L1458.5 941.5 L1460.1 941.0 L1461.5 938.2 L1463.0 935.6 L1464.5 938.0 L1466.0 932.3 L1467.0 932.2 L1469.0 935.0 L1470.5 938.1 L1471.6 939.1 L1473.5 938.7 L1475.0 934.3 L1476.5 936.4 L1477.3 934.1 L1478.0 935.3 L1479.5 935.8 L1481.0 937.1 L1481.9 939.0 L1484.0 933.5 L1485.5 929.2 L1486.5 927.8 L1488.5 928.4 L1490.0 925.8 L1492.2 928.4 L1493.0 927.6 L1494.5 928.5 L1496.0 926.9 L1497.5 923.6 L1499.0 919.3 L1499.8 921.5 L1500.5 921.8 L1502.0 924.9 L1503.5 927.8 L1505.1 929.7 L1507.1 932.1 L1508.1 935.2 L1509.6 934.0 L1511.1 935.5 L1512.6 939.4 L1514.1 937.5 L1515.6 939.5 L1516.3 941.7 L1517.1 938.3 L1518.6 940.8 L1520.1 938.5 L1521.6 935.7 L1523.2 934.1 L1524.6 935.4 L1526.1 935.6 L1527.6 931.1 L1529.1 932.3 L1530.0 932.2 L1532.1 931.8 L1533.6 930.6 L1535.1 929.5 L1536.9 931.1 L1538.1 930.0 L1539.6 922.8 L1541.1 920.4 L1542.6 920.1 L1544.2 915.3 L1545.6 920.5 L1547.1 922.4 L1548.6 931.2 L1549.5 933.8 L1551.6 933.2 L1553.1 929.8 L1554.1 926.9 L1556.1 930.7 L1557.6 928.5 L1559.1 931.8 L1560.6 934.5 L1562.1 933.5 L1563.6 930.6 L1565.1 930.8 L1566.6 933.3 L1568.1 928.7 L1569.6 930.4 L1571.1 928.7 L1572.6 926.7 L1574.7 927.7 L1575.6 926.6 L1577.1 929.3 L1578.6 933.1 L1580.5 936.1 L1581.6 933.1 L1583.1 934.2 L1584.6 933.4 L1586.1 932.4 L1587.6 926.8 L1589.1 926.7 L1590.8 925.0 L1592.1 928.4 L1593.6 930.8 L1595.4 935.0 L1596.6 931.9 L1598.1 928.0 L1599.6 929.0 L1601.5 924.7 L1602.6 922.7 L1604.1 917.8 L1605.6 915.7 L1607.2 909.3 L1608.7 915.8 L1610.2 920.2 L1611.7 927.9 L1613.2 932.6 L1614.1 938.1 L1616.2 933.0 L1617.7 927.5 L1619.2 924.5 L1620.9 921.6 L1622.2 924.0 L1623.7 922.2 L1625.2 926.1 L1626.7 926.9 L1628.2 925.1 L1630.1 928.9 L1631.2 926.1 L1632.7 925.7 L1634.2 927.5 L1635.8 926.1 L1637.2 930.0 L1638.7 929.6 L1640.2 930.6 L1641.7 934.8 L1642.7 933.8 L1644.7 932.6 L1646.2 926.9 L1647.7 925.1 L1649.6 924.7 L1650.7 923.9 L1652.2 919.9 L1653.7 917.8 L1655.2 920.6 L1656.7 917.4 L1657.6 916.0 L1659.7 917.3 L1661.2 922.3 L1663.3 925.0 L1664.2 925.8 L1665.7 929.6 L1667.2 934.3 L1669.1 937.6 L1670.2 933.3 L1671.7 926.7 L1673.2 925.0 L1674.7 918.7 L1675.9 914.2 L1677.7 909.8 L1679.2 909.0 L1680.7 904.3 L1681.7 902.4 L1683.7 908.4 L1685.2 913.5 L1687.4 918.3 L1688.2 914.3 L1689.7 910.3 L1691.2 907.6 L1693.1 904.0 L1694.2 908.5 L1695.7 908.9 L1697.2 912.8 L1698.7 911.4 L1700.0 916.1 L1701.7 915.9 L1703.2 912.6 L1704.6 910.2 L1706.2 910.6 L1707.7 909.1 L1709.2 909.8 L1710.8 910.3 L1712.6 912.4 L1713.8 915.4 L1715.3 922.4 L1716.1 922.4 L1718.3 919.5 L1719.8 918.1 L1721.3 916.0 L1722.9 915.8 L1724.3 918.1 L1725.8 923.1 L1727.5 926.9 L1728.8 925.9 L1730.3 918.5 L1731.8 917.0 L1733.3 911.2 L1734.4 907.1 L1736.3 913.3 L1737.8 921.0 L1739.3 922.0 L1741.3 931.2 L1742.3 926.6 L1743.8 923.5 L1745.3 918.8 L1746.8 910.7 L1748.8 905.3 L1749.8 905.7 L1751.3 910.5 L1752.8 913.4 L1753.9 918.3 L1755.8 919.6 L1757.3 915.4 L1758.8 914.2 L1760.8 913.8 L1761.8 914.3 L1763.3 919.2 L1764.8 921.6 L1766.3 921.3 L1767.6 924.9 L1769.3 923.4 L1770.8 922.5 L1772.3 918.6 L1773.4 916.0 L1775.3 910.5 L1776.8 899.1 L1778.3 893.0 L1779.1 892.4 L1779.8 892.5 L1781.3 892.7 L1782.8 897.5 L1784.8 900.6 L1785.8 901.9 L1787.3 903.8 L1788.8 905.2 L1790.5 909.7 L1791.8 912.7 L1793.3 911.0 L1795.1 912.1 L1796.3 912.2 L1797.8 916.8 L1799.3 919.4 L1800.8 924.8 L1802.3 926.6 L1803.2 930.7 L1805.3 917.9 L1806.8 908.6 L1807.7 904.0 L1809.8 884.5 L1811.3 877.1 L1812.3 866.4 L1814.4 882.7 L1815.9 893.7 L1816.9 902.3 L1818.9 906.4 L1820.4 912.4 L1821.9 916.2 L1822.6 920.7 L1823.4 922.9 L1824.9 921.4 L1826.4 923.0 L1827.9 919.9 L1829.4 919.1 L1830.7 921.9 L1832.4 923.2 L1833.9 924.9 L1835.4 925.2 L1836.9 927.8 L1838.7 929.0 L1839.9 932.5 L1841.4 931.5 L1842.9 934.3 L1844.4 937.1 L1845.9 934.5 L1847.4 933.2 L1848.9 933.4 L1850.4 931.5 L1851.3 933.6 L1853.4 938.4 L1854.7 938.8 L1856.4 933.7 L1857.9 930.4 L1859.3 929.5 L1860.9 929.2 L1862.4 932.5 L1863.9 934.4 L1863.9 1012.3 L1042.6 1012.3 Z" fill="#45382a"/><path d="M1042.6 981.4 L1044.2 983.1 L1045.8 983.1 L1047.4 983.4 L1049.0 983.6 L1050.6 986.2 L1052.2 986.6 L1053.0 987.3 L1053.8 986.4 L1055.4 986.6 L1057.0 984.5 L1058.6 985.1 L1059.8 983.8 L1061.8 983.7 L1063.4 984.2 L1065.0 984.8 L1066.6 983.7 L1068.2 984.9 L1069.8 985.7 L1071.4 984.5 L1073.0 986.1 L1074.6 986.0 L1076.2 986.6 L1077.8 985.5 L1079.4 985.1 L1081.0 987.1 L1082.6 987.3 L1084.2 986.6 L1085.8 985.9 L1087.3 986.9 L1089.0 986.8 L1090.6 985.3 L1092.2 986.3 L1094.2 984.5 L1095.4 983.7 L1097.0 985.1 L1098.6 984.5 L1100.2 986.1 L1101.8 986.2 L1103.4 985.4 L1105.0 985.9 L1106.6 986.2 L1108.2 986.6 L1109.8 987.2 L1111.4 984.9 L1113.0 985.9 L1114.6 986.7 L1116.2 986.1 L1117.1 986.8 L1117.8 985.6 L1119.4 987.5 L1121.0 986.4 L1122.6 985.2 L1124.2 986.5 L1125.9 985.4 L1127.5 984.9 L1129.1 985.5 L1130.7 984.5 L1132.3 984.5 L1133.9 986.1 L1135.5 985.5 L1137.1 983.6 L1138.7 985.4 L1140.3 983.3 L1141.9 984.0 L1143.5 985.3 L1145.1 984.4 L1146.7 983.4 L1148.3 983.5 L1149.2 983.6 L1151.5 983.2 L1153.1 985.7 L1154.7 983.6 L1156.3 984.8 L1157.9 986.0 L1159.5 985.3 L1161.1 987.2 L1162.7 985.5 L1164.3 987.7 L1165.9 987.8 L1167.5 987.2 L1169.1 987.1 L1170.7 984.8 L1172.3 984.8 L1174.4 982.7 L1175.5 983.1 L1177.1 983.8 L1178.7 985.2 L1180.3 985.2 L1181.3 985.7 L1183.5 985.9 L1185.1 984.1 L1186.7 984.2 L1188.3 984.4 L1189.9 982.3 L1191.5 981.3 L1193.1 981.1 L1195.0 981.5 L1196.3 981.3 L1197.9 981.4 L1199.5 982.2 L1201.1 983.8 L1202.7 982.4 L1204.3 983.1 L1205.9 984.7 L1207.5 984.3 L1209.1 983.8 L1211.1 984.8 L1212.3 984.5 L1213.9 983.2 L1215.5 983.4 L1217.1 982.8 L1218.7 983.7 L1220.3 982.1 L1221.9 982.6 L1223.5 983.0 L1225.1 982.5 L1226.7 980.7 L1228.3 980.9 L1229.9 979.8 L1231.7 979.7 L1233.1 980.3 L1234.7 981.8 L1236.3 982.8 L1237.9 981.7 L1239.5 981.6 L1241.1 983.4 L1243.2 984.1 L1244.3 983.1 L1245.9 985.0 L1247.5 983.3 L1249.1 984.8 L1250.7 983.8 L1252.3 985.3 L1253.9 985.0 L1255.5 982.9 L1257.1 983.2 L1258.7 985.1 L1260.3 984.2 L1261.9 983.7 L1263.5 984.6 L1265.1 984.6 L1266.7 983.7 L1268.4 983.7 L1269.9 983.3 L1271.5 984.7 L1273.1 984.8 L1274.7 986.7 L1276.3 987.4 L1277.5 987.4 L1279.5 987.6 L1281.1 985.9 L1282.7 985.7 L1284.3 986.8 L1285.9 986.0 L1287.5 986.9 L1289.2 985.9 L1290.8 985.8 L1292.4 984.0 L1294.0 985.6 L1295.9 984.1 L1297.2 985.1 L1298.8 986.3 L1300.4 986.7 L1302.0 987.1 L1303.6 986.5 L1305.2 987.5 L1306.8 988.2 L1308.4 987.0 L1309.6 988.6 L1311.6 989.2 L1313.2 987.9 L1314.8 988.6 L1316.4 987.6 L1318.0 987.0 L1319.6 988.0 L1321.2 986.2 L1322.8 988.0 L1324.4 988.3 L1326.0 986.4 L1327.6 988.0 L1329.2 985.6 L1330.8 987.5 L1332.4 985.8 L1334.0 987.5 L1335.6 986.0 L1337.5 986.3 L1338.8 983.9 L1340.4 982.8 L1342.0 983.6 L1343.6 981.9 L1345.5 980.2 L1346.8 980.0 L1348.4 981.6 L1350.0 983.4 L1351.3 984.5 L1353.2 983.7 L1354.8 981.1 L1356.4 979.6 L1358.0 976.9 L1359.6 974.0 L1360.4 973.1 L1361.2 974.0 L1362.8 972.3 L1364.4 973.3 L1366.0 973.0 L1367.6 973.0 L1369.2 971.9 L1370.7 972.6 L1372.4 974.2 L1374.0 974.1 L1375.6 976.5 L1377.6 977.7 L1378.8 976.1 L1380.4 974.2 L1382.0 973.7 L1383.6 971.6 L1385.2 969.6 L1386.8 968.0 L1387.9 967.6 L1390.0 967.5 L1391.6 965.3 L1393.2 963.7 L1394.8 963.2 L1396.0 962.8 L1398.0 953.1 L1399.6 945.7 L1401.2 937.2 L1402.1 932.4 L1404.4 949.0 L1406.0 960.8 L1407.4 971.1 L1409.2 974.2 L1410.8 978.6 L1412.4 980.4 L1414.3 983.8 L1415.6 984.3 L1417.2 984.1 L1418.8 984.5 L1420.4 983.4 L1422.0 984.1 L1423.6 984.9 L1424.6 983.5 L1426.8 984.2 L1428.4 983.7 L1430.0 982.9 L1431.6 983.0 L1433.2 985.0 L1434.9 984.1 L1436.4 985.5 L1438.0 984.4 L1439.6 985.7 L1441.2 985.3 L1442.9 987.1 L1444.4 987.8 L1446.0 986.4 L1447.6 987.3 L1449.2 988.2 L1450.8 986.6 L1452.4 987.0 L1454.1 987.7 L1455.7 988.0 L1457.3 986.2 L1458.9 987.5 L1460.5 986.1 L1461.3 986.8 L1462.1 988.3 L1463.7 985.8 L1465.3 988.0 L1466.9 987.4 L1468.5 987.1 L1470.1 987.2 L1471.7 986.9 L1473.3 985.8 L1474.9 986.1 L1476.5 985.4 L1478.1 987.0 L1479.6 986.2 L1481.3 986.7 L1482.9 985.3 L1484.5 986.2 L1486.1 985.4 L1487.7 986.8 L1489.3 986.6 L1490.9 987.3 L1492.5 986.5 L1493.4 986.1 L1495.7 984.6 L1497.3 981.3 L1498.9 981.1 L1500.7 978.8 L1502.1 979.7 L1503.7 980.1 L1505.3 983.3 L1506.9 981.9 L1508.5 985.3 L1509.4 985.1 L1511.7 985.2 L1513.3 986.6 L1514.9 985.0 L1516.5 985.6 L1518.1 985.6 L1519.7 986.2 L1520.9 987.3 L1522.9 988.0 L1524.5 985.7 L1526.1 986.6 L1527.7 985.4 L1529.3 984.6 L1530.9 985.0 L1532.5 983.9 L1534.1 985.6 L1535.7 983.7 L1536.9 983.8 L1538.9 982.2 L1540.5 981.0 L1542.1 979.3 L1543.8 977.8 L1545.3 979.1 L1546.9 983.3 L1548.5 983.8 L1549.5 986.0 L1551.7 985.3 L1553.3 983.7 L1554.9 983.6 L1556.4 981.6 L1558.1 981.8 L1559.7 981.2 L1561.3 982.8 L1562.9 982.9 L1564.5 984.3 L1566.1 983.8 L1567.7 984.6 L1569.0 984.6 L1570.9 984.4 L1572.5 985.4 L1574.1 985.6 L1575.7 983.7 L1577.3 985.8 L1578.9 985.7 L1580.5 985.0 L1582.1 984.2 L1583.7 983.8 L1585.3 983.3 L1586.9 983.8 L1588.5 984.8 L1590.1 983.4 L1591.7 982.3 L1593.3 982.9 L1594.9 982.1 L1596.5 983.4 L1598.1 983.6 L1599.7 983.8 L1601.5 982.2 L1602.9 980.9 L1604.5 978.9 L1606.1 979.5 L1607.2 977.7 L1609.3 980.2 L1610.9 983.3 L1612.5 984.1 L1614.1 986.2 L1615.7 984.9 L1617.3 983.5 L1619.0 984.1 L1620.6 982.6 L1622.1 980.8 L1623.8 981.7 L1625.4 981.3 L1627.0 981.7 L1628.6 979.9 L1630.2 980.2 L1631.8 980.2 L1633.4 981.5 L1635.0 981.9 L1635.8 981.2 L1636.6 981.4 L1638.2 980.3 L1639.8 981.8 L1641.4 981.9 L1643.0 980.1 L1644.6 982.4 L1646.2 981.5 L1647.8 980.0 L1649.4 980.6 L1651.0 980.0 L1652.6 981.4 L1654.2 981.9 L1655.8 979.9 L1656.5 980.5 L1657.4 981.4 L1659.0 982.8 L1660.6 983.2 L1662.2 983.2 L1663.8 983.0 L1665.4 985.0 L1667.0 985.3 L1669.1 986.6 L1670.2 985.3 L1671.8 983.8 L1673.4 982.6 L1675.0 979.8 L1676.6 978.6 L1678.2 975.1 L1680.5 972.6 L1681.4 974.4 L1683.0 973.2 L1684.6 976.7 L1686.2 976.3 L1687.8 976.3 L1688.6 977.8 L1689.4 977.8 L1691.0 975.6 L1692.6 974.9 L1694.2 972.2 L1695.4 972.4 L1697.4 973.5 L1699.0 975.9 L1701.2 976.6 L1702.2 976.6 L1703.8 975.2 L1705.4 974.0 L1706.9 973.1 L1708.6 974.7 L1710.2 976.6 L1711.8 975.8 L1713.4 977.8 L1715.0 977.8 L1716.6 981.4 L1718.4 981.7 L1719.8 981.4 L1721.4 980.4 L1723.0 978.9 L1724.6 978.5 L1726.2 979.5 L1727.8 979.3 L1729.4 979.3 L1731.0 978.4 L1733.3 976.8 L1734.2 977.2 L1735.8 979.8 L1737.4 981.1 L1739.0 983.5 L1741.3 986.2 L1742.2 984.8 L1743.8 984.4 L1745.4 981.9 L1747.0 978.3 L1748.6 978.3 L1750.4 975.8 L1751.8 975.5 L1753.4 973.4 L1755.0 975.1 L1756.6 973.6 L1758.2 973.2 L1759.8 971.7 L1760.8 971.9 L1763.0 972.2 L1764.6 973.6 L1766.2 974.7 L1767.8 975.2 L1769.4 975.8 L1771.1 978.0 L1772.6 976.5 L1774.2 975.0 L1775.8 971.2 L1777.4 970.5 L1779.0 968.2 L1780.2 966.2 L1782.3 968.9 L1783.9 968.7 L1785.5 969.3 L1787.1 970.4 L1788.7 973.5 L1789.4 972.7 L1790.3 972.5 L1791.9 972.8 L1793.5 972.1 L1795.1 972.7 L1796.3 971.9 L1798.3 975.0 L1799.9 977.9 L1801.5 980.4 L1803.1 982.8 L1804.3 984.3 L1806.3 974.8 L1807.9 967.6 L1809.5 958.2 L1811.1 950.5 L1811.9 946.1 L1812.7 948.1 L1814.3 954.0 L1815.9 961.8 L1818.1 968.7 L1819.1 969.0 L1820.7 969.4 L1822.3 971.6 L1823.9 971.0 L1825.5 972.5 L1827.1 971.2 L1828.7 972.1 L1830.7 973.5 L1831.9 974.1 L1833.5 976.6 L1835.1 977.8 L1836.7 978.3 L1838.3 980.0 L1839.8 982.5 L1841.5 982.9 L1843.1 982.3 L1844.7 982.9 L1846.3 982.5 L1847.9 983.5 L1849.5 983.9 L1851.3 984.7 L1852.7 984.3 L1854.3 984.2 L1855.9 983.0 L1857.5 982.3 L1859.3 980.6 L1860.7 982.1 L1862.3 984.3 L1863.9 985.3 L1863.9 1012.3 L1042.6 1012.3 Z" fill="#3c3f2f"/><g stroke="rgba(255,255,255,0.17)" stroke-width="1.4"><line x1="1042.6" y1="802.6" x2="1864.0" y2="802.6"/><line x1="1042.6" y1="854.9" x2="1864.0" y2="854.9"/><line x1="1042.6" y1="907.4" x2="1864.0" y2="907.4"/><line x1="1042.6" y1="960.0" x2="1864.0" y2="960.0"/><line x1="1042.6" y1="1012.3" x2="1864.0" y2="1012.3"/><line x1="1087.3" y1="802.6" x2="1087.3" y2="1012.3"/><line x1="1212.7" y1="802.6" x2="1212.7" y2="1012.3"/><line x1="1338.0" y1="802.6" x2="1338.0" y2="1012.3"/><line x1="1462.0" y1="802.6" x2="1462.0" y2="1012.3"/><line x1="1584.4" y1="802.6" x2="1584.4" y2="1012.3"/><line x1="1708.5" y1="802.6" x2="1708.5" y2="1012.3"/><line x1="1823.1" y1="802.6" x2="1823.1" y2="1012.3"/></g><path d="M1042.6 981.4 L1044.2 983.1 L1045.8 983.1 L1047.4 983.4 L1049.0 983.6 L1050.6 986.2 L1052.2 986.6 L1053.0 987.3 L1053.8 986.4 L1055.4 986.6 L1057.0 984.5 L1058.6 985.1 L1059.8 983.8 L1061.8 983.7 L1063.4 984.2 L1065.0 984.8 L1066.6 983.7 L1068.2 984.9 L1069.8 985.7 L1071.4 984.5 L1073.0 986.1 L1074.6 986.0 L1076.2 986.6 L1077.8 985.5 L1079.4 985.1 L1081.0 987.1 L1082.6 987.3 L1084.2 986.6 L1085.8 985.9 L1087.3 986.9 L1089.0 986.8 L1090.6 985.3 L1092.2 986.3 L1094.2 984.5 L1095.4 983.7 L1097.0 985.1 L1098.6 984.5 L1100.2 986.1 L1101.8 986.2 L1103.4 985.4 L1105.0 985.9 L1106.6 986.2 L1108.2 986.6 L1109.8 987.2 L1111.4 984.9 L1113.0 985.9 L1114.6 986.7 L1116.2 986.1 L1117.1 986.8 L1117.8 985.6 L1119.4 987.5 L1121.0 986.4 L1122.6 985.2 L1124.2 986.5 L1125.9 985.4 L1127.5 984.9 L1129.1 985.5 L1130.7 984.5 L1132.3 984.5 L1133.9 986.1 L1135.5 985.5 L1137.1 983.6 L1138.7 985.4 L1140.3 983.3 L1141.9 984.0 L1143.5 985.3 L1145.1 984.4 L1146.7 983.4 L1148.3 983.5 L1149.2 983.6 L1151.5 983.2 L1153.1 985.7 L1154.7 983.6 L1156.3 984.8 L1157.9 986.0 L1159.5 985.3 L1161.1 987.2 L1162.7 985.5 L1164.3 987.7 L1165.9 987.8 L1167.5 987.2 L1169.1 987.1 L1170.7 984.8 L1172.3 984.8 L1174.4 982.7 L1175.5 983.1 L1177.1 983.8 L1178.7 985.2 L1180.3 985.2 L1181.3 985.7 L1183.5 985.9 L1185.1 984.1 L1186.7 984.2 L1188.3 984.4 L1189.9 982.3 L1191.5 981.3 L1193.1 981.1 L1195.0 981.5 L1196.3 981.3 L1197.9 981.4 L1199.5 982.2 L1201.1 983.8 L1202.7 982.4 L1204.3 983.1 L1205.9 984.7 L1207.5 984.3 L1209.1 983.8 L1211.1 984.8 L1212.3 984.5 L1213.9 983.2 L1215.5 983.4 L1217.1 982.8 L1218.7 983.7 L1220.3 982.1 L1221.9 982.6 L1223.5 983.0 L1225.1 982.5 L1226.7 980.7 L1228.3 980.9 L1229.9 979.8 L1231.7 979.7 L1233.1 980.3 L1234.7 981.8 L1236.3 982.8 L1237.9 981.7 L1239.5 981.6 L1241.1 983.4 L1243.2 984.1 L1244.3 983.1 L1245.9 985.0 L1247.5 983.3 L1249.1 984.8 L1250.7 983.8 L1252.3 985.3 L1253.9 985.0 L1255.5 982.9 L1257.1 983.2 L1258.7 985.1 L1260.3 984.2 L1261.9 983.7 L1263.5 984.6 L1265.1 984.6 L1266.7 983.7 L1268.4 983.7 L1269.9 983.3 L1271.5 984.7 L1273.1 984.8 L1274.7 986.7 L1276.3 987.4 L1277.5 987.4 L1279.5 987.6 L1281.1 985.9 L1282.7 985.7 L1284.3 986.8 L1285.9 986.0 L1287.5 986.9 L1289.2 985.9 L1290.8 985.8 L1292.4 984.0 L1294.0 985.6 L1295.9 984.1 L1297.2 985.1 L1298.8 986.3 L1300.4 986.7 L1302.0 987.1 L1303.6 986.5 L1305.2 987.5 L1306.8 988.2 L1308.4 987.0 L1309.6 988.6 L1311.6 989.2 L1313.2 987.9 L1314.8 988.6 L1316.4 987.6 L1318.0 987.0 L1319.6 988.0 L1321.2 986.2 L1322.8 988.0 L1324.4 988.3 L1326.0 986.4 L1327.6 988.0 L1329.2 985.6 L1330.8 987.5 L1332.4 985.8 L1334.0 987.5 L1335.6 986.0 L1337.5 986.3 L1338.8 983.9 L1340.4 982.8 L1342.0 983.6 L1343.6 981.9 L1345.5 980.2 L1346.8 980.0 L1348.4 981.6 L1350.0 983.4 L1351.3 984.5 L1353.2 983.7 L1354.8 981.1 L1356.4 979.6 L1358.0 976.9 L1359.6 974.0 L1360.4 973.1 L1361.2 974.0 L1362.8 972.3 L1364.4 973.3 L1366.0 973.0 L1367.6 973.0 L1369.2 971.9 L1370.7 972.6 L1372.4 974.2 L1374.0 974.1 L1375.6 976.5 L1377.6 977.7 L1378.8 976.1 L1380.4 974.2 L1382.0 973.7 L1383.6 971.6 L1385.2 969.6 L1386.8 968.0 L1387.9 967.6 L1390.0 967.5 L1391.6 965.3 L1393.2 963.7 L1394.8 963.2 L1396.0 962.8 L1398.0 953.1 L1399.6 945.7 L1401.2 937.2 L1402.1 932.4 L1404.4 949.0 L1406.0 960.8 L1407.4 971.1 L1409.2 974.2 L1410.8 978.6 L1412.4 980.4 L1414.3 983.8 L1415.6 984.3 L1417.2 984.1 L1418.8 984.5 L1420.4 983.4 L1422.0 984.1 L1423.6 984.9 L1424.6 983.5 L1426.8 984.2 L1428.4 983.7 L1430.0 982.9 L1431.6 983.0 L1433.2 985.0 L1434.9 984.1 L1436.4 985.5 L1438.0 984.4 L1439.6 985.7 L1441.2 985.3 L1442.9 987.1 L1444.4 987.8 L1446.0 986.4 L1447.6 987.3 L1449.2 988.2 L1450.8 986.6 L1452.4 987.0 L1454.1 987.7 L1455.7 988.0 L1457.3 986.2 L1458.9 987.5 L1460.5 986.1 L1461.3 986.8 L1462.1 988.3 L1463.7 985.8 L1465.3 988.0 L1466.9 987.4 L1468.5 987.1 L1470.1 987.2 L1471.7 986.9 L1473.3 985.8 L1474.9 986.1 L1476.5 985.4 L1478.1 987.0 L1479.6 986.2 L1481.3 986.7 L1482.9 985.3 L1484.5 986.2 L1486.1 985.4 L1487.7 986.8 L1489.3 986.6 L1490.9 987.3 L1492.5 986.5 L1493.4 986.1 L1495.7 984.6 L1497.3 981.3 L1498.9 981.1 L1500.7 978.8 L1502.1 979.7 L1503.7 980.1 L1505.3 983.3 L1506.9 981.9 L1508.5 985.3 L1509.4 985.1 L1511.7 985.2 L1513.3 986.6 L1514.9 985.0 L1516.5 985.6 L1518.1 985.6 L1519.7 986.2 L1520.9 987.3 L1522.9 988.0 L1524.5 985.7 L1526.1 986.6 L1527.7 985.4 L1529.3 984.6 L1530.9 985.0 L1532.5 983.9 L1534.1 985.6 L1535.7 983.7 L1536.9 983.8 L1538.9 982.2 L1540.5 981.0 L1542.1 979.3 L1543.8 977.8 L1545.3 979.1 L1546.9 983.3 L1548.5 983.8 L1549.5 986.0 L1551.7 985.3 L1553.3 983.7 L1554.9 983.6 L1556.4 981.6 L1558.1 981.8 L1559.7 981.2 L1561.3 982.8 L1562.9 982.9 L1564.5 984.3 L1566.1 983.8 L1567.7 984.6 L1569.0 984.6 L1570.9 984.4 L1572.5 985.4 L1574.1 985.6 L1575.7 983.7 L1577.3 985.8 L1578.9 985.7 L1580.5 985.0 L1582.1 984.2 L1583.7 983.8 L1585.3 983.3 L1586.9 983.8 L1588.5 984.8 L1590.1 983.4 L1591.7 982.3 L1593.3 982.9 L1594.9 982.1 L1596.5 983.4 L1598.1 983.6 L1599.7 983.8 L1601.5 982.2 L1602.9 980.9 L1604.5 978.9 L1606.1 979.5 L1607.2 977.7 L1609.3 980.2 L1610.9 983.3 L1612.5 984.1 L1614.1 986.2 L1615.7 984.9 L1617.3 983.5 L1619.0 984.1 L1620.6 982.6 L1622.1 980.8 L1623.8 981.7 L1625.4 981.3 L1627.0 981.7 L1628.6 979.9 L1630.2 980.2 L1631.8 980.2 L1633.4 981.5 L1635.0 981.9 L1635.8 981.2 L1636.6 981.4 L1638.2 980.3 L1639.8 981.8 L1641.4 981.9 L1643.0 980.1 L1644.6 982.4 L1646.2 981.5 L1647.8 980.0 L1649.4 980.6 L1651.0 980.0 L1652.6 981.4 L1654.2 981.9 L1655.8 979.9 L1656.5 980.5 L1657.4 981.4 L1659.0 982.8 L1660.6 983.2 L1662.2 983.2 L1663.8 983.0 L1665.4 985.0 L1667.0 985.3 L1669.1 986.6 L1670.2 985.3 L1671.8 983.8 L1673.4 982.6 L1675.0 979.8 L1676.6 978.6 L1678.2 975.1 L1680.5 972.6 L1681.4 974.4 L1683.0 973.2 L1684.6 976.7 L1686.2 976.3 L1687.8 976.3 L1688.6 977.8 L1689.4 977.8 L1691.0 975.6 L1692.6 974.9 L1694.2 972.2 L1695.4 972.4 L1697.4 973.5 L1699.0 975.9 L1701.2 976.6 L1702.2 976.6 L1703.8 975.2 L1705.4 974.0 L1706.9 973.1 L1708.6 974.7 L1710.2 976.6 L1711.8 975.8 L1713.4 977.8 L1715.0 977.8 L1716.6 981.4 L1718.4 981.7 L1719.8 981.4 L1721.4 980.4 L1723.0 978.9 L1724.6 978.5 L1726.2 979.5 L1727.8 979.3 L1729.4 979.3 L1731.0 978.4 L1733.3 976.8 L1734.2 977.2 L1735.8 979.8 L1737.4 981.1 L1739.0 983.5 L1741.3 986.2 L1742.2 984.8 L1743.8 984.4 L1745.4 981.9 L1747.0 978.3 L1748.6 978.3 L1750.4 975.8 L1751.8 975.5 L1753.4 973.4 L1755.0 975.1 L1756.6 973.6 L1758.2 973.2 L1759.8 971.7 L1760.8 971.9 L1763.0 972.2 L1764.6 973.6 L1766.2 974.7 L1767.8 975.2 L1769.4 975.8 L1771.1 978.0 L1772.6 976.5 L1774.2 975.0 L1775.8 971.2 L1777.4 970.5 L1779.0 968.2 L1780.2 966.2 L1782.3 968.9 L1783.9 968.7 L1785.5 969.3 L1787.1 970.4 L1788.7 973.5 L1789.4 972.7 L1790.3 972.5 L1791.9 972.8 L1793.5 972.1 L1795.1 972.7 L1796.3 971.9 L1798.3 975.0 L1799.9 977.9 L1801.5 980.4 L1803.1 982.8 L1804.3 984.3 L1806.3 974.8 L1807.9 967.6 L1809.5 958.2 L1811.1 950.5 L1811.9 946.1 L1812.7 948.1 L1814.3 954.0 L1815.9 961.8 L1818.1 968.7 L1819.1 969.0 L1820.7 969.4 L1822.3 971.6 L1823.9 971.0 L1825.5 972.5 L1827.1 971.2 L1828.7 972.1 L1830.7 973.5 L1831.9 974.1 L1833.5 976.6 L1835.1 977.8 L1836.7 978.3 L1838.3 980.0 L1839.8 982.5 L1841.5 982.9 L1843.1 982.3 L1844.7 982.9 L1846.3 982.5 L1847.9 983.5 L1849.5 983.9 L1851.3 984.7 L1852.7 984.3 L1854.3 984.2 L1855.9 983.0 L1857.5 982.3 L1859.3 980.6 L1860.7 982.1 L1862.3 984.3 L1863.9 985.3" class="gl"/><path d="M1042.6 981.4 L1044.2 983.1 L1045.8 983.1 L1047.4 983.4 L1049.0 983.6 L1050.6 986.2 L1052.2 986.6 L1053.0 987.3 L1053.8 986.4 L1055.4 986.6 L1057.0 984.5 L1058.6 985.1 L1059.8 983.8 L1061.8 983.7 L1063.4 984.2 L1065.0 984.8 L1066.6 983.7 L1068.2 984.9 L1069.8 985.7 L1071.4 984.5 L1073.0 986.1 L1074.6 986.0 L1076.2 986.6 L1077.8 985.5 L1079.4 985.1 L1081.0 987.1 L1082.6 987.3 L1084.2 986.6 L1085.8 985.9 L1087.3 986.9 L1089.0 986.8 L1090.6 985.3 L1092.2 986.3 L1094.2 984.5 L1095.4 983.7 L1097.0 985.1 L1098.6 984.5 L1100.2 986.1 L1101.8 986.2 L1103.4 985.4 L1105.0 985.9 L1106.6 986.2 L1108.2 986.6 L1109.8 987.2 L1111.4 984.9 L1113.0 985.9 L1114.6 986.7 L1116.2 986.1 L1117.1 986.8 L1117.8 985.6 L1119.4 987.5 L1121.0 986.4 L1122.6 985.2 L1124.2 986.5 L1125.9 985.4 L1127.5 984.9 L1129.1 985.5 L1130.7 984.5 L1132.3 984.5 L1133.9 986.1 L1135.5 985.5 L1137.1 983.6 L1138.7 985.4 L1140.3 983.3 L1141.9 984.0 L1143.5 985.3 L1145.1 984.4 L1146.7 983.4 L1148.3 983.5 L1149.2 983.6 L1151.5 983.2 L1153.1 985.7 L1154.7 983.6 L1156.3 984.8 L1157.9 986.0 L1159.5 985.3 L1161.1 987.2 L1162.7 985.5 L1164.3 987.7 L1165.9 987.8 L1167.5 987.2 L1169.1 987.1 L1170.7 984.8 L1172.3 984.8 L1174.4 982.7 L1175.5 983.1 L1177.1 983.8 L1178.7 985.2 L1180.3 985.2 L1181.3 985.7 L1183.5 985.9 L1185.1 984.1 L1186.7 984.2 L1188.3 984.4 L1189.9 982.3 L1191.5 981.3 L1193.1 981.1 L1195.0 981.5 L1196.3 981.3 L1197.9 981.4 L1199.5 982.2 L1201.1 983.8 L1202.7 982.4 L1204.3 983.1 L1205.9 984.7 L1207.5 984.3 L1209.1 983.8 L1211.1 984.8 L1212.3 984.5 L1213.9 983.2 L1215.5 983.4 L1217.1 982.8 L1218.7 983.7 L1220.3 982.1 L1221.9 982.6 L1223.5 983.0 L1225.1 982.5 L1226.7 980.7 L1228.3 980.9 L1229.9 979.8 L1231.7 979.7 L1233.1 980.3 L1234.7 981.8 L1236.3 982.8 L1237.9 981.7 L1239.5 981.6 L1241.1 983.4 L1243.2 984.1 L1244.3 983.1 L1245.9 985.0 L1247.5 983.3 L1249.1 984.8 L1250.7 983.8 L1252.3 985.3 L1253.9 985.0 L1255.5 982.9 L1257.1 983.2 L1258.7 985.1 L1260.3 984.2 L1261.9 983.7 L1263.5 984.6 L1265.1 984.6 L1266.7 983.7 L1268.4 983.7 L1269.9 983.3 L1271.5 984.7 L1273.1 984.8 L1274.7 986.7 L1276.3 987.4 L1277.5 987.4 L1279.5 987.6 L1281.1 985.9 L1282.7 985.7 L1284.3 986.8 L1285.9 986.0 L1287.5 986.9 L1289.2 985.9 L1290.8 985.8 L1292.4 984.0 L1294.0 985.6 L1295.9 984.1 L1297.2 985.1 L1298.8 986.3 L1300.4 986.7 L1302.0 987.1 L1303.6 986.5 L1305.2 987.5 L1306.8 988.2 L1308.4 987.0 L1309.6 988.6 L1311.6 989.2 L1313.2 987.9 L1314.8 988.6 L1316.4 987.6 L1318.0 987.0 L1319.6 988.0 L1321.2 986.2 L1322.8 988.0 L1324.4 988.3 L1326.0 986.4 L1327.6 988.0 L1329.2 985.6 L1330.8 987.5 L1332.4 985.8 L1334.0 987.5 L1335.6 986.0 L1337.5 986.3 L1338.8 983.9 L1340.4 982.8 L1342.0 983.6 L1343.6 981.9 L1345.5 980.2 L1346.8 980.0 L1348.4 981.6 L1350.0 983.4 L1351.3 984.5 L1353.2 983.7 L1354.8 981.1 L1356.4 979.6 L1358.0 976.9 L1359.6 974.0 L1360.4 973.1 L1361.2 974.0 L1362.8 972.3 L1364.4 973.3 L1366.0 973.0 L1367.6 973.0 L1369.2 971.9 L1370.7 972.6 L1372.4 974.2 L1374.0 974.1 L1375.6 976.5 L1377.6 977.7 L1378.8 976.1 L1380.4 974.2 L1382.0 973.7 L1383.6 971.6 L1385.2 969.6 L1386.8 968.0 L1387.9 967.6 L1390.0 967.5 L1391.6 965.3 L1393.2 963.7 L1394.8 963.2 L1396.0 962.8 L1398.0 953.1 L1399.6 945.7 L1401.2 937.2 L1402.1 932.4 L1404.4 949.0 L1406.0 960.8 L1407.4 971.1 L1409.2 974.2 L1410.8 978.6 L1412.4 980.4 L1414.3 983.8 L1415.6 984.3 L1417.2 984.1 L1418.8 984.5 L1420.4 983.4 L1422.0 984.1 L1423.6 984.9 L1424.6 983.5 L1426.8 984.2 L1428.4 983.7 L1430.0 982.9 L1431.6 983.0 L1433.2 985.0 L1434.9 984.1 L1436.4 985.5 L1438.0 984.4 L1439.6 985.7 L1441.2 985.3 L1442.9 987.1 L1444.4 987.8 L1446.0 986.4 L1447.6 987.3 L1449.2 988.2 L1450.8 986.6 L1452.4 987.0 L1454.1 987.7 L1455.7 988.0 L1457.3 986.2 L1458.9 987.5 L1460.5 986.1 L1461.3 986.8 L1462.1 988.3 L1463.7 985.8 L1465.3 988.0 L1466.9 987.4 L1468.5 987.1 L1470.1 987.2 L1471.7 986.9 L1473.3 985.8 L1474.9 986.1 L1476.5 985.4 L1478.1 987.0 L1479.6 986.2 L1481.3 986.7 L1482.9 985.3 L1484.5 986.2 L1486.1 985.4 L1487.7 986.8 L1489.3 986.6 L1490.9 987.3 L1492.5 986.5 L1493.4 986.1 L1495.7 984.6 L1497.3 981.3 L1498.9 981.1 L1500.7 978.8 L1502.1 979.7 L1503.7 980.1 L1505.3 983.3 L1506.9 981.9 L1508.5 985.3 L1509.4 985.1 L1511.7 985.2 L1513.3 986.6 L1514.9 985.0 L1516.5 985.6 L1518.1 985.6 L1519.7 986.2 L1520.9 987.3 L1522.9 988.0 L1524.5 985.7 L1526.1 986.6 L1527.7 985.4 L1529.3 984.6 L1530.9 985.0 L1532.5 983.9 L1534.1 985.6 L1535.7 983.7 L1536.9 983.8 L1538.9 982.2 L1540.5 981.0 L1542.1 979.3 L1543.8 977.8 L1545.3 979.1 L1546.9 983.3 L1548.5 983.8 L1549.5 986.0 L1551.7 985.3 L1553.3 983.7 L1554.9 983.6 L1556.4 981.6 L1558.1 981.8 L1559.7 981.2 L1561.3 982.8 L1562.9 982.9 L1564.5 984.3 L1566.1 983.8 L1567.7 984.6 L1569.0 984.6 L1570.9 984.4 L1572.5 985.4 L1574.1 985.6 L1575.7 983.7 L1577.3 985.8 L1578.9 985.7 L1580.5 985.0 L1582.1 984.2 L1583.7 983.8 L1585.3 983.3 L1586.9 983.8 L1588.5 984.8 L1590.1 983.4 L1591.7 982.3 L1593.3 982.9 L1594.9 982.1 L1596.5 983.4 L1598.1 983.6 L1599.7 983.8 L1601.5 982.2 L1602.9 980.9 L1604.5 978.9 L1606.1 979.5 L1607.2 977.7 L1609.3 980.2 L1610.9 983.3 L1612.5 984.1 L1614.1 986.2 L1615.7 984.9 L1617.3 983.5 L1619.0 984.1 L1620.6 982.6 L1622.1 980.8 L1623.8 981.7 L1625.4 981.3 L1627.0 981.7 L1628.6 979.9 L1630.2 980.2 L1631.8 980.2 L1633.4 981.5 L1635.0 981.9 L1635.8 981.2 L1636.6 981.4 L1638.2 980.3 L1639.8 981.8 L1641.4 981.9 L1643.0 980.1 L1644.6 982.4 L1646.2 981.5 L1647.8 980.0 L1649.4 980.6 L1651.0 980.0 L1652.6 981.4 L1654.2 981.9 L1655.8 979.9 L1656.5 980.5 L1657.4 981.4 L1659.0 982.8 L1660.6 983.2 L1662.2 983.2 L1663.8 983.0 L1665.4 985.0 L1667.0 985.3 L1669.1 986.6 L1670.2 985.3 L1671.8 983.8 L1673.4 982.6 L1675.0 979.8 L1676.6 978.6 L1678.2 975.1 L1680.5 972.6 L1681.4 974.4 L1683.0 973.2 L1684.6 976.7 L1686.2 976.3 L1687.8 976.3 L1688.6 977.8 L1689.4 977.8 L1691.0 975.6 L1692.6 974.9 L1694.2 972.2 L1695.4 972.4 L1697.4 973.5 L1699.0 975.9 L1701.2 976.6 L1702.2 976.6 L1703.8 975.2 L1705.4 974.0 L1706.9 973.1 L1708.6 974.7 L1710.2 976.6 L1711.8 975.8 L1713.4 977.8 L1715.0 977.8 L1716.6 981.4 L1718.4 981.7 L1719.8 981.4 L1721.4 980.4 L1723.0 978.9 L1724.6 978.5 L1726.2 979.5 L1727.8 979.3 L1729.4 979.3 L1731.0 978.4 L1733.3 976.8 L1734.2 977.2 L1735.8 979.8 L1737.4 981.1 L1739.0 983.5 L1741.3 986.2 L1742.2 984.8 L1743.8 984.4 L1745.4 981.9 L1747.0 978.3 L1748.6 978.3 L1750.4 975.8 L1751.8 975.5 L1753.4 973.4 L1755.0 975.1 L1756.6 973.6 L1758.2 973.2 L1759.8 971.7 L1760.8 971.9 L1763.0 972.2 L1764.6 973.6 L1766.2 974.7 L1767.8 975.2 L1769.4 975.8 L1771.1 978.0 L1772.6 976.5 L1774.2 975.0 L1775.8 971.2 L1777.4 970.5 L1779.0 968.2 L1780.2 966.2 L1782.3 968.9 L1783.9 968.7 L1785.5 969.3 L1787.1 970.4 L1788.7 973.5 L1789.4 972.7 L1790.3 972.5 L1791.9 972.8 L1793.5 972.1 L1795.1 972.7 L1796.3 971.9 L1798.3 975.0 L1799.9 977.9 L1801.5 980.4 L1803.1 982.8 L1804.3 984.3 L1806.3 974.8 L1807.9 967.6 L1809.5 958.2 L1811.1 950.5 L1811.9 946.1 L1812.7 948.1 L1814.3 954.0 L1815.9 961.8 L1818.1 968.7 L1819.1 969.0 L1820.7 969.4 L1822.3 971.6 L1823.9 971.0 L1825.5 972.5 L1827.1 971.2 L1828.7 972.1 L1830.7 973.5 L1831.9 974.1 L1833.5 976.6 L1835.1 977.8 L1836.7 978.3 L1838.3 980.0 L1839.8 982.5 L1841.5 982.9 L1843.1 982.3 L1844.7 982.9 L1846.3 982.5 L1847.9 983.5 L1849.5 983.9 L1851.3 984.7 L1852.7 984.3 L1854.3 984.2 L1855.9 983.0 L1857.5 982.3 L1859.3 980.6 L1860.7 982.1 L1862.3 984.3 L1863.9 985.3" class="gl2"/><path d="M1042.6 929.8 L1044.1 921.2 L1045.4 911.9 L1047.1 923.9 L1048.6 931.8 L1050.6 942.9 L1051.6 938.8 L1053.1 939.3 L1054.6 940.1 L1056.1 936.8 L1057.5 934.9 L1059.1 935.2 L1060.6 939.6 L1062.1 941.0 L1063.6 945.1 L1065.5 948.2 L1066.6 944.6 L1068.1 944.3 L1069.6 943.3 L1071.1 945.3 L1072.6 943.2 L1074.1 938.7 L1075.8 939.4 L1077.1 936.9 L1078.6 939.0 L1080.1 936.2 L1081.6 935.2 L1083.1 939.5 L1084.6 935.7 L1086.1 935.5 L1087.3 937.3 L1089.1 937.4 L1090.6 933.3 L1092.1 935.7 L1093.6 932.5 L1095.2 932.2 L1096.7 928.7 L1098.8 929.3 L1099.7 930.7 L1101.2 933.9 L1102.7 935.4 L1104.5 935.2 L1105.7 934.2 L1107.2 932.3 L1108.7 931.4 L1110.2 930.2 L1111.7 930.6 L1113.2 931.4 L1114.7 927.4 L1116.2 930.1 L1117.1 928.5 L1119.2 926.7 L1120.7 928.5 L1122.2 926.0 L1124.0 925.0 L1125.2 926.5 L1126.7 929.4 L1128.2 927.8 L1129.7 934.4 L1130.8 932.6 L1132.7 935.8 L1134.2 937.2 L1135.7 933.9 L1137.2 938.9 L1138.7 937.7 L1140.2 939.8 L1141.2 939.5 L1143.2 934.1 L1144.7 932.1 L1146.2 933.4 L1146.9 929.4 L1147.7 931.6 L1149.2 933.4 L1150.7 934.3 L1152.2 932.0 L1153.7 933.0 L1154.9 934.4 L1156.7 934.5 L1158.2 930.0 L1159.7 932.3 L1161.2 931.4 L1162.9 929.2 L1164.2 930.2 L1165.7 939.4 L1167.5 941.9 L1168.7 938.2 L1170.2 935.5 L1172.1 930.3 L1173.2 931.2 L1174.7 937.3 L1176.7 939.1 L1177.7 936.7 L1179.2 934.9 L1181.3 932.8 L1182.2 932.9 L1183.7 936.3 L1184.7 940.3 L1186.7 936.1 L1188.2 926.9 L1189.3 924.6 L1191.2 933.1 L1192.7 934.8 L1193.9 937.7 L1195.7 933.4 L1197.3 932.8 L1198.8 931.5 L1200.8 926.3 L1201.8 927.6 L1203.3 928.2 L1204.2 932.6 L1206.3 927.6 L1207.8 928.5 L1209.3 928.8 L1211.1 924.7 L1212.3 927.0 L1213.8 928.9 L1215.3 928.0 L1216.8 929.6 L1217.9 928.2 L1219.8 925.7 L1221.3 922.0 L1222.8 923.5 L1224.3 918.5 L1225.8 917.2 L1227.3 917.9 L1228.3 914.3 L1230.3 924.3 L1231.7 927.4 L1233.3 927.4 L1234.8 928.7 L1236.3 927.5 L1237.8 929.9 L1239.3 934.0 L1240.8 936.1 L1242.3 940.8 L1243.2 944.2 L1245.3 941.5 L1246.8 936.5 L1248.3 932.6 L1249.8 928.6 L1251.2 925.9 L1252.8 928.8 L1254.3 934.8 L1255.8 937.2 L1257.3 934.2 L1258.8 934.5 L1260.3 932.7 L1261.5 930.1 L1263.3 931.5 L1264.8 932.8 L1266.3 931.5 L1268.4 933.5 L1269.3 933.1 L1270.8 935.9 L1272.3 939.1 L1273.8 940.4 L1275.3 940.1 L1276.4 943.0 L1278.3 940.1 L1279.8 937.3 L1281.3 931.9 L1282.1 933.3 L1282.8 932.7 L1284.3 936.7 L1285.8 937.3 L1287.3 940.9 L1288.8 941.7 L1290.1 942.8 L1291.8 938.6 L1293.3 937.5 L1294.7 934.7 L1296.3 938.0 L1297.8 937.3 L1299.4 941.6 L1300.9 943.5 L1301.6 942.6 L1302.4 943.5 L1303.9 940.7 L1305.4 935.7 L1307.3 932.1 L1308.4 933.3 L1309.9 940.9 L1311.5 944.2 L1312.9 940.6 L1314.4 938.5 L1315.9 935.4 L1316.9 932.4 L1318.9 930.7 L1320.4 934.1 L1321.9 933.3 L1323.8 933.4 L1324.9 933.3 L1326.4 935.2 L1327.9 936.7 L1329.4 936.8 L1330.6 937.0 L1332.4 934.2 L1333.9 934.9 L1335.4 936.4 L1337.5 936.9 L1338.4 933.6 L1339.9 933.2 L1341.4 930.1 L1342.9 924.3 L1344.4 923.7 L1345.5 921.4 L1347.4 922.3 L1348.9 925.0 L1350.1 928.5 L1351.9 924.5 L1353.4 922.4 L1354.9 919.5 L1355.8 920.6 L1357.9 917.9 L1359.4 917.6 L1360.9 916.0 L1362.4 912.7 L1363.9 914.7 L1365.0 910.9 L1366.9 912.7 L1368.4 913.3 L1369.9 915.3 L1371.4 915.0 L1373.0 918.8 L1374.4 919.4 L1375.9 919.4 L1377.4 924.2 L1378.8 924.7 L1380.4 920.9 L1381.9 915.7 L1383.4 912.8 L1384.9 910.6 L1386.4 905.7 L1387.9 899.9 L1389.4 900.6 L1390.9 898.7 L1392.4 896.3 L1393.9 894.1 L1394.8 895.5 L1396.9 881.0 L1398.4 872.7 L1399.9 862.5 L1401.4 850.3 L1402.4 843.0 L1404.5 868.6 L1406.0 881.0 L1407.4 899.5 L1409.0 908.8 L1410.8 918.5 L1412.0 918.0 L1413.5 922.5 L1415.0 925.8 L1416.5 925.0 L1418.0 927.3 L1419.5 928.1 L1421.0 930.4 L1422.3 933.8 L1424.0 930.9 L1425.5 932.4 L1427.0 930.7 L1428.0 927.6 L1430.0 926.9 L1431.5 931.2 L1433.0 929.1 L1434.9 929.7 L1436.0 930.5 L1437.5 936.2 L1439.0 935.9 L1440.5 937.1 L1442.0 940.3 L1444.1 943.1 L1445.0 943.6 L1446.5 941.7 L1448.0 939.9 L1449.5 941.4 L1451.0 940.7 L1452.5 935.4 L1454.4 936.7 L1455.5 936.4 L1457.0 941.1 L1458.5 941.5 L1460.1 941.0 L1461.5 938.2 L1463.0 935.6 L1464.5 938.0 L1466.0 932.3 L1467.0 932.2 L1469.0 935.0 L1470.5 938.1 L1471.6 939.1 L1473.5 938.7 L1475.0 934.3 L1476.5 936.4 L1477.3 934.1 L1478.0 935.3 L1479.5 935.8 L1481.0 937.1 L1481.9 939.0 L1484.0 933.5 L1485.5 929.2 L1486.5 927.8 L1488.5 928.4 L1490.0 925.8 L1492.2 928.4 L1493.0 927.6 L1494.5 928.5 L1496.0 926.9 L1497.5 923.6 L1499.0 919.3 L1499.8 921.5 L1500.5 921.8 L1502.0 924.9 L1503.5 927.8 L1505.1 929.7 L1507.1 932.1 L1508.1 935.2 L1509.6 934.0 L1511.1 935.5 L1512.6 939.4 L1514.1 937.5 L1515.6 939.5 L1516.3 941.7 L1517.1 938.3 L1518.6 940.8 L1520.1 938.5 L1521.6 935.7 L1523.2 934.1 L1524.6 935.4 L1526.1 935.6 L1527.6 931.1 L1529.1 932.3 L1530.0 932.2 L1532.1 931.8 L1533.6 930.6 L1535.1 929.5 L1536.9 931.1 L1538.1 930.0 L1539.6 922.8 L1541.1 920.4 L1542.6 920.1 L1544.2 915.3 L1545.6 920.5 L1547.1 922.4 L1548.6 931.2 L1549.5 933.8 L1551.6 933.2 L1553.1 929.8 L1554.1 926.9 L1556.1 930.7 L1557.6 928.5 L1559.1 931.8 L1560.6 934.5 L1562.1 933.5 L1563.6 930.6 L1565.1 930.8 L1566.6 933.3 L1568.1 928.7 L1569.6 930.4 L1571.1 928.7 L1572.6 926.7 L1574.7 927.7 L1575.6 926.6 L1577.1 929.3 L1578.6 933.1 L1580.5 936.1 L1581.6 933.1 L1583.1 934.2 L1584.6 933.4 L1586.1 932.4 L1587.6 926.8 L1589.1 926.7 L1590.8 925.0 L1592.1 928.4 L1593.6 930.8 L1595.4 935.0 L1596.6 931.9 L1598.1 928.0 L1599.6 929.0 L1601.5 924.7 L1602.6 922.7 L1604.1 917.8 L1605.6 915.7 L1607.2 909.3 L1608.7 915.8 L1610.2 920.2 L1611.7 927.9 L1613.2 932.6 L1614.1 938.1 L1616.2 933.0 L1617.7 927.5 L1619.2 924.5 L1620.9 921.6 L1622.2 924.0 L1623.7 922.2 L1625.2 926.1 L1626.7 926.9 L1628.2 925.1 L1630.1 928.9 L1631.2 926.1 L1632.7 925.7 L1634.2 927.5 L1635.8 926.1 L1637.2 930.0 L1638.7 929.6 L1640.2 930.6 L1641.7 934.8 L1642.7 933.8 L1644.7 932.6 L1646.2 926.9 L1647.7 925.1 L1649.6 924.7 L1650.7 923.9 L1652.2 919.9 L1653.7 917.8 L1655.2 920.6 L1656.7 917.4 L1657.6 916.0 L1659.7 917.3 L1661.2 922.3 L1663.3 925.0 L1664.2 925.8 L1665.7 929.6 L1667.2 934.3 L1669.1 937.6 L1670.2 933.3 L1671.7 926.7 L1673.2 925.0 L1674.7 918.7 L1675.9 914.2 L1677.7 909.8 L1679.2 909.0 L1680.7 904.3 L1681.7 902.4 L1683.7 908.4 L1685.2 913.5 L1687.4 918.3 L1688.2 914.3 L1689.7 910.3 L1691.2 907.6 L1693.1 904.0 L1694.2 908.5 L1695.7 908.9 L1697.2 912.8 L1698.7 911.4 L1700.0 916.1 L1701.7 915.9 L1703.2 912.6 L1704.6 910.2 L1706.2 910.6 L1707.7 909.1 L1709.2 909.8 L1710.8 910.3 L1712.6 912.4 L1713.8 915.4 L1715.3 922.4 L1716.1 922.4 L1718.3 919.5 L1719.8 918.1 L1721.3 916.0 L1722.9 915.8 L1724.3 918.1 L1725.8 923.1 L1727.5 926.9 L1728.8 925.9 L1730.3 918.5 L1731.8 917.0 L1733.3 911.2 L1734.4 907.1 L1736.3 913.3 L1737.8 921.0 L1739.3 922.0 L1741.3 931.2 L1742.3 926.6 L1743.8 923.5 L1745.3 918.8 L1746.8 910.7 L1748.8 905.3 L1749.8 905.7 L1751.3 910.5 L1752.8 913.4 L1753.9 918.3 L1755.8 919.6 L1757.3 915.4 L1758.8 914.2 L1760.8 913.8 L1761.8 914.3 L1763.3 919.2 L1764.8 921.6 L1766.3 921.3 L1767.6 924.9 L1769.3 923.4 L1770.8 922.5 L1772.3 918.6 L1773.4 916.0 L1775.3 910.5 L1776.8 899.1 L1778.3 893.0 L1779.1 892.4 L1779.8 892.5 L1781.3 892.7 L1782.8 897.5 L1784.8 900.6 L1785.8 901.9 L1787.3 903.8 L1788.8 905.2 L1790.5 909.7 L1791.8 912.7 L1793.3 911.0 L1795.1 912.1 L1796.3 912.2 L1797.8 916.8 L1799.3 919.4 L1800.8 924.8 L1802.3 926.6 L1803.2 930.7 L1805.3 917.9 L1806.8 908.6 L1807.7 904.0 L1809.8 884.5 L1811.3 877.1 L1812.3 866.4 L1814.4 882.7 L1815.9 893.7 L1816.9 902.3 L1818.9 906.4 L1820.4 912.4 L1821.9 916.2 L1822.6 920.7 L1823.4 922.9 L1824.9 921.4 L1826.4 923.0 L1827.9 919.9 L1829.4 919.1 L1830.7 921.9 L1832.4 923.2 L1833.9 924.9 L1835.4 925.2 L1836.9 927.8 L1838.7 929.0 L1839.9 932.5 L1841.4 931.5 L1842.9 934.3 L1844.4 937.1 L1845.9 934.5 L1847.4 933.2 L1848.9 933.4 L1850.4 931.5 L1851.3 933.6 L1853.4 938.4 L1854.7 938.8 L1856.4 933.7 L1857.9 930.4 L1859.3 929.5 L1860.9 929.2 L1862.4 932.5 L1863.9 934.4" class="ol" stroke-width="2.4"/><path d="M1042.6 929.8 L1044.1 921.2 L1045.4 911.9 L1047.1 923.9 L1048.6 931.8 L1050.6 942.9 L1051.6 938.8 L1053.1 939.3 L1054.6 940.1 L1056.1 936.8 L1057.5 934.9 L1059.1 935.2 L1060.6 939.6 L1062.1 941.0 L1063.6 945.1 L1065.5 948.2 L1066.6 944.6 L1068.1 944.3 L1069.6 943.3 L1071.1 945.3 L1072.6 943.2 L1074.1 938.7 L1075.8 939.4 L1077.1 936.9 L1078.6 939.0 L1080.1 936.2 L1081.6 935.2 L1083.1 939.5 L1084.6 935.7 L1086.1 935.5 L1087.3 937.3 L1089.1 937.4 L1090.6 933.3 L1092.1 935.7 L1093.6 932.5 L1095.2 932.2 L1096.7 928.7 L1098.8 929.3 L1099.7 930.7 L1101.2 933.9 L1102.7 935.4 L1104.5 935.2 L1105.7 934.2 L1107.2 932.3 L1108.7 931.4 L1110.2 930.2 L1111.7 930.6 L1113.2 931.4 L1114.7 927.4 L1116.2 930.1 L1117.1 928.5 L1119.2 926.7 L1120.7 928.5 L1122.2 926.0 L1124.0 925.0 L1125.2 926.5 L1126.7 929.4 L1128.2 927.8 L1129.7 934.4 L1130.8 932.6 L1132.7 935.8 L1134.2 937.2 L1135.7 933.9 L1137.2 938.9 L1138.7 937.7 L1140.2 939.8 L1141.2 939.5 L1143.2 934.1 L1144.7 932.1 L1146.2 933.4 L1146.9 929.4 L1147.7 931.6 L1149.2 933.4 L1150.7 934.3 L1152.2 932.0 L1153.7 933.0 L1154.9 934.4 L1156.7 934.5 L1158.2 930.0 L1159.7 932.3 L1161.2 931.4 L1162.9 929.2 L1164.2 930.2 L1165.7 939.4 L1167.5 941.9 L1168.7 938.2 L1170.2 935.5 L1172.1 930.3 L1173.2 931.2 L1174.7 937.3 L1176.7 939.1 L1177.7 936.7 L1179.2 934.9 L1181.3 932.8 L1182.2 932.9 L1183.7 936.3 L1184.7 940.3 L1186.7 936.1 L1188.2 926.9 L1189.3 924.6 L1191.2 933.1 L1192.7 934.8 L1193.9 937.7 L1195.7 933.4 L1197.3 932.8 L1198.8 931.5 L1200.8 926.3 L1201.8 927.6 L1203.3 928.2 L1204.2 932.6 L1206.3 927.6 L1207.8 928.5 L1209.3 928.8 L1211.1 924.7 L1212.3 927.0 L1213.8 928.9 L1215.3 928.0 L1216.8 929.6 L1217.9 928.2 L1219.8 925.7 L1221.3 922.0 L1222.8 923.5 L1224.3 918.5 L1225.8 917.2 L1227.3 917.9 L1228.3 914.3 L1230.3 924.3 L1231.7 927.4 L1233.3 927.4 L1234.8 928.7 L1236.3 927.5 L1237.8 929.9 L1239.3 934.0 L1240.8 936.1 L1242.3 940.8 L1243.2 944.2 L1245.3 941.5 L1246.8 936.5 L1248.3 932.6 L1249.8 928.6 L1251.2 925.9 L1252.8 928.8 L1254.3 934.8 L1255.8 937.2 L1257.3 934.2 L1258.8 934.5 L1260.3 932.7 L1261.5 930.1 L1263.3 931.5 L1264.8 932.8 L1266.3 931.5 L1268.4 933.5 L1269.3 933.1 L1270.8 935.9 L1272.3 939.1 L1273.8 940.4 L1275.3 940.1 L1276.4 943.0 L1278.3 940.1 L1279.8 937.3 L1281.3 931.9 L1282.1 933.3 L1282.8 932.7 L1284.3 936.7 L1285.8 937.3 L1287.3 940.9 L1288.8 941.7 L1290.1 942.8 L1291.8 938.6 L1293.3 937.5 L1294.7 934.7 L1296.3 938.0 L1297.8 937.3 L1299.4 941.6 L1300.9 943.5 L1301.6 942.6 L1302.4 943.5 L1303.9 940.7 L1305.4 935.7 L1307.3 932.1 L1308.4 933.3 L1309.9 940.9 L1311.5 944.2 L1312.9 940.6 L1314.4 938.5 L1315.9 935.4 L1316.9 932.4 L1318.9 930.7 L1320.4 934.1 L1321.9 933.3 L1323.8 933.4 L1324.9 933.3 L1326.4 935.2 L1327.9 936.7 L1329.4 936.8 L1330.6 937.0 L1332.4 934.2 L1333.9 934.9 L1335.4 936.4 L1337.5 936.9 L1338.4 933.6 L1339.9 933.2 L1341.4 930.1 L1342.9 924.3 L1344.4 923.7 L1345.5 921.4 L1347.4 922.3 L1348.9 925.0 L1350.1 928.5 L1351.9 924.5 L1353.4 922.4 L1354.9 919.5 L1355.8 920.6 L1357.9 917.9 L1359.4 917.6 L1360.9 916.0 L1362.4 912.7 L1363.9 914.7 L1365.0 910.9 L1366.9 912.7 L1368.4 913.3 L1369.9 915.3 L1371.4 915.0 L1373.0 918.8 L1374.4 919.4 L1375.9 919.4 L1377.4 924.2 L1378.8 924.7 L1380.4 920.9 L1381.9 915.7 L1383.4 912.8 L1384.9 910.6 L1386.4 905.7 L1387.9 899.9 L1389.4 900.6 L1390.9 898.7 L1392.4 896.3 L1393.9 894.1 L1394.8 895.5 L1396.9 881.0 L1398.4 872.7 L1399.9 862.5 L1401.4 850.3 L1402.4 843.0 L1404.5 868.6 L1406.0 881.0 L1407.4 899.5 L1409.0 908.8 L1410.8 918.5 L1412.0 918.0 L1413.5 922.5 L1415.0 925.8 L1416.5 925.0 L1418.0 927.3 L1419.5 928.1 L1421.0 930.4 L1422.3 933.8 L1424.0 930.9 L1425.5 932.4 L1427.0 930.7 L1428.0 927.6 L1430.0 926.9 L1431.5 931.2 L1433.0 929.1 L1434.9 929.7 L1436.0 930.5 L1437.5 936.2 L1439.0 935.9 L1440.5 937.1 L1442.0 940.3 L1444.1 943.1 L1445.0 943.6 L1446.5 941.7 L1448.0 939.9 L1449.5 941.4 L1451.0 940.7 L1452.5 935.4 L1454.4 936.7 L1455.5 936.4 L1457.0 941.1 L1458.5 941.5 L1460.1 941.0 L1461.5 938.2 L1463.0 935.6 L1464.5 938.0 L1466.0 932.3 L1467.0 932.2 L1469.0 935.0 L1470.5 938.1 L1471.6 939.1 L1473.5 938.7 L1475.0 934.3 L1476.5 936.4 L1477.3 934.1 L1478.0 935.3 L1479.5 935.8 L1481.0 937.1 L1481.9 939.0 L1484.0 933.5 L1485.5 929.2 L1486.5 927.8 L1488.5 928.4 L1490.0 925.8 L1492.2 928.4 L1493.0 927.6 L1494.5 928.5 L1496.0 926.9 L1497.5 923.6 L1499.0 919.3 L1499.8 921.5 L1500.5 921.8 L1502.0 924.9 L1503.5 927.8 L1505.1 929.7 L1507.1 932.1 L1508.1 935.2 L1509.6 934.0 L1511.1 935.5 L1512.6 939.4 L1514.1 937.5 L1515.6 939.5 L1516.3 941.7 L1517.1 938.3 L1518.6 940.8 L1520.1 938.5 L1521.6 935.7 L1523.2 934.1 L1524.6 935.4 L1526.1 935.6 L1527.6 931.1 L1529.1 932.3 L1530.0 932.2 L1532.1 931.8 L1533.6 930.6 L1535.1 929.5 L1536.9 931.1 L1538.1 930.0 L1539.6 922.8 L1541.1 920.4 L1542.6 920.1 L1544.2 915.3 L1545.6 920.5 L1547.1 922.4 L1548.6 931.2 L1549.5 933.8 L1551.6 933.2 L1553.1 929.8 L1554.1 926.9 L1556.1 930.7 L1557.6 928.5 L1559.1 931.8 L1560.6 934.5 L1562.1 933.5 L1563.6 930.6 L1565.1 930.8 L1566.6 933.3 L1568.1 928.7 L1569.6 930.4 L1571.1 928.7 L1572.6 926.7 L1574.7 927.7 L1575.6 926.6 L1577.1 929.3 L1578.6 933.1 L1580.5 936.1 L1581.6 933.1 L1583.1 934.2 L1584.6 933.4 L1586.1 932.4 L1587.6 926.8 L1589.1 926.7 L1590.8 925.0 L1592.1 928.4 L1593.6 930.8 L1595.4 935.0 L1596.6 931.9 L1598.1 928.0 L1599.6 929.0 L1601.5 924.7 L1602.6 922.7 L1604.1 917.8 L1605.6 915.7 L1607.2 909.3 L1608.7 915.8 L1610.2 920.2 L1611.7 927.9 L1613.2 932.6 L1614.1 938.1 L1616.2 933.0 L1617.7 927.5 L1619.2 924.5 L1620.9 921.6 L1622.2 924.0 L1623.7 922.2 L1625.2 926.1 L1626.7 926.9 L1628.2 925.1 L1630.1 928.9 L1631.2 926.1 L1632.7 925.7 L1634.2 927.5 L1635.8 926.1 L1637.2 930.0 L1638.7 929.6 L1640.2 930.6 L1641.7 934.8 L1642.7 933.8 L1644.7 932.6 L1646.2 926.9 L1647.7 925.1 L1649.6 924.7 L1650.7 923.9 L1652.2 919.9 L1653.7 917.8 L1655.2 920.6 L1656.7 917.4 L1657.6 916.0 L1659.7 917.3 L1661.2 922.3 L1663.3 925.0 L1664.2 925.8 L1665.7 929.6 L1667.2 934.3 L1669.1 937.6 L1670.2 933.3 L1671.7 926.7 L1673.2 925.0 L1674.7 918.7 L1675.9 914.2 L1677.7 909.8 L1679.2 909.0 L1680.7 904.3 L1681.7 902.4 L1683.7 908.4 L1685.2 913.5 L1687.4 918.3 L1688.2 914.3 L1689.7 910.3 L1691.2 907.6 L1693.1 904.0 L1694.2 908.5 L1695.7 908.9 L1697.2 912.8 L1698.7 911.4 L1700.0 916.1 L1701.7 915.9 L1703.2 912.6 L1704.6 910.2 L1706.2 910.6 L1707.7 909.1 L1709.2 909.8 L1710.8 910.3 L1712.6 912.4 L1713.8 915.4 L1715.3 922.4 L1716.1 922.4 L1718.3 919.5 L1719.8 918.1 L1721.3 916.0 L1722.9 915.8 L1724.3 918.1 L1725.8 923.1 L1727.5 926.9 L1728.8 925.9 L1730.3 918.5 L1731.8 917.0 L1733.3 911.2 L1734.4 907.1 L1736.3 913.3 L1737.8 921.0 L1739.3 922.0 L1741.3 931.2 L1742.3 926.6 L1743.8 923.5 L1745.3 918.8 L1746.8 910.7 L1748.8 905.3 L1749.8 905.7 L1751.3 910.5 L1752.8 913.4 L1753.9 918.3 L1755.8 919.6 L1757.3 915.4 L1758.8 914.2 L1760.8 913.8 L1761.8 914.3 L1763.3 919.2 L1764.8 921.6 L1766.3 921.3 L1767.6 924.9 L1769.3 923.4 L1770.8 922.5 L1772.3 918.6 L1773.4 916.0 L1775.3 910.5 L1776.8 899.1 L1778.3 893.0 L1779.1 892.4 L1779.8 892.5 L1781.3 892.7 L1782.8 897.5 L1784.8 900.6 L1785.8 901.9 L1787.3 903.8 L1788.8 905.2 L1790.5 909.7 L1791.8 912.7 L1793.3 911.0 L1795.1 912.1 L1796.3 912.2 L1797.8 916.8 L1799.3 919.4 L1800.8 924.8 L1802.3 926.6 L1803.2 930.7 L1805.3 917.9 L1806.8 908.6 L1807.7 904.0 L1809.8 884.5 L1811.3 877.1 L1812.3 866.4 L1814.4 882.7 L1815.9 893.7 L1816.9 902.3 L1818.9 906.4 L1820.4 912.4 L1821.9 916.2 L1822.6 920.7 L1823.4 922.9 L1824.9 921.4 L1826.4 923.0 L1827.9 919.9 L1829.4 919.1 L1830.7 921.9 L1832.4 923.2 L1833.9 924.9 L1835.4 925.2 L1836.9 927.8 L1838.7 929.0 L1839.9 932.5 L1841.4 931.5 L1842.9 934.3 L1844.4 937.1 L1845.9 934.5 L1847.4 933.2 L1848.9 933.4 L1850.4 931.5 L1851.3 933.6 L1853.4 938.4 L1854.7 938.8 L1856.4 933.7 L1857.9 930.4 L1859.3 929.5 L1860.9 929.2 L1862.4 932.5 L1863.9 934.4" class="ol2" stroke-width="1"/><text class="ax" x="1034.5" y="808.4" text-anchor="end" letter-spacing="-0.9">80%</text><text class="ax" x="1034.5" y="860.7" text-anchor="end" letter-spacing="-0.9">60%</text><text class="ax" x="1034.5" y="913.2" text-anchor="end" letter-spacing="-0.9">40%</text><text class="ax" x="1034.5" y="965.8" text-anchor="end" letter-spacing="-0.9">20%</text><text class="ax" x="1034.5" y="1018.1" text-anchor="end" letter-spacing="-0.9">0%</text><text class="ax" x="1087.3" y="1034.4" text-anchor="middle">18:00</text><text class="ax" x="1212.7" y="1034.4" text-anchor="middle">18:30</text><text class="ax" x="1338.0" y="1034.4" text-anchor="middle">18:00</text><text class="ax" x="1462.0" y="1034.4" text-anchor="middle">12:00</text><text class="ax" x="1584.4" y="1034.4" text-anchor="middle">18:00</text><text class="ax" x="1708.5" y="1034.4" text-anchor="middle">18:00</text><text class="ax" x="1823.1" y="1034.4" text-anchor="middle">18:30</text><path d="M1420.37 622.72 A123.50 123.50 0 0 1 1562.59 773.45 L1521.78 763.50 A81.50 81.50 0 0 0 1427.93 664.03 Z" fill="#2e2f31"/><path d="M1322.61 773.45 A123.50 123.50 0 0 1 1420.37 622.72 L1427.93 664.03 A81.50 81.50 0 0 0 1363.42 763.50 Z" fill="#ed8c2b"/><path d="M1310.47 776.41 A136.00 136.00 0 0 1 1562.93 680.81 L1554.08 685.47 A126.00 126.00 0 0 0 1320.18 774.04 Z" fill="#ed8c2b"/><path d="M1562.93 680.81 A136.00 136.00 0 0 1 1574.73 776.41 L1565.02 774.04 A126.00 126.00 0 0 0 1554.08 685.47 Z" fill="#e24a32"/><text transform="translate(1441.5 765.3) scale(0.94 1)" text-anchor="middle" class="gv">45%</text>
    <path d="M1843.500 937.500 C1846.500 958 1856 967.500 1876.500 970.500 C1856 973.500 1846.500 983 1843.500 1003.500 C1840.500 983 1831 973.500 1810.500 970.500 C1831 967.500 1840.500 958 1843.500 937.500Z" fill="#c9c8c2" opacity="0.820"/>
  </svg>
  <div class="ptitle" style="letter-spacing:-0.3px">CPU Usage</div>
</div>

</body>
</html>
